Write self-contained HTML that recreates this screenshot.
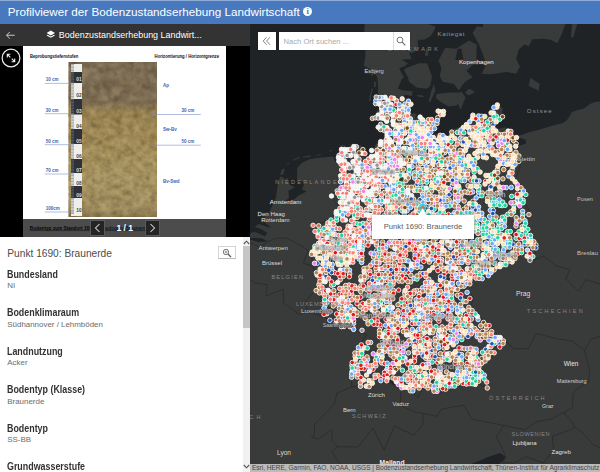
<!DOCTYPE html>
<html lang="de">
<head>
<meta charset="utf-8">
<title>Profilviewer der Bodenzustandserhebung Landwirtschaft</title>
<style>
*{box-sizing:border-box;margin:0;padding:0}
html,body{width:600px;height:472px;overflow:hidden;background:#fff;font-family:"Liberation Sans",sans-serif;}
#hdr{position:absolute;left:0;top:0;width:600px;height:24px;background:#4879bf;color:#fff;box-shadow:inset 0 1px 0 #8eabd8}
#hdr .t{position:absolute;left:7.8px;top:3.2px;font-size:11.68px;line-height:17px;white-space:nowrap}
#hdr .i{position:absolute;left:303.3px;top:7.2px;width:9px;height:9px;border-radius:50%;background:#fff;color:#4879bf;font-family:"Liberation Serif",serif;font-weight:bold;font-size:8.5px;line-height:9.5px;text-align:center}
#left{position:absolute;left:0;top:24px;width:250px;height:448px;background:#fff;overflow:hidden}
#ph{position:absolute;left:0;top:0;width:250px;height:22px;background:#333;color:#fff}
#ph .back{position:absolute;left:4.8px;top:6.2px}
#ph .ttl{position:absolute;left:-1px;width:250px;top:3px;text-align:center;font-size:8.93px;line-height:16px;white-space:nowrap}
#ph .ttl svg{vertical-align:-1.5px;margin-right:3px}
#viewer{position:absolute;left:0;top:22px;width:250px;height:191px;background:#000;overflow:hidden}
#img{position:absolute;left:23px;top:0;width:203px;height:200px;background:#fff}
#pager{position:absolute;left:0;top:173px;width:250px;height:18px;background:rgba(0,0,0,.7)}
#content{position:absolute;left:0;top:213px;width:250px;height:235px;background:#fff;color:#323232}
#map{position:absolute;left:250px;top:24px;width:350px;height:448px;background:#1f2326;overflow:hidden}
#attr{position:absolute;left:0;bottom:0;width:350px;height:8.5px;background:rgba(210,210,210,.85);color:#444;font-size:6.5px;line-height:8.5px;white-space:nowrap;padding-left:2px;overflow:hidden}
.btn{position:absolute;background:#fff;box-shadow:0 0 1px rgba(0,0,0,.4)}

.ptitle{position:absolute;left:7.3px;top:10px;font-size:10.18px;line-height:13px;color:#4c4c4c;white-space:nowrap}
.zoombtn{position:absolute;left:217.5px;top:8.5px;width:18px;height:13.5px;border:1px solid #d4d4d4;border-bottom-color:#b8b8b8;border-radius:1px;background:#fff}
.zoombtn svg{position:absolute;left:3.5px;top:1.5px}
.f{position:absolute;left:7.3px;white-space:nowrap}
.f b{display:block;font-size:10px;line-height:13px;color:#323232;transform:scaleX(.889);transform-origin:0 0}
.f span{display:block;font-size:7.93px;line-height:9px;margin-top:.4px;color:#6b6b6b}
.sb{position:absolute;left:242.5px;top:0;width:7.5px;height:235px;background:#f1f1f1}
.sb .thumb{position:absolute;left:0;top:9px;width:7.5px;height:82px;background:#c6c6c6}
.sb .up{position:absolute;left:.3px;top:2.5px}
.sb .dn{position:absolute;left:.3px;bottom:3.5px}
.pb{position:absolute;top:1.2px;width:15px;height:16px;background:#242424;border:1px solid #5a5a5a}
.pb svg{position:absolute;left:-1px;top:-1px}
.pn{position:absolute;left:105px;width:39.5px;top:1px;text-align:center;color:#fff;font-weight:bold;font-size:8.6px;line-height:16px}
.ph{position:absolute;left:4.6px;top:2.5px;font-size:7.6px;line-height:13px;color:#a9a9a9}
.sdiv{position:absolute;left:113.5px;top:0;width:1px;height:18px;background:#ddd}
.tip{position:absolute;left:122px;top:191px;width:102px;height:23.5px;background:#fff;box-shadow:0 0 2px rgba(0,0,0,.5);text-align:center}
.tip span{font-size:7.63px;line-height:23.5px;color:#5a5a5a;white-space:nowrap}
</style>
</head>
<body>
<div id="hdr"><div class="t">Profilviewer der Bodenzustandserhebung Landwirtschaft</div><div class="i">i</div></div>
<div id="left">
 <div id="ph">
  <svg class="back" width="10.5" height="10.5" viewBox="0 0 12 12"><path d="M11 6H2M5.5 2.2L1.7 6l3.8 3.8" fill="none" stroke="#ddd" stroke-width="1"/></svg>
  <div class="ttl"><svg width="9.6" height="9.6" viewBox="0 0 16 16"><path d="M8 1L1 5l7 4 7-4zM2.5 8L1 9l7 4 7-4-1.5-1L8 11z" fill="#fff"/></svg>Bodenzustandserhebung Landwirt...</div>
 </div>
 <div id="viewer">
  <div id="img"><svg width="203" height="191" viewBox="0 0 203 191" style="position:absolute;left:0;top:0;font-family:'Liberation Sans',sans-serif">
<defs>
<linearGradient id="soil" x1="0" y1="0" x2="0" y2="1">
<stop offset="0" stop-color="#6b5d49"/><stop offset=".05" stop-color="#7a6a54"/><stop offset=".26" stop-color="#77674e"/><stop offset=".32" stop-color="#9a8350"/><stop offset=".5" stop-color="#a38c55"/><stop offset=".75" stop-color="#ab9863"/><stop offset=".95" stop-color="#a08d5c"/><stop offset="1" stop-color="#857349"/>
</linearGradient>
<filter id="tex" x="0" y="0" width="100%" height="100%"><feTurbulence type="fractalNoise" baseFrequency=".18" numOctaves="3" seed="4" result="n"/><feColorMatrix in="n" type="matrix" values="0 0 0 0 0  0 0 0 0 0  0 0 0 0 0  .9 .9 .9 0 -1.05" result="a"/><feFlood flood-color="#3a2c18"/><feComposite in2="a" operator="in"/></filter>
<filter id="tex2" x="0" y="0" width="100%" height="100%"><feTurbulence type="fractalNoise" baseFrequency=".09" numOctaves="2" seed="9" result="n"/><feColorMatrix in="n" type="matrix" values="0 0 0 0 0  0 0 0 0 0  0 0 0 0 0  1.1 1.1 1.1 0 -1.25" result="a"/><feFlood flood-color="#d8c79a"/><feComposite in2="a" operator="in"/></filter>
</defs>
<rect x="45.5" y="16" width="88.5" height="155" fill="url(#soil)"/>
<rect x="45.5" y="16" width="88.5" height="155" filter="url(#tex)" opacity=".4"/>
<rect x="45.5" y="16" width="88.5" height="155" filter="url(#tex2)" opacity=".28"/>
<rect x="48" y="18" width="11" height="152" fill="#eeeeec"/>
<rect x="48" y="26" width="11" height="11" fill="#2e3138"/>
<rect x="48" y="53" width="11" height="15.5" fill="#2e3138"/>
<rect x="48" y="83" width="11" height="15" fill="#2e3138"/>
<rect x="48" y="113" width="11" height="14" fill="#2e3138"/>
<rect x="48" y="140" width="11" height="12" fill="#2e3138"/>
<path d="M48.0,18.5h3 M48.0,20.0h3 M48.0,21.5h3 M48.0,23.1h3 M48.0,24.6h3 M48.0,26.1h3 M48.0,27.6h3 M48.0,29.1h3 M48.0,30.7h3 M48.0,32.2h3 M48.0,33.7h3 M48.0,35.2h3 M48.0,36.7h3 M48.0,38.3h3 M48.0,39.8h3 M48.0,41.3h3 M48.0,42.8h3 M48.0,44.3h3 M48.0,45.9h3 M48.0,47.4h3 M48.0,48.9h3 M48.0,50.4h3 M48.0,51.9h3 M48.0,53.5h3 M48.0,55.0h3 M48.0,56.5h3 M48.0,58.0h3 M48.0,59.5h3 M48.0,61.1h3 M48.0,62.6h3 M48.0,64.1h3 M48.0,65.6h3 M48.0,67.1h3 M48.0,68.7h3 M48.0,70.2h3 M48.0,71.7h3 M48.0,73.2h3 M48.0,74.7h3 M48.0,76.3h3 M48.0,77.8h3 M48.0,79.3h3 M48.0,80.8h3 M48.0,82.3h3 M48.0,83.9h3 M48.0,85.4h3 M48.0,86.9h3 M48.0,88.4h3 M48.0,89.9h3 M48.0,91.5h3 M48.0,93.0h3 M48.0,94.5h3 M48.0,96.0h3 M48.0,97.5h3 M48.0,99.1h3 M48.0,100.6h3 M48.0,102.1h3 M48.0,103.6h3 M48.0,105.1h3 M48.0,106.7h3 M48.0,108.2h3 M48.0,109.7h3 M48.0,111.2h3 M48.0,112.7h3 M48.0,114.3h3 M48.0,115.8h3 M48.0,117.3h3 M48.0,118.8h3 M48.0,120.3h3 M48.0,121.9h3 M48.0,123.4h3 M48.0,124.9h3 M48.0,126.4h3 M48.0,127.9h3 M48.0,129.5h3 M48.0,131.0h3 M48.0,132.5h3 M48.0,134.0h3 M48.0,135.5h3 M48.0,137.1h3 M48.0,138.6h3 M48.0,140.1h3 M48.0,141.6h3 M48.0,143.1h3 M48.0,144.7h3 M48.0,146.2h3 M48.0,147.7h3 M48.0,149.2h3 M48.0,150.7h3 M48.0,152.3h3 M48.0,153.8h3 M48.0,155.3h3 M48.0,156.8h3 M48.0,158.3h3 M48.0,159.9h3 M48.0,161.4h3 M48.0,162.9h3 M48.0,164.4h3 M48.0,165.9h3 M48.0,167.5h3" stroke="#777" stroke-width=".6"/>
<text x="53.2" y="35" font-size="4.6" font-weight="bold" fill="#ddd" textLength="5.4" lengthAdjust="spacingAndGlyphs">01</text>
<text x="53.2" y="51" font-size="4.6" font-weight="bold" fill="#444" textLength="5.4" lengthAdjust="spacingAndGlyphs">02</text>
<text x="53.2" y="67" font-size="4.6" font-weight="bold" fill="#ddd" textLength="5.4" lengthAdjust="spacingAndGlyphs">03</text>
<text x="53.2" y="82" font-size="4.6" font-weight="bold" fill="#444" textLength="5.4" lengthAdjust="spacingAndGlyphs">04</text>
<text x="53.2" y="97" font-size="4.6" font-weight="bold" fill="#ddd" textLength="5.4" lengthAdjust="spacingAndGlyphs">05</text>
<text x="53.2" y="112" font-size="4.6" font-weight="bold" fill="#444" textLength="5.4" lengthAdjust="spacingAndGlyphs">06</text>
<text x="53.2" y="126" font-size="4.6" font-weight="bold" fill="#ddd" textLength="5.4" lengthAdjust="spacingAndGlyphs">07</text>
<text x="53.2" y="139" font-size="4.6" font-weight="bold" fill="#444" textLength="5.4" lengthAdjust="spacingAndGlyphs">08</text>
<text x="53.2" y="151" font-size="4.6" font-weight="bold" fill="#ddd" textLength="5.4" lengthAdjust="spacingAndGlyphs">09</text>
<text x="53.2" y="166" font-size="4.6" font-weight="bold" fill="#444" textLength="5.4" lengthAdjust="spacingAndGlyphs">10</text>
<text x="7" y="12" font-size="4.5" font-weight="bold" fill="#111" textLength="48.3" lengthAdjust="spacingAndGlyphs">Beprobungstiefenstufen</text>
<text x="131.6" y="12" font-size="4.5" font-weight="bold" fill="#111" textLength="64.4" lengthAdjust="spacingAndGlyphs">Horizontierung / Horizontgrenze</text>
<path d="M21.8,37.4H51.0" stroke="#7a95c8" stroke-width=".6"/>
<text x="22.7" y="35.2" font-size="4.5" font-weight="bold" fill="#3c64b4">10 cm</text>
<path d="M21.8,67.7H51.0" stroke="#7a95c8" stroke-width=".6"/>
<text x="22.7" y="65.5" font-size="4.5" font-weight="bold" fill="#3c64b4">30 cm</text>
<path d="M21.8,98.7H51.0" stroke="#7a95c8" stroke-width=".6"/>
<text x="22.7" y="96.5" font-size="4.5" font-weight="bold" fill="#3c64b4">50 cm</text>
<path d="M21.8,128.0H51.0" stroke="#7a95c8" stroke-width=".6"/>
<text x="22.7" y="125.8" font-size="4.5" font-weight="bold" fill="#3c64b4">70 cm</text>
<path d="M21.8,166.0H51.0" stroke="#7a95c8" stroke-width=".6"/>
<text x="22.7" y="163.8" font-size="4.5" font-weight="bold" fill="#3c64b4">100cm</text>
<path d="M129.0,68.5H177.8" stroke="#7a95c8" stroke-width=".6"/>
<text x="158.5" y="65.9" font-size="4.5" font-weight="bold" fill="#3c64b4">30 cm</text>
<path d="M129.0,99.2H177.8" stroke="#7a95c8" stroke-width=".6"/>
<text x="158.5" y="96.6" font-size="4.5" font-weight="bold" fill="#3c64b4">50 cm</text>
<text x="140.0" y="41.2" font-size="4.5" font-weight="bold" fill="#3c64b4">Ap</text>
<text x="140.0" y="85.2" font-size="4.5" font-weight="bold" fill="#3c64b4">Sw-Bv</text>
<text x="140.0" y="136.8" font-size="4.5" font-weight="bold" fill="#3c64b4">Bv-Swd</text>
<text x="6.800000000000001" y="183.6" font-size="4.7" font-weight="bold" fill="#111" text-decoration="underline">Bodentyp zum Standort 1690: <tspan fill="#2b4f9e">Pseudogley-Braunerde</tspan></text>
</svg></div>
  <div id="pager"><div class="pb" style="left:90px"><svg width="15" height="16" viewBox="0 0 15 16"><path d="M9.5 4L5.5 8l4 4" fill="none" stroke="#d8d8d8" stroke-width="1.05"/></svg></div>
<div class="pn">1 / 1</div>
<div class="pb" style="left:144.5px"><svg width="15" height="16" viewBox="0 0 15 16"><path d="M5.5 4l4 4-4 4" fill="none" stroke="#d8d8d8" stroke-width="1.05"/></svg></div>
</div>
  <svg style="position:absolute;left:1.3px;top:2px" width="20" height="20" viewBox="0 0 20 20"><circle cx="10" cy="10" r="8.9" fill="#000" stroke="#eee" stroke-width="1.2"/><path d="M6.3 9.4V6.3H9.4M6.6 6.6L9.3 9.3M13.7 10.6v3.1h-3.1M13.4 13.4L10.7 10.7" fill="none" stroke="#eee" stroke-width="1.1"/></svg>

 </div>
 <div id="content"><div class="ptitle">Punkt 1690: Braunerde</div>
<div class="zoombtn"><svg width="10" height="10" viewBox="0 0 10 10"><circle cx="4" cy="4" r="2.7" fill="none" stroke="#555" stroke-width=".8"/><path d="M6 6L9 9" stroke="#555" stroke-width="1.2"/><path d="M2.6 4h2.8M4 2.6v2.8" stroke="#555" stroke-width=".6"/></svg></div>
<div class="f" style="top:30.8px"><b>Bundesland</b><span>NI</span></div>
<div class="f" style="top:69.3px"><b>Bodenklimaraum</b><span>Südhannover / Lehmböden</span></div>
<div class="f" style="top:107.8px"><b>Landnutzung</b><span>Acker</span></div>
<div class="f" style="top:146.3px"><b>Bodentyp (Klasse)</b><span>Braunerde</span></div>
<div class="f" style="top:184.8px"><b>Bodentyp</b><span>SS-BB</span></div>
<div class="f" style="top:223.3px"><b>Grundwasserstufe</b><span>&nbsp;</span></div>
<div class="sb"><div class="thumb"></div>
<svg class="up" width="7" height="5" viewBox="0 0 7 5"><path d="M.8 4L3.5 1.2 6.2 4" fill="none" stroke="#555" stroke-width="1.1"/></svg>
<svg class="dn" width="7" height="5" viewBox="0 0 7 5"><path d="M.8 1L3.5 3.8 6.2 1" fill="none" stroke="#555" stroke-width="1.1"/></svg></div>
</div>
</div>
<div id="map">
<svg width="350" height="448" viewBox="0 0 350 448" style="position:absolute;left:0;top:0">
<rect width="350" height="448" fill="#1f2326"/>
<path d="M-87.4,490.6 -87.4,239.9 -25.2,230.1 -7.7,218.9 -3.5,217.3 1.0,215.8 8.5,218.1 17.7,217.3 12.2,214.6 4.7,213.8 1.5,214.2 -1.7,211.0 2.2,208.2 6.0,208.2 14.7,212.2 17.2,209.0 11.0,204.9 4.7,202.9 8.5,200.1 14.7,202.1 20.9,204.1 14.7,198.1 11.0,198.5 13.4,194.9 14.7,192.9 19.7,187.2 25.9,173.8 27.6,161.5 30.1,152.8 32.1,152.8 34.6,155.3 38.3,154.0 47.1,148.2 47.3,144.1 52.0,138.7 59.5,135.3 67.0,134.1 74.4,133.3 83.2,132.4 85.2,137.4 89.4,140.8 91.9,141.6 91.9,136.6 87.4,136.6 86.9,130.3 89.4,125.3 99.4,122.8 111.8,121.5 113.0,125.3 115.5,129.5 113.5,132.4 116.8,134.5 119.3,132.4 119.3,126.1 124.2,126.1 125.5,130.3 124.2,136.6 126.7,130.3 124.7,121.9 129.2,114.8 136.7,115.6 144.2,119.8 151.6,126.1 147.9,119.8 141.7,114.4 135.5,113.5 133.0,108.0 133.0,103.8 135.5,96.5 126.7,96.5 128.0,93.1 136.7,89.3 133.0,83.7 129.2,77.2 128.0,70.3 128.0,62.0 127.2,53.3 123.0,45.9 113.8,41.9 115.5,31.3 114.8,22.4 114.3,9.0 114.8,-2.2 116.8,-22.7 169.1,-22.7 169.1,-4.5 170.3,-2.2 185.3,2.3 184.8,5.4 180.3,12.6 174.0,15.7 167.8,15.7 167.8,24.7 162.8,29.1 159.1,28.7 161.6,34.9 151.6,35.7 157.9,39.3 155.9,41.5 149.1,44.6 154.1,53.3 151.6,55.5 147.9,64.7 154.1,66.4 162.8,67.3 161.6,72.0 155.4,70.7 147.9,74.2 159.1,75.1 162.3,80.7 157.9,89.3 166.6,89.3 165.3,95.2 169.1,91.0 179.0,95.7 186.5,93.1 189.0,94.0 185.3,105.0 181.5,105.9 181.5,110.5 191.5,109.3 197.7,112.7 201.4,105.9 213.4,101.6 220.1,96.5 223.9,88.8 233.8,90.5 237.5,92.2 240.0,85.8 242.5,81.5 247.0,80.2 253.2,84.5 251.7,91.4 255.0,95.2 248.8,96.5 245.0,99.9 247.5,105.0 255.0,102.9 261.2,107.2 267.4,112.2 279.9,108.0 290.0,105.5 301.0,102.0 313.0,99.0 317.0,96.0 322.0,88.0 328.0,86.0 334.0,84.5 340.0,80.0 345.0,78.0 351.0,77.5 360.8,73.8 385.7,92.2 385.7,490.6Z M187.2,90.1 187.7,86.7 194.0,87.1 194.5,91.4 190.2,92.2Z M155.4,44.6 164.1,41.0 169.1,39.3 177.0,39.3 179.0,44.6 182.0,52.4 180.3,62.0 176.5,64.7 166.6,63.4 159.1,57.7 157.9,53.3 154.1,46.7Z M184.0,59.9 185.3,66.4 180.3,78.1 178.5,77.2 181.5,66.4Z M166.6,70.7 172.8,71.6 174.0,73.3 167.8,72.5Z M188.5,36.6 195.2,23.8 205.2,24.7 207.7,23.8 218.9,16.6 226.8,20.6 226.3,35.7 228.3,41.0 223.9,40.1 216.4,46.7 222.6,53.3 215.1,57.7 212.6,60.7 208.9,66.4 203.9,59.9 192.7,57.7 189.7,52.0 191.5,44.6Z M185.8,73.8 186.5,69.9 198.9,68.6 207.7,68.6 208.9,78.5 206.4,81.5 198.9,82.4 191.5,78.5Z M205.9,69.4 211.4,67.7 215.6,73.3 210.7,85.4 207.7,79.4Z M215.1,68.6 218.9,64.7 225.1,67.7 218.9,71.6Z M174.8,31.3 176.5,23.3 178.5,26.9 177.8,32.2Z M278.6,62.0 280.4,53.8 289.8,59.9 288.6,66.4Z M233.8,-22.7 233.8,-1.8 232.6,3.2 226.8,2.3 222.6,9.0 228.8,20.2 232.1,28.2 236.3,40.1 231.8,49.8 240.0,50.3 256.7,48.1 266.2,49.8 269.9,42.4 266.2,34.9 268.7,25.5 274.9,20.2 278.6,22.4 282.4,15.3 293.6,14.8 301.0,15.7 307.3,19.3 312.2,9.0 316.0,-1.8 318.5,-22.7Z M321.0,13.5 322.2,-4.5 327.2,-22.7 328.4,-4.5 323.4,13.5Z M30.1,151.1 32.1,144.9 34.6,144.9 33.4,150.3Z M35.4,141.6 39.6,138.3 39.1,139.9Z M42.1,136.2 49.5,132.4 49.5,134.1 43.3,136.6Z M52.5,132.8 60.8,131.6 60.8,132.8 53.3,133.7Z M65.0,131.6 70.7,129.9 70.7,131.2Z M78.2,127.0 81.9,125.7 81.4,127.4Z M89.4,121.9 94.4,120.7 94.4,121.9Z M98.1,120.3 103.1,119.4 103.1,120.7Z M118.8,77.2 120.0,70.7 121.8,64.2 123.0,65.1 121.3,70.7 120.5,77.2Z M121.8,79.4 125.5,77.2 126.7,79.4 124.2,80.7Z M123.8,62.9 124.2,57.7 126.0,57.7 125.7,62.9Z M120.5,51.1 121.3,46.7 123.0,48.1 123.0,52.0Z M126.2,88.0 128.0,85.8 129.7,87.1 128.0,89.3Z" fill="#393a3a"/>
<path d="M38.3,154.0 47.1,148.2 47.1,156.1 52.0,157.7 55.0,157.7 52.0,165.2 56.5,167.6 48.3,171.7 42.1,177.0 38.8,178.6 35.9,176.6 39.1,173.8 38.3,166.8 44.6,163.5 39.6,160.6 37.8,155.3Z M257.5,114.8 263.7,119.8 268.7,121.9 276.1,119.4 275.6,115.6 268.7,113.5 261.2,113.5Z M198.9,490.6 218.9,459.2 222.6,455.7 217.6,448.6 220.1,440.5 226.3,438.0 238.8,432.7 246.3,430.2 250.0,429.1 255.5,432.7 254.2,436.2 250.0,438.7 248.8,448.6 251.2,459.2 261.2,462.7 267.4,450.4 269.9,444.0 276.1,446.9 283.6,455.7 291.1,473.2 291.1,490.6Z M136.7,354.5 141.7,359.4 151.6,364.9 155.4,365.6 149.1,361.9 141.7,356.4Z M207.7,24.7 205.2,35.7 208.9,36.6 213.4,35.7 211.4,24.7Z" fill="#1f2326"/>
<path d="M-3.5,217.3 9.7,223.3 18.4,217.3 25.9,214.2 37.1,214.2 49.5,220.9 58.3,226.1 53.3,239.2 62.0,241.9 M-23.9,228.9 -15.2,243.9 -5.2,251.7 4.7,258.8 17.2,260.7 15.9,272.0 33.4,265.4 33.4,278.9 49.5,290.5 57.5,288.5 M65.2,266.2 55.8,277.0 57.5,288.5 71.2,291.6 M101.8,362.7 86.9,369.3 84.4,380.3 64.5,400.3 64.5,411.2 61.3,413.0 68.2,414.8 81.9,405.8 81.9,416.6 88.1,422.7 M88.1,422.7 81.9,427.3 89.4,439.8 77.7,452.2 86.9,466.2 84.4,476.7 M88.1,422.7 108.1,423.0 123.0,404.0 134.2,426.2 144.2,402.1 164.1,411.2 172.8,400.3 173.3,389.4 M173.3,389.4 166.6,388.7 151.6,382.1 150.4,373.0 151.6,364.5 M173.3,389.4 186.5,392.4 191.5,385.1 213.9,381.1 221.4,394.9 253.7,401.4 M253.7,401.4 246.3,413.0 251.2,421.9 256.2,434.4 M253.7,401.4 274.9,405.8 286.1,397.8 302.3,394.9 311.0,389.4 313.5,388.7 M251.2,438.7 263.7,439.1 276.1,432.7 293.6,439.1 303.5,425.5 302.3,412.2 318.5,406.5 324.7,402.9 319.7,394.9 313.5,388.7 M313.5,388.7 322.2,384.0 323.4,369.3 328.4,363.8 338.4,358.2 339.6,347.1 M324.7,402.9 333.4,409.4 343.4,420.9 360.8,428.0 M339.6,347.1 334.7,326.5 322.2,317.1 306.0,314.5 286.1,309.5 278.6,324.7 263.7,324.7 257.0,318.2 M334.7,326.5 340.9,315.2 358.3,309.5 368.3,298.1 M281.6,237.2 293.6,232.0 306.0,241.9 319.7,245.8 316.0,254.9 328.4,267.3 335.9,255.6 352.1,260.7 350.8,265.4 360.8,270.0 374.5,275.1 M128.0,70.3 136.7,72.0 147.9,74.2 159.1,75.1 162.3,80.7 157.9,89.3 166.6,89.3 165.3,95.2 169.1,91.0 179.0,95.7 186.5,93.1 189.0,91.4 187.7,86.7 194.0,87.1 194.0,92.2 189.0,94.0 185.3,105.0 181.5,105.9 181.5,110.5 191.5,109.3 197.7,112.7 201.4,105.9 213.4,101.6 220.1,96.5 223.9,88.8 233.8,90.5 237.5,92.2 240.0,85.8 242.5,81.5 247.0,80.2 253.2,84.5 251.7,91.4 255.0,95.2 248.8,96.5 245.0,99.9 247.5,105.0 255.0,102.9 261.2,107.2 266.7,112.2 267.9,121.9 271.4,138.7 264.9,156.9 276.6,168.4 274.9,177.8 279.9,189.2 276.1,199.3 279.9,210.2 286.8,221.3 285.6,228.1 281.6,237.2 276.6,234.8 273.6,230.9 268.7,230.1 267.4,236.0 258.7,239.9 248.8,243.9 241.3,250.9 236.3,254.5 223.9,255.6 219.6,261.5 213.9,258.8 216.4,267.3 223.9,273.1 221.4,280.9 227.6,292.4 236.3,298.1 246.3,309.5 257.0,318.2 247.5,325.8 236.3,337.8 230.1,343.4 236.3,352.7 238.3,365.6 230.1,360.1 216.4,361.9 201.4,362.7 189.0,369.3 172.8,363.8 167.8,373.7 161.6,367.5 151.6,364.5 141.7,360.1 131.7,358.2 125.5,354.5 121.8,363.1 101.8,362.7 100.6,350.8 101.8,335.9 106.8,324.7 116.8,310.7 99.4,305.0 86.9,301.9 75.7,293.5 71.2,291.6 74.4,278.9 65.2,266.2 69.5,257.6 63.2,243.9 62.0,234.8 58.8,230.1 64.5,224.1 67.0,212.2 61.3,198.9 72.0,198.9 81.9,193.3 88.1,181.9 79.4,171.7 88.1,166.0 91.9,142.8 87.4,136.6 86.9,130.3 89.4,125.3 99.4,122.8 111.8,121.5 113.0,125.3 115.5,129.5 113.5,132.4 116.8,134.5 119.3,132.4 119.3,126.1 124.2,126.1 124.7,121.9 129.2,114.8 136.7,115.6 133.0,108.0 133.0,103.8 135.5,96.5 126.7,96.5 128.0,93.1 136.7,89.3 133.0,83.7 129.2,77.2Z" fill="none" stroke="#2a2a2a" stroke-width="0.8" stroke-linejoin="round"/>
<g stroke="#fff" stroke-width="0.85" style="filter:blur(.33px)">
<g fill="#6ea8fb">
<circle cx="240.3" cy="186.3" r="2.25"/>
<circle cx="168.6" cy="290.8" r="2.25"/>
<circle cx="231.1" cy="100.7" r="2.25"/>
<circle cx="170.2" cy="328.6" r="2.25"/>
<circle cx="228.7" cy="92.0" r="2.25"/>
<circle cx="167.9" cy="326.2" r="2.25"/>
<circle cx="246.1" cy="115.5" r="2.25"/>
<circle cx="105.1" cy="341.1" r="2.25"/>
<circle cx="213.4" cy="351.3" r="2.25"/>
<circle cx="89.0" cy="281.7" r="2.25"/>
<circle cx="189.7" cy="290.8" r="2.25"/>
<circle cx="154.3" cy="284.3" r="2.25"/>
<circle cx="256.9" cy="137.1" r="2.25"/>
<circle cx="200.5" cy="128.9" r="2.25"/>
<circle cx="135.9" cy="221.8" r="2.25"/>
<circle cx="222.7" cy="167.9" r="2.25"/>
<circle cx="192.4" cy="291.4" r="2.25"/>
<circle cx="154.3" cy="189.6" r="2.25"/>
<circle cx="188.5" cy="312.1" r="2.25"/>
<circle cx="103.5" cy="299.4" r="2.25"/>
<circle cx="195.4" cy="123.3" r="2.25"/>
<circle cx="162.5" cy="213.7" r="2.25"/>
<circle cx="154.6" cy="201.7" r="2.25"/>
<circle cx="154.6" cy="94.7" r="2.25"/>
</g>
<g fill="#b58252">
<circle cx="257.3" cy="211.2" r="2.25"/>
<circle cx="81.5" cy="243.2" r="2.25"/>
<circle cx="253.9" cy="216.9" r="2.25"/>
<circle cx="170.4" cy="249.5" r="2.25"/>
<circle cx="143.6" cy="94.4" r="2.25"/>
<circle cx="254.6" cy="193.0" r="2.25"/>
<circle cx="148.1" cy="129.9" r="2.25"/>
<circle cx="163.5" cy="201.5" r="2.25"/>
<circle cx="272.2" cy="202.8" r="2.25"/>
<circle cx="204.5" cy="194.6" r="2.25"/>
<circle cx="237.9" cy="168.6" r="2.25"/>
<circle cx="155.2" cy="248.3" r="2.25"/>
<circle cx="179.9" cy="296.5" r="2.25"/>
<circle cx="126.9" cy="215.2" r="2.25"/>
<circle cx="210.3" cy="353.5" r="2.25"/>
<circle cx="175.1" cy="361.9" r="2.25"/>
<circle cx="226.9" cy="236.7" r="2.25"/>
<circle cx="211.2" cy="170.7" r="2.25"/>
<circle cx="147.0" cy="162.9" r="2.25"/>
<circle cx="111.9" cy="232.5" r="2.25"/>
<circle cx="163.7" cy="101.2" r="2.25"/>
<circle cx="156.3" cy="210.1" r="2.25"/>
<circle cx="256.7" cy="223.0" r="2.25"/>
<circle cx="137.7" cy="251.3" r="2.25"/>
<circle cx="149.9" cy="248.1" r="2.25"/>
<circle cx="153.5" cy="216.3" r="2.25"/>
<circle cx="122.9" cy="259.6" r="2.25"/>
<circle cx="86.4" cy="204.5" r="2.25"/>
<circle cx="172.9" cy="175.2" r="2.25"/>
<circle cx="171.4" cy="293.1" r="2.25"/>
</g>
<g fill="#fde3b5">
<circle cx="159.3" cy="127.6" r="2.25"/>
<circle cx="262.3" cy="154.7" r="2.25"/>
<circle cx="151.8" cy="174.9" r="2.25"/>
<circle cx="131.1" cy="259.7" r="2.25"/>
<circle cx="195.8" cy="359.1" r="2.25"/>
<circle cx="163.3" cy="361.1" r="2.25"/>
<circle cx="158.0" cy="94.9" r="2.25"/>
<circle cx="183.1" cy="205.2" r="2.25"/>
<circle cx="197.2" cy="141.1" r="2.25"/>
<circle cx="116.6" cy="351.0" r="2.25"/>
<circle cx="178.4" cy="98.9" r="2.25"/>
<circle cx="178.1" cy="108.0" r="2.25"/>
<circle cx="245.8" cy="106.9" r="2.25"/>
<circle cx="201.3" cy="126.7" r="2.25"/>
<circle cx="175.4" cy="101.5" r="2.25"/>
</g>
<g fill="#1f55b5">
<circle cx="108.8" cy="225.8" r="2.25"/>
<circle cx="75.8" cy="252.0" r="2.25"/>
<circle cx="173.1" cy="332.0" r="2.25"/>
<circle cx="123.2" cy="253.6" r="2.25"/>
</g>
<g fill="#7b4a12">
<circle cx="222.9" cy="177.3" r="2.25"/>
<circle cx="164.8" cy="163.0" r="2.25"/>
<circle cx="220.4" cy="339.6" r="2.25"/>
</g>
<g fill="#1fd6a0">
<circle cx="266.9" cy="196.5" r="2.25"/>
<circle cx="152.0" cy="186.6" r="2.25"/>
<circle cx="203.6" cy="218.3" r="2.25"/>
<circle cx="113.3" cy="264.7" r="2.25"/>
<circle cx="236.0" cy="212.7" r="2.25"/>
<circle cx="227.1" cy="144.6" r="2.25"/>
<circle cx="277.8" cy="205.3" r="2.25"/>
<circle cx="242.7" cy="204.1" r="2.25"/>
<circle cx="245.7" cy="195.7" r="2.25"/>
<circle cx="145.5" cy="186.2" r="2.25"/>
<circle cx="209.7" cy="132.2" r="2.25"/>
<circle cx="189.2" cy="211.3" r="2.25"/>
<circle cx="193.3" cy="188.1" r="2.25"/>
<circle cx="104.0" cy="185.2" r="2.25"/>
<circle cx="167.8" cy="148.4" r="2.25"/>
<circle cx="164.5" cy="148.8" r="2.25"/>
</g>
<g fill="#969696">
<circle cx="171.1" cy="213.9" r="2.25"/>
<circle cx="87.2" cy="166.9" r="2.25"/>
<circle cx="208.8" cy="232.4" r="2.25"/>
<circle cx="137.1" cy="88.6" r="2.25"/>
<circle cx="185.5" cy="235.1" r="2.25"/>
</g>
<g fill="#f57ef0">
<circle cx="103.5" cy="220.5" r="2.25"/>
<circle cx="230.3" cy="316.0" r="2.25"/>
<circle cx="184.5" cy="178.4" r="2.25"/>
<circle cx="177.4" cy="281.7" r="2.25"/>
</g>
<g fill="#e31a1c">
<circle cx="211.3" cy="247.3" r="2.25"/>
<circle cx="110.4" cy="273.2" r="2.25"/>
<circle cx="164.6" cy="334.4" r="2.25"/>
<circle cx="151.6" cy="281.2" r="2.25"/>
<circle cx="162.2" cy="299.5" r="2.25"/>
<circle cx="144.8" cy="292.4" r="2.25"/>
<circle cx="168.2" cy="222.4" r="2.25"/>
<circle cx="268.4" cy="229.0" r="2.25"/>
<circle cx="123.8" cy="297.8" r="2.25"/>
<circle cx="130.3" cy="303.5" r="2.25"/>
<circle cx="235.6" cy="328.0" r="2.25"/>
<circle cx="218.5" cy="298.5" r="2.25"/>
<circle cx="181.9" cy="264.1" r="2.25"/>
</g>
<g fill="#fb8072">
<circle cx="99.0" cy="261.0" r="2.25"/>
<circle cx="92.5" cy="264.6" r="2.25"/>
<circle cx="199.2" cy="267.5" r="2.25"/>
<circle cx="169.0" cy="210.7" r="2.25"/>
<circle cx="157.3" cy="106.5" r="2.25"/>
<circle cx="194.2" cy="312.3" r="2.25"/>
<circle cx="101.6" cy="269.9" r="2.25"/>
<circle cx="137.2" cy="183.4" r="2.25"/>
<circle cx="163.9" cy="358.0" r="2.25"/>
<circle cx="175.7" cy="175.1" r="2.25"/>
<circle cx="198.4" cy="282.2" r="2.25"/>
<circle cx="103.7" cy="205.4" r="2.25"/>
<circle cx="193.6" cy="182.1" r="2.25"/>
<circle cx="236.7" cy="358.1" r="2.25"/>
<circle cx="143.0" cy="260.2" r="2.25"/>
<circle cx="133.1" cy="135.5" r="2.25"/>
<circle cx="153.6" cy="206.8" r="2.25"/>
<circle cx="201.1" cy="132.3" r="2.25"/>
<circle cx="136.9" cy="179.8" r="2.25"/>
<circle cx="183.9" cy="281.8" r="2.25"/>
<circle cx="130.7" cy="103.3" r="2.25"/>
<circle cx="104.8" cy="187.6" r="2.25"/>
<circle cx="146.6" cy="88.8" r="2.25"/>
</g>
<g fill="#f2f2f2">
<circle cx="138.3" cy="153.0" r="2.25"/>
<circle cx="119.7" cy="182.8" r="2.25"/>
<circle cx="116.9" cy="170.2" r="2.25"/>
<circle cx="186.2" cy="122.5" r="2.25"/>
<circle cx="162.6" cy="137.1" r="2.25"/>
<circle cx="109.0" cy="138.2" r="2.25"/>
<circle cx="112.1" cy="208.8" r="2.25"/>
<circle cx="124.4" cy="132.4" r="2.25"/>
<circle cx="134.1" cy="94.7" r="2.25"/>
<circle cx="139.4" cy="118.5" r="2.25"/>
<circle cx="142.9" cy="97.2" r="2.25"/>
<circle cx="129.2" cy="245.1" r="2.25"/>
<circle cx="102.0" cy="347.5" r="2.25"/>
</g>
<g fill="#6ea8fb">
<circle cx="230.8" cy="204.3" r="2.25"/>
<circle cx="178.8" cy="352.3" r="2.25"/>
<circle cx="229.0" cy="156.8" r="2.25"/>
<circle cx="155.0" cy="80.1" r="2.25"/>
<circle cx="191.8" cy="229.2" r="2.25"/>
<circle cx="175.8" cy="178.4" r="2.25"/>
<circle cx="198.7" cy="288.0" r="2.25"/>
<circle cx="227.1" cy="312.6" r="2.25"/>
<circle cx="127.3" cy="194.1" r="2.25"/>
<circle cx="196.8" cy="170.8" r="2.25"/>
<circle cx="162.1" cy="142.7" r="2.25"/>
<circle cx="147.9" cy="112.8" r="2.25"/>
<circle cx="215.7" cy="120.4" r="2.25"/>
<circle cx="106.4" cy="223.4" r="2.25"/>
<circle cx="163.1" cy="104.4" r="2.25"/>
<circle cx="182.6" cy="134.7" r="2.25"/>
<circle cx="227.4" cy="204.2" r="2.25"/>
<circle cx="99.5" cy="246.2" r="2.25"/>
</g>
<g fill="#b58252">
<circle cx="123.8" cy="217.8" r="2.25"/>
<circle cx="158.3" cy="246.2" r="2.25"/>
<circle cx="134.6" cy="327.3" r="2.25"/>
<circle cx="140.9" cy="331.0" r="2.25"/>
<circle cx="227.5" cy="221.8" r="2.25"/>
<circle cx="176.3" cy="148.7" r="2.25"/>
<circle cx="90.3" cy="255.5" r="2.25"/>
<circle cx="205.3" cy="351.1" r="2.25"/>
<circle cx="148.4" cy="121.0" r="2.25"/>
<circle cx="171.8" cy="207.7" r="2.25"/>
<circle cx="203.9" cy="211.7" r="2.25"/>
<circle cx="190.6" cy="179.4" r="2.25"/>
<circle cx="178.4" cy="95.7" r="2.25"/>
<circle cx="231.6" cy="191.9" r="2.25"/>
<circle cx="224.3" cy="218.7" r="2.25"/>
<circle cx="181.0" cy="98.9" r="2.25"/>
<circle cx="210.7" cy="174.0" r="2.25"/>
<circle cx="185.6" cy="240.4" r="2.25"/>
<circle cx="219.2" cy="292.4" r="2.25"/>
<circle cx="175.1" cy="116.2" r="2.25"/>
<circle cx="265.7" cy="223.0" r="2.25"/>
<circle cx="213.0" cy="135.1" r="2.25"/>
<circle cx="149.2" cy="101.2" r="2.25"/>
<circle cx="104.6" cy="262.1" r="2.25"/>
<circle cx="195.6" cy="276.3" r="2.25"/>
<circle cx="162.0" cy="133.7" r="2.25"/>
<circle cx="210.1" cy="301.1" r="2.25"/>
<circle cx="199.4" cy="329.7" r="2.25"/>
<circle cx="146.6" cy="157.2" r="2.25"/>
<circle cx="206.6" cy="141.6" r="2.25"/>
<circle cx="222.8" cy="345.3" r="2.25"/>
<circle cx="195.1" cy="305.6" r="2.25"/>
</g>
<g fill="#fde3b5">
<circle cx="154.7" cy="109.3" r="2.25"/>
<circle cx="196.8" cy="164.0" r="2.25"/>
<circle cx="72.2" cy="254.3" r="2.25"/>
<circle cx="172.0" cy="116.1" r="2.25"/>
<circle cx="227.5" cy="133.4" r="2.25"/>
<circle cx="119.3" cy="262.5" r="2.25"/>
<circle cx="70.1" cy="245.1" r="2.25"/>
<circle cx="233.9" cy="213.4" r="2.25"/>
<circle cx="239.4" cy="127.1" r="2.25"/>
<circle cx="148.5" cy="106.3" r="2.25"/>
<circle cx="193.1" cy="184.9" r="2.25"/>
<circle cx="225.3" cy="360.4" r="2.25"/>
<circle cx="182.2" cy="157.9" r="2.25"/>
<circle cx="183.5" cy="125.4" r="2.25"/>
<circle cx="186.4" cy="116.6" r="2.25"/>
<circle cx="169.4" cy="110.7" r="2.25"/>
<circle cx="244.6" cy="157.4" r="2.25"/>
<circle cx="157.7" cy="363.6" r="2.25"/>
<circle cx="243.7" cy="160.0" r="2.25"/>
<circle cx="216.4" cy="100.6" r="2.25"/>
<circle cx="212.8" cy="200.5" r="2.25"/>
<circle cx="221.0" cy="301.4" r="2.25"/>
<circle cx="185.9" cy="128.6" r="2.25"/>
<circle cx="156.1" cy="153.8" r="2.25"/>
</g>
<g fill="#1f55b5">
<circle cx="165.8" cy="216.2" r="2.25"/>
<circle cx="228.8" cy="171.5" r="2.25"/>
<circle cx="182.9" cy="143.6" r="2.25"/>
<circle cx="193.8" cy="253.4" r="2.25"/>
<circle cx="177.8" cy="211.3" r="2.25"/>
<circle cx="126.4" cy="227.0" r="2.25"/>
<circle cx="222.1" cy="292.1" r="2.25"/>
</g>
<g fill="#7b4a12">
<circle cx="173.7" cy="149.0" r="2.25"/>
<circle cx="266.1" cy="119.6" r="2.25"/>
<circle cx="184.1" cy="352.5" r="2.25"/>
<circle cx="285.9" cy="220.9" r="2.25"/>
<circle cx="193.1" cy="194.3" r="2.25"/>
</g>
<g fill="#1fd6a0">
<circle cx="248.4" cy="216.7" r="2.25"/>
<circle cx="252.0" cy="181.6" r="2.25"/>
<circle cx="211.8" cy="315.5" r="2.25"/>
<circle cx="175.2" cy="199.3" r="2.25"/>
<circle cx="166.1" cy="193.2" r="2.25"/>
<circle cx="280.5" cy="214.5" r="2.25"/>
<circle cx="263.4" cy="187.9" r="2.25"/>
<circle cx="268.9" cy="207.8" r="2.25"/>
<circle cx="266.1" cy="214.3" r="2.25"/>
<circle cx="135.2" cy="316.0" r="2.25"/>
<circle cx="115.3" cy="215.0" r="2.25"/>
<circle cx="263.9" cy="181.2" r="2.25"/>
<circle cx="273.2" cy="176.3" r="2.25"/>
</g>
<g fill="#969696">
<circle cx="209.5" cy="235.3" r="2.25"/>
</g>
<g fill="#a9cbff">
<circle cx="136.2" cy="212.6" r="2.25"/>
</g>
<g fill="#f57ef0">
<circle cx="208.0" cy="190.9" r="2.25"/>
<circle cx="247.4" cy="316.9" r="2.25"/>
</g>
<g fill="#e31a1c">
<circle cx="203.5" cy="297.3" r="2.25"/>
<circle cx="235.7" cy="157.2" r="2.25"/>
<circle cx="217.2" cy="339.4" r="2.25"/>
<circle cx="239.1" cy="207.2" r="2.25"/>
<circle cx="172.6" cy="187.2" r="2.25"/>
<circle cx="146.1" cy="80.3" r="2.25"/>
<circle cx="143.7" cy="321.8" r="2.25"/>
<circle cx="201.8" cy="361.9" r="2.25"/>
<circle cx="127.1" cy="294.5" r="2.25"/>
<circle cx="231.6" cy="97.6" r="2.25"/>
<circle cx="172.5" cy="278.6" r="2.25"/>
<circle cx="103.6" cy="296.7" r="2.25"/>
</g>
<g fill="#fb8072">
<circle cx="106.6" cy="134.5" r="2.25"/>
<circle cx="138.2" cy="327.3" r="2.25"/>
<circle cx="163.2" cy="192.5" r="2.25"/>
<circle cx="93.1" cy="187.3" r="2.25"/>
<circle cx="105.7" cy="140.5" r="2.25"/>
<circle cx="100.8" cy="217.5" r="2.25"/>
<circle cx="198.0" cy="294.9" r="2.25"/>
<circle cx="132.6" cy="153.5" r="2.25"/>
<circle cx="120.7" cy="241.2" r="2.25"/>
<circle cx="106.7" cy="137.3" r="2.25"/>
<circle cx="152.8" cy="322.7" r="2.25"/>
<circle cx="77.2" cy="202.0" r="2.25"/>
<circle cx="133.7" cy="124.1" r="2.25"/>
<circle cx="107.4" cy="347.3" r="2.25"/>
<circle cx="94.2" cy="234.2" r="2.25"/>
<circle cx="174.1" cy="128.7" r="2.25"/>
<circle cx="113.8" cy="256.0" r="2.25"/>
<circle cx="96.8" cy="143.5" r="2.25"/>
</g>
<g fill="#f2f2f2">
<circle cx="116.5" cy="167.4" r="2.25"/>
<circle cx="217.6" cy="229.9" r="2.25"/>
<circle cx="149.2" cy="85.7" r="2.25"/>
<circle cx="182.4" cy="149.5" r="2.25"/>
<circle cx="138.0" cy="76.8" r="2.25"/>
<circle cx="140.8" cy="159.1" r="2.25"/>
<circle cx="168.7" cy="293.0" r="2.25"/>
<circle cx="94.1" cy="146.1" r="2.25"/>
<circle cx="192.3" cy="114.1" r="2.25"/>
<circle cx="120.8" cy="155.8" r="2.25"/>
<circle cx="90.3" cy="246.0" r="2.25"/>
<circle cx="141.1" cy="156.1" r="2.25"/>
<circle cx="205.1" cy="265.2" r="2.25"/>
<circle cx="121.5" cy="217.5" r="2.25"/>
<circle cx="144.5" cy="127.0" r="2.25"/>
<circle cx="116.9" cy="161.6" r="2.25"/>
<circle cx="102.5" cy="166.8" r="2.25"/>
</g>
<g fill="#6ea8fb">
<circle cx="203.7" cy="129.7" r="2.25"/>
<circle cx="168.6" cy="305.4" r="2.25"/>
<circle cx="210.3" cy="114.5" r="2.25"/>
<circle cx="269.1" cy="211.0" r="2.25"/>
<circle cx="232.2" cy="254.7" r="2.25"/>
<circle cx="157.6" cy="201.8" r="2.25"/>
<circle cx="107.6" cy="341.5" r="2.25"/>
<circle cx="168.6" cy="119.3" r="2.25"/>
<circle cx="90.1" cy="273.0" r="2.25"/>
<circle cx="168.0" cy="137.3" r="2.25"/>
<circle cx="188.9" cy="146.8" r="2.25"/>
<circle cx="87.9" cy="234.3" r="2.25"/>
<circle cx="231.8" cy="189.3" r="2.25"/>
<circle cx="124.7" cy="288.5" r="2.25"/>
<circle cx="136.1" cy="310.3" r="2.25"/>
<circle cx="228.1" cy="295.6" r="2.25"/>
<circle cx="175.7" cy="261.0" r="2.25"/>
<circle cx="127.3" cy="212.3" r="2.25"/>
<circle cx="219.4" cy="191.7" r="2.25"/>
</g>
<g fill="#b58252">
<circle cx="118.0" cy="297.9" r="2.25"/>
<circle cx="125.6" cy="336.1" r="2.25"/>
<circle cx="250.1" cy="231.6" r="2.25"/>
<circle cx="139.6" cy="280.2" r="2.25"/>
<circle cx="199.1" cy="175.9" r="2.25"/>
<circle cx="265.2" cy="137.3" r="2.25"/>
<circle cx="200.0" cy="141.0" r="2.25"/>
<circle cx="132.7" cy="217.9" r="2.25"/>
<circle cx="225.6" cy="112.5" r="2.25"/>
<circle cx="238.5" cy="310.1" r="2.25"/>
<circle cx="224.9" cy="195.1" r="2.25"/>
<circle cx="114.9" cy="220.8" r="2.25"/>
<circle cx="265.9" cy="131.7" r="2.25"/>
<circle cx="254.6" cy="124.7" r="2.25"/>
<circle cx="141.0" cy="151.2" r="2.25"/>
<circle cx="208.6" cy="338.7" r="2.25"/>
<circle cx="178.5" cy="279.0" r="2.25"/>
<circle cx="215.3" cy="153.2" r="2.25"/>
<circle cx="236.4" cy="304.4" r="2.25"/>
<circle cx="254.6" cy="113.8" r="2.25"/>
<circle cx="143.8" cy="242.0" r="2.25"/>
<circle cx="207.9" cy="354.2" r="2.25"/>
<circle cx="283.2" cy="220.8" r="2.25"/>
<circle cx="181.5" cy="167.1" r="2.25"/>
<circle cx="187.6" cy="178.7" r="2.25"/>
<circle cx="65.1" cy="227.3" r="2.25"/>
<circle cx="218.8" cy="283.4" r="2.25"/>
<circle cx="166.3" cy="98.7" r="2.25"/>
<circle cx="218.0" cy="161.8" r="2.25"/>
<circle cx="171.3" cy="145.7" r="2.25"/>
<circle cx="127.9" cy="289.2" r="2.25"/>
<circle cx="265.0" cy="234.6" r="2.25"/>
<circle cx="178.2" cy="101.9" r="2.25"/>
</g>
<g fill="#fde3b5">
<circle cx="163.6" cy="113.2" r="2.25"/>
<circle cx="247.3" cy="80.9" r="2.25"/>
<circle cx="211.8" cy="143.9" r="2.25"/>
<circle cx="193.5" cy="87.4" r="2.25"/>
<circle cx="202.0" cy="111.4" r="2.25"/>
<circle cx="192.7" cy="285.6" r="2.25"/>
<circle cx="214.9" cy="309.4" r="2.25"/>
<circle cx="254.8" cy="119.4" r="2.25"/>
<circle cx="212.7" cy="127.1" r="2.25"/>
<circle cx="280.3" cy="220.1" r="2.25"/>
<circle cx="221.2" cy="141.9" r="2.25"/>
<circle cx="104.2" cy="285.4" r="2.25"/>
<circle cx="238.6" cy="151.5" r="2.25"/>
<circle cx="124.9" cy="277.1" r="2.25"/>
<circle cx="201.1" cy="208.7" r="2.25"/>
<circle cx="205.6" cy="176.2" r="2.25"/>
<circle cx="174.8" cy="287.6" r="2.25"/>
<circle cx="251.5" cy="213.7" r="2.25"/>
<circle cx="164.2" cy="166.4" r="2.25"/>
<circle cx="227.9" cy="106.1" r="2.25"/>
<circle cx="182.8" cy="140.4" r="2.25"/>
<circle cx="219.4" cy="103.6" r="2.25"/>
<circle cx="132.2" cy="310.0" r="2.25"/>
<circle cx="62.1" cy="228.1" r="2.25"/>
</g>
<g fill="#1f55b5">
<circle cx="149.0" cy="183.9" r="2.25"/>
<circle cx="159.2" cy="319.8" r="2.25"/>
</g>
<g fill="#7b4a12">
<circle cx="197.1" cy="320.4" r="2.25"/>
<circle cx="180.8" cy="193.1" r="2.25"/>
<circle cx="260.2" cy="128.3" r="2.25"/>
<circle cx="112.9" cy="125.6" r="2.25"/>
<circle cx="149.8" cy="145.0" r="2.25"/>
<circle cx="232.6" cy="307.4" r="2.25"/>
</g>
<g fill="#1fd6a0">
<circle cx="240.6" cy="178.2" r="2.25"/>
<circle cx="226.4" cy="333.9" r="2.25"/>
<circle cx="89.7" cy="172.6" r="2.25"/>
<circle cx="212.4" cy="224.0" r="2.25"/>
<circle cx="184.0" cy="267.0" r="2.25"/>
<circle cx="143.2" cy="174.3" r="2.25"/>
<circle cx="181.7" cy="163.6" r="2.25"/>
<circle cx="244.5" cy="319.5" r="2.25"/>
<circle cx="275.8" cy="170.5" r="2.25"/>
<circle cx="216.2" cy="209.2" r="2.25"/>
<circle cx="244.6" cy="239.6" r="2.25"/>
<circle cx="181.3" cy="187.7" r="2.25"/>
<circle cx="221.5" cy="221.4" r="2.25"/>
<circle cx="248.9" cy="201.8" r="2.25"/>
<circle cx="152.2" cy="160.1" r="2.25"/>
<circle cx="190.4" cy="359.3" r="2.25"/>
<circle cx="248.9" cy="198.6" r="2.25"/>
<circle cx="137.8" cy="342.9" r="2.25"/>
<circle cx="224.8" cy="135.6" r="2.25"/>
<circle cx="132.4" cy="138.7" r="2.25"/>
</g>
<g fill="#969696">
<circle cx="135.7" cy="126.6" r="2.25"/>
<circle cx="251.0" cy="210.4" r="2.25"/>
<circle cx="147.5" cy="306.9" r="2.25"/>
<circle cx="89.0" cy="131.5" r="2.25"/>
</g>
<g fill="#a9cbff">
<circle cx="136.8" cy="345.7" r="2.25"/>
<circle cx="277.4" cy="226.1" r="2.25"/>
</g>
<g fill="#e31a1c">
<circle cx="130.7" cy="354.4" r="2.25"/>
<circle cx="184.7" cy="261.2" r="2.25"/>
<circle cx="116.1" cy="282.6" r="2.25"/>
<circle cx="83.8" cy="269.3" r="2.25"/>
<circle cx="129.9" cy="300.8" r="2.25"/>
<circle cx="172.9" cy="349.5" r="2.25"/>
<circle cx="70.0" cy="254.1" r="2.25"/>
<circle cx="126.2" cy="233.0" r="2.25"/>
<circle cx="136.0" cy="295.4" r="2.25"/>
<circle cx="162.8" cy="215.9" r="2.25"/>
</g>
<g fill="#fb8072">
<circle cx="231.1" cy="106.8" r="2.25"/>
<circle cx="224.0" cy="306.8" r="2.25"/>
<circle cx="211.5" cy="324.1" r="2.25"/>
<circle cx="101.3" cy="205.1" r="2.25"/>
<circle cx="136.5" cy="115.1" r="2.25"/>
<circle cx="89.4" cy="204.8" r="2.25"/>
<circle cx="101.5" cy="284.9" r="2.25"/>
<circle cx="162.8" cy="210.7" r="2.25"/>
<circle cx="212.8" cy="130.1" r="2.25"/>
<circle cx="107.9" cy="344.5" r="2.25"/>
<circle cx="165.3" cy="213.0" r="2.25"/>
<circle cx="160.0" cy="364.0" r="2.25"/>
<circle cx="89.3" cy="290.6" r="2.25"/>
<circle cx="99.9" cy="302.7" r="2.25"/>
<circle cx="88.9" cy="216.9" r="2.25"/>
<circle cx="105.1" cy="332.5" r="2.25"/>
<circle cx="186.6" cy="279.4" r="2.25"/>
<circle cx="163.8" cy="343.2" r="2.25"/>
<circle cx="200.8" cy="294.1" r="2.25"/>
<circle cx="99.5" cy="161.4" r="2.25"/>
</g>
<g fill="#f2f2f2">
<circle cx="129.5" cy="156.7" r="2.25"/>
<circle cx="134.5" cy="82.2" r="2.25"/>
<circle cx="197.6" cy="217.9" r="2.25"/>
<circle cx="139.5" cy="191.7" r="2.25"/>
<circle cx="111.3" cy="155.7" r="2.25"/>
<circle cx="161.5" cy="240.0" r="2.25"/>
<circle cx="93.4" cy="167.2" r="2.25"/>
<circle cx="142.5" cy="283.5" r="2.25"/>
<circle cx="171.7" cy="284.2" r="2.25"/>
<circle cx="215.1" cy="235.6" r="2.25"/>
</g>
<g fill="#6ea8fb">
<circle cx="140.8" cy="165.5" r="2.25"/>
<circle cx="236.8" cy="207.0" r="2.25"/>
<circle cx="199.1" cy="362.0" r="2.25"/>
<circle cx="117.5" cy="335.6" r="2.25"/>
<circle cx="90.5" cy="157.8" r="2.25"/>
<circle cx="217.1" cy="268.4" r="2.25"/>
<circle cx="183.0" cy="122.9" r="2.25"/>
<circle cx="184.0" cy="99.3" r="2.25"/>
<circle cx="139.6" cy="286.1" r="2.25"/>
<circle cx="209.7" cy="286.1" r="2.25"/>
<circle cx="172.6" cy="169.9" r="2.25"/>
<circle cx="157.2" cy="207.2" r="2.25"/>
<circle cx="164.6" cy="154.1" r="2.25"/>
<circle cx="230.7" cy="121.0" r="2.25"/>
<circle cx="162.7" cy="295.8" r="2.25"/>
</g>
<g fill="#b58252">
<circle cx="178.7" cy="269.8" r="2.25"/>
<circle cx="180.1" cy="149.1" r="2.25"/>
<circle cx="216.6" cy="342.5" r="2.25"/>
<circle cx="245.8" cy="210.5" r="2.25"/>
<circle cx="203.3" cy="317.7" r="2.25"/>
<circle cx="149.0" cy="257.1" r="2.25"/>
<circle cx="91.3" cy="234.2" r="2.25"/>
<circle cx="128.2" cy="271.0" r="2.25"/>
<circle cx="183.3" cy="128.5" r="2.25"/>
<circle cx="217.4" cy="253.7" r="2.25"/>
<circle cx="107.0" cy="291.4" r="2.25"/>
<circle cx="139.7" cy="268.5" r="2.25"/>
<circle cx="237.5" cy="174.3" r="2.25"/>
<circle cx="207.6" cy="359.3" r="2.25"/>
<circle cx="160.6" cy="272.7" r="2.25"/>
<circle cx="195.1" cy="199.7" r="2.25"/>
<circle cx="111.1" cy="332.5" r="2.25"/>
<circle cx="123.5" cy="233.0" r="2.25"/>
<circle cx="228.9" cy="336.7" r="2.25"/>
<circle cx="172.6" cy="181.4" r="2.25"/>
<circle cx="214.0" cy="256.7" r="2.25"/>
<circle cx="229.6" cy="313.2" r="2.25"/>
<circle cx="179.3" cy="335.5" r="2.25"/>
<circle cx="190.2" cy="347.0" r="2.25"/>
<circle cx="185.0" cy="158.4" r="2.25"/>
<circle cx="164.3" cy="325.9" r="2.25"/>
<circle cx="100.9" cy="294.4" r="2.25"/>
<circle cx="206.7" cy="147.5" r="2.25"/>
<circle cx="190.7" cy="158.7" r="2.25"/>
<circle cx="178.0" cy="364.1" r="2.25"/>
<circle cx="172.8" cy="166.5" r="2.25"/>
<circle cx="179.9" cy="231.6" r="2.25"/>
<circle cx="201.5" cy="205.5" r="2.25"/>
<circle cx="185.3" cy="314.4" r="2.25"/>
<circle cx="241.7" cy="307.6" r="2.25"/>
<circle cx="134.8" cy="321.8" r="2.25"/>
<circle cx="185.4" cy="160.8" r="2.25"/>
<circle cx="122.4" cy="94.4" r="2.25"/>
<circle cx="208.5" cy="333.4" r="2.25"/>
<circle cx="107.3" cy="353.0" r="2.25"/>
</g>
<g fill="#fde3b5">
<circle cx="246.8" cy="83.2" r="2.25"/>
<circle cx="179.9" cy="223.2" r="2.25"/>
<circle cx="196.1" cy="196.5" r="2.25"/>
<circle cx="223.0" cy="339.2" r="2.25"/>
<circle cx="197.5" cy="214.3" r="2.25"/>
<circle cx="183.3" cy="113.5" r="2.25"/>
<circle cx="160.5" cy="201.3" r="2.25"/>
<circle cx="113.5" cy="356.1" r="2.25"/>
<circle cx="139.5" cy="271.5" r="2.25"/>
<circle cx="218.5" cy="141.7" r="2.25"/>
<circle cx="72.5" cy="257.1" r="2.25"/>
<circle cx="251.5" cy="196.4" r="2.25"/>
<circle cx="103.5" cy="214.7" r="2.25"/>
<circle cx="114.1" cy="338.3" r="2.25"/>
<circle cx="203.4" cy="320.8" r="2.25"/>
<circle cx="207.5" cy="200.6" r="2.25"/>
<circle cx="178.6" cy="187.1" r="2.25"/>
<circle cx="232.2" cy="236.8" r="2.25"/>
<circle cx="85.2" cy="225.7" r="2.25"/>
<circle cx="229.0" cy="345.9" r="2.25"/>
</g>
<g fill="#1f55b5">
<circle cx="111.8" cy="220.4" r="2.25"/>
<circle cx="67.2" cy="239.2" r="2.25"/>
<circle cx="186.3" cy="137.3" r="2.25"/>
</g>
<g fill="#7b4a12">
<circle cx="178.2" cy="196.7" r="2.25"/>
<circle cx="146.4" cy="177.7" r="2.25"/>
</g>
<g fill="#1fd6a0">
<circle cx="174.9" cy="205.0" r="2.25"/>
<circle cx="64.9" cy="222.2" r="2.25"/>
<circle cx="174.1" cy="228.3" r="2.25"/>
<circle cx="169.6" cy="98.1" r="2.25"/>
<circle cx="282.8" cy="232.6" r="2.25"/>
<circle cx="220.8" cy="227.3" r="2.25"/>
<circle cx="224.1" cy="148.1" r="2.25"/>
<circle cx="275.4" cy="208.0" r="2.25"/>
<circle cx="252.3" cy="193.3" r="2.25"/>
<circle cx="218.6" cy="207.0" r="2.25"/>
<circle cx="113.0" cy="199.4" r="2.25"/>
<circle cx="156.3" cy="236.5" r="2.25"/>
<circle cx="205.0" cy="353.8" r="2.25"/>
<circle cx="165.9" cy="204.4" r="2.25"/>
<circle cx="126.4" cy="333.0" r="2.25"/>
</g>
<g fill="#969696">
<circle cx="125.6" cy="79.6" r="2.25"/>
<circle cx="96.4" cy="152.1" r="2.25"/>
<circle cx="133.6" cy="118.2" r="2.25"/>
<circle cx="93.1" cy="163.3" r="2.25"/>
<circle cx="144.3" cy="133.2" r="2.25"/>
<circle cx="137.6" cy="79.4" r="2.25"/>
</g>
<g fill="#a9cbff">
<circle cx="241.7" cy="316.9" r="2.25"/>
</g>
<g fill="#f57ef0">
<circle cx="179.0" cy="338.3" r="2.25"/>
<circle cx="198.6" cy="356.5" r="2.25"/>
<circle cx="205.2" cy="170.6" r="2.25"/>
<circle cx="187.0" cy="367.4" r="2.25"/>
</g>
<g fill="#e31a1c">
<circle cx="220.8" cy="156.1" r="2.25"/>
<circle cx="180.5" cy="287.9" r="2.25"/>
<circle cx="193.1" cy="276.0" r="2.25"/>
<circle cx="123.0" cy="345.2" r="2.25"/>
</g>
<g fill="#fb8072">
<circle cx="82.9" cy="225.7" r="2.25"/>
<circle cx="142.0" cy="209.9" r="2.25"/>
<circle cx="146.2" cy="251.0" r="2.25"/>
<circle cx="155.7" cy="169.3" r="2.25"/>
<circle cx="132.0" cy="244.5" r="2.25"/>
<circle cx="146.2" cy="103.8" r="2.25"/>
<circle cx="129.0" cy="147.2" r="2.25"/>
<circle cx="72.3" cy="268.9" r="2.25"/>
<circle cx="112.4" cy="205.4" r="2.25"/>
<circle cx="217.9" cy="238.8" r="2.25"/>
<circle cx="97.0" cy="222.5" r="2.25"/>
<circle cx="217.0" cy="248.2" r="2.25"/>
<circle cx="157.5" cy="263.2" r="2.25"/>
<circle cx="208.8" cy="250.2" r="2.25"/>
<circle cx="141.1" cy="230.0" r="2.25"/>
<circle cx="83.4" cy="278.7" r="2.25"/>
<circle cx="82.1" cy="228.1" r="2.25"/>
<circle cx="122.8" cy="159.3" r="2.25"/>
<circle cx="148.7" cy="198.0" r="2.25"/>
<circle cx="128.9" cy="159.5" r="2.25"/>
<circle cx="191.1" cy="244.4" r="2.25"/>
<circle cx="136.2" cy="206.3" r="2.25"/>
<circle cx="142.9" cy="186.3" r="2.25"/>
<circle cx="190.2" cy="111.3" r="2.25"/>
</g>
<g fill="#f2f2f2">
<circle cx="95.7" cy="282.4" r="2.25"/>
<circle cx="136.0" cy="141.6" r="2.25"/>
<circle cx="82.4" cy="222.0" r="2.25"/>
<circle cx="156.9" cy="115.7" r="2.25"/>
<circle cx="135.1" cy="73.3" r="2.25"/>
<circle cx="181.8" cy="349.7" r="2.25"/>
<circle cx="238.9" cy="322.4" r="2.25"/>
<circle cx="108.5" cy="161.4" r="2.25"/>
<circle cx="94.8" cy="125.4" r="2.25"/>
<circle cx="120.7" cy="153.3" r="2.25"/>
<circle cx="180.4" cy="131.0" r="2.25"/>
<circle cx="95.5" cy="196.0" r="2.25"/>
<circle cx="100.7" cy="297.3" r="2.25"/>
<circle cx="104.7" cy="193.8" r="2.25"/>
<circle cx="154.4" cy="180.3" r="2.25"/>
<circle cx="151.2" cy="115.7" r="2.25"/>
</g>
<g fill="#6ea8fb">
<circle cx="206.3" cy="155.7" r="2.25"/>
<circle cx="187.2" cy="190.8" r="2.25"/>
<circle cx="247.5" cy="157.1" r="2.25"/>
<circle cx="222.9" cy="351.4" r="2.25"/>
<circle cx="239.6" cy="192.4" r="2.25"/>
<circle cx="157.6" cy="275.3" r="2.25"/>
<circle cx="181.2" cy="190.7" r="2.25"/>
<circle cx="207.9" cy="350.4" r="2.25"/>
<circle cx="271.1" cy="223.2" r="2.25"/>
<circle cx="215.2" cy="147.0" r="2.25"/>
<circle cx="177.8" cy="273.4" r="2.25"/>
<circle cx="243.9" cy="83.4" r="2.25"/>
<circle cx="227.9" cy="109.2" r="2.25"/>
<circle cx="153.2" cy="325.0" r="2.25"/>
</g>
<g fill="#b58252">
<circle cx="283.8" cy="217.7" r="2.25"/>
<circle cx="76.0" cy="248.3" r="2.25"/>
<circle cx="150.3" cy="221.8" r="2.25"/>
<circle cx="203.2" cy="147.2" r="2.25"/>
<circle cx="198.9" cy="273.7" r="2.25"/>
<circle cx="175.1" cy="353.1" r="2.25"/>
<circle cx="157.3" cy="290.0" r="2.25"/>
<circle cx="193.7" cy="335.7" r="2.25"/>
<circle cx="178.8" cy="255.3" r="2.25"/>
<circle cx="206.6" cy="306.4" r="2.25"/>
<circle cx="128.0" cy="265.2" r="2.25"/>
<circle cx="168.4" cy="228.5" r="2.25"/>
<circle cx="208.6" cy="150.2" r="2.25"/>
<circle cx="233.9" cy="115.7" r="2.25"/>
<circle cx="165.8" cy="287.4" r="2.25"/>
<circle cx="118.5" cy="217.7" r="2.25"/>
<circle cx="206.2" cy="144.4" r="2.25"/>
<circle cx="194.7" cy="128.6" r="2.25"/>
<circle cx="137.1" cy="91.5" r="2.25"/>
<circle cx="173.9" cy="145.7" r="2.25"/>
<circle cx="149.2" cy="251.4" r="2.25"/>
<circle cx="162.3" cy="130.9" r="2.25"/>
<circle cx="138.0" cy="147.6" r="2.25"/>
<circle cx="251.6" cy="110.8" r="2.25"/>
<circle cx="190.5" cy="329.7" r="2.25"/>
<circle cx="79.9" cy="201.5" r="2.25"/>
<circle cx="173.9" cy="133.7" r="2.25"/>
<circle cx="190.7" cy="241.1" r="2.25"/>
<circle cx="221.3" cy="295.1" r="2.25"/>
<circle cx="248.5" cy="110.3" r="2.25"/>
<circle cx="266.0" cy="202.0" r="2.25"/>
<circle cx="196.5" cy="347.9" r="2.25"/>
<circle cx="202.6" cy="153.0" r="2.25"/>
<circle cx="254.3" cy="198.5" r="2.25"/>
</g>
<g fill="#fde3b5">
<circle cx="262.1" cy="229.0" r="2.25"/>
<circle cx="91.4" cy="133.9" r="2.25"/>
<circle cx="230.1" cy="148.1" r="2.25"/>
<circle cx="262.1" cy="238.0" r="2.25"/>
<circle cx="186.0" cy="220.4" r="2.25"/>
<circle cx="206.0" cy="161.6" r="2.25"/>
<circle cx="221.0" cy="135.3" r="2.25"/>
<circle cx="72.9" cy="240.0" r="2.25"/>
<circle cx="204.8" cy="114.4" r="2.25"/>
<circle cx="166.0" cy="187.5" r="2.25"/>
<circle cx="189.9" cy="356.4" r="2.25"/>
<circle cx="184.9" cy="175.4" r="2.25"/>
<circle cx="205.7" cy="164.9" r="2.25"/>
<circle cx="130.5" cy="280.6" r="2.25"/>
<circle cx="160.3" cy="119.2" r="2.25"/>
<circle cx="198.5" cy="114.5" r="2.25"/>
<circle cx="270.0" cy="178.5" r="2.25"/>
<circle cx="174.0" cy="131.6" r="2.25"/>
<circle cx="191.4" cy="223.2" r="2.25"/>
<circle cx="195.3" cy="214.2" r="2.25"/>
<circle cx="197.4" cy="143.5" r="2.25"/>
<circle cx="177.5" cy="137.5" r="2.25"/>
<circle cx="91.4" cy="231.8" r="2.25"/>
<circle cx="216.0" cy="136.0" r="2.25"/>
</g>
<g fill="#1f55b5">
<circle cx="231.7" cy="92.3" r="2.25"/>
<circle cx="272.1" cy="214.4" r="2.25"/>
</g>
<g fill="#7b4a12">
<circle cx="262.1" cy="145.8" r="2.25"/>
<circle cx="155.8" cy="163.3" r="2.25"/>
<circle cx="189.0" cy="205.2" r="2.25"/>
<circle cx="192.4" cy="129.2" r="2.25"/>
<circle cx="233.6" cy="298.5" r="2.25"/>
<circle cx="240.2" cy="109.6" r="2.25"/>
</g>
<g fill="#1fd6a0">
<circle cx="225.0" cy="106.9" r="2.25"/>
<circle cx="129.4" cy="226.9" r="2.25"/>
<circle cx="254.2" cy="222.7" r="2.25"/>
<circle cx="151.0" cy="109.2" r="2.25"/>
<circle cx="144.4" cy="307.4" r="2.25"/>
<circle cx="195.6" cy="362.0" r="2.25"/>
<circle cx="118.9" cy="271.3" r="2.25"/>
<circle cx="167.1" cy="163.8" r="2.25"/>
<circle cx="155.7" cy="86.7" r="2.25"/>
<circle cx="227.7" cy="215.8" r="2.25"/>
<circle cx="194.0" cy="164.4" r="2.25"/>
<circle cx="216.3" cy="200.8" r="2.25"/>
<circle cx="119.7" cy="185.0" r="2.25"/>
<circle cx="223.7" cy="242.6" r="2.25"/>
<circle cx="257.5" cy="207.7" r="2.25"/>
<circle cx="107.7" cy="182.0" r="2.25"/>
<circle cx="129.2" cy="233.3" r="2.25"/>
</g>
<g fill="#969696">
<circle cx="81.0" cy="272.2" r="2.25"/>
<circle cx="157.5" cy="118.4" r="2.25"/>
<circle cx="130.0" cy="126.4" r="2.25"/>
<circle cx="201.1" cy="305.9" r="2.25"/>
<circle cx="110.5" cy="362.3" r="2.25"/>
<circle cx="129.0" cy="76.6" r="2.25"/>
<circle cx="270.0" cy="173.2" r="2.25"/>
<circle cx="106.4" cy="122.7" r="2.25"/>
<circle cx="191.5" cy="235.4" r="2.25"/>
<circle cx="101.6" cy="353.3" r="2.25"/>
</g>
<g fill="#f57ef0">
<circle cx="139.0" cy="139.3" r="2.25"/>
<circle cx="215.8" cy="221.6" r="2.25"/>
</g>
<g fill="#e31a1c">
<circle cx="156.7" cy="224.5" r="2.25"/>
<circle cx="132.8" cy="221.0" r="2.25"/>
<circle cx="135.5" cy="233.3" r="2.25"/>
<circle cx="158.2" cy="248.3" r="2.25"/>
<circle cx="202.7" cy="262.1" r="2.25"/>
<circle cx="80.1" cy="287.7" r="2.25"/>
<circle cx="186.6" cy="282.5" r="2.25"/>
<circle cx="86.6" cy="290.0" r="2.25"/>
<circle cx="89.9" cy="270.3" r="2.25"/>
<circle cx="107.0" cy="279.5" r="2.25"/>
<circle cx="194.2" cy="249.8" r="2.25"/>
<circle cx="239.1" cy="301.6" r="2.25"/>
<circle cx="213.1" cy="359.5" r="2.25"/>
<circle cx="246.0" cy="112.9" r="2.25"/>
</g>
<g fill="#fb8072">
<circle cx="226.0" cy="254.1" r="2.25"/>
<circle cx="180.7" cy="128.2" r="2.25"/>
<circle cx="130.0" cy="132.9" r="2.25"/>
<circle cx="126.5" cy="221.2" r="2.25"/>
<circle cx="209.9" cy="303.7" r="2.25"/>
<circle cx="125.8" cy="264.8" r="2.25"/>
<circle cx="115.1" cy="141.3" r="2.25"/>
<circle cx="137.5" cy="268.6" r="2.25"/>
<circle cx="147.0" cy="313.6" r="2.25"/>
<circle cx="113.2" cy="188.6" r="2.25"/>
<circle cx="85.8" cy="222.7" r="2.25"/>
<circle cx="83.0" cy="207.6" r="2.25"/>
<circle cx="145.2" cy="289.9" r="2.25"/>
<circle cx="89.9" cy="184.4" r="2.25"/>
<circle cx="241.7" cy="228.1" r="2.25"/>
<circle cx="118.5" cy="211.5" r="2.25"/>
<circle cx="150.8" cy="127.7" r="2.25"/>
<circle cx="226.3" cy="328.3" r="2.25"/>
</g>
<g fill="#f2f2f2">
<circle cx="68.1" cy="210.3" r="2.25"/>
<circle cx="79.5" cy="219.6" r="2.25"/>
<circle cx="91.5" cy="125.3" r="2.25"/>
<circle cx="121.6" cy="197.0" r="2.25"/>
<circle cx="191.3" cy="225.9" r="2.25"/>
<circle cx="103.7" cy="125.5" r="2.25"/>
<circle cx="127.8" cy="191.7" r="2.25"/>
<circle cx="169.1" cy="104.4" r="2.25"/>
<circle cx="121.7" cy="283.1" r="2.25"/>
</g>
<g fill="#6ea8fb">
<circle cx="133.9" cy="268.8" r="2.25"/>
<circle cx="148.3" cy="192.4" r="2.25"/>
<circle cx="256.3" cy="163.6" r="2.25"/>
<circle cx="164.1" cy="254.5" r="2.25"/>
<circle cx="186.5" cy="294.3" r="2.25"/>
<circle cx="130.2" cy="212.3" r="2.25"/>
<circle cx="199.1" cy="261.6" r="2.25"/>
<circle cx="131.9" cy="321.7" r="2.25"/>
<circle cx="180.2" cy="134.6" r="2.25"/>
<circle cx="154.0" cy="290.2" r="2.25"/>
<circle cx="157.8" cy="83.4" r="2.25"/>
<circle cx="222.5" cy="109.0" r="2.25"/>
<circle cx="252.0" cy="199.3" r="2.25"/>
<circle cx="149.2" cy="337.4" r="2.25"/>
<circle cx="194.3" cy="332.3" r="2.25"/>
<circle cx="192.0" cy="143.9" r="2.25"/>
<circle cx="257.3" cy="216.6" r="2.25"/>
<circle cx="201.6" cy="285.8" r="2.25"/>
</g>
<g fill="#b58252">
<circle cx="175.2" cy="190.6" r="2.25"/>
<circle cx="247.4" cy="145.5" r="2.25"/>
<circle cx="197.1" cy="332.9" r="2.25"/>
<circle cx="153.3" cy="136.2" r="2.25"/>
<circle cx="260.8" cy="187.8" r="2.25"/>
<circle cx="224.8" cy="304.5" r="2.25"/>
<circle cx="148.0" cy="295.5" r="2.25"/>
<circle cx="190.7" cy="161.5" r="2.25"/>
<circle cx="105.0" cy="343.9" r="2.25"/>
<circle cx="114.1" cy="162.0" r="2.25"/>
<circle cx="168.0" cy="142.9" r="2.25"/>
<circle cx="172.1" cy="101.5" r="2.25"/>
<circle cx="193.1" cy="270.3" r="2.25"/>
<circle cx="218.2" cy="153.3" r="2.25"/>
<circle cx="75.5" cy="269.2" r="2.25"/>
<circle cx="205.4" cy="174.1" r="2.25"/>
<circle cx="226.8" cy="233.2" r="2.25"/>
<circle cx="194.0" cy="244.3" r="2.25"/>
<circle cx="95.0" cy="299.1" r="2.25"/>
<circle cx="247.9" cy="210.6" r="2.25"/>
<circle cx="206.2" cy="138.1" r="2.25"/>
<circle cx="164.4" cy="242.7" r="2.25"/>
<circle cx="165.5" cy="284.6" r="2.25"/>
<circle cx="167.0" cy="243.4" r="2.25"/>
<circle cx="239.5" cy="219.2" r="2.25"/>
<circle cx="181.6" cy="353.1" r="2.25"/>
<circle cx="122.2" cy="274.0" r="2.25"/>
<circle cx="193.1" cy="279.2" r="2.25"/>
<circle cx="99.7" cy="249.9" r="2.25"/>
<circle cx="194.0" cy="229.7" r="2.25"/>
<circle cx="171.2" cy="302.2" r="2.25"/>
<circle cx="199.3" cy="350.1" r="2.25"/>
<circle cx="204.0" cy="197.4" r="2.25"/>
<circle cx="216.6" cy="182.8" r="2.25"/>
<circle cx="220.8" cy="230.0" r="2.25"/>
<circle cx="196.8" cy="176.6" r="2.25"/>
<circle cx="122.1" cy="185.3" r="2.25"/>
<circle cx="192.7" cy="356.2" r="2.25"/>
<circle cx="207.7" cy="117.7" r="2.25"/>
</g>
<g fill="#fde3b5">
<circle cx="208.3" cy="344.8" r="2.25"/>
<circle cx="262.9" cy="142.8" r="2.25"/>
<circle cx="185.0" cy="163.6" r="2.25"/>
<circle cx="142.0" cy="213.2" r="2.25"/>
<circle cx="116.2" cy="362.2" r="2.25"/>
<circle cx="99.5" cy="238.3" r="2.25"/>
<circle cx="233.2" cy="230.6" r="2.25"/>
<circle cx="222.4" cy="94.4" r="2.25"/>
<circle cx="234.2" cy="121.5" r="2.25"/>
<circle cx="180.8" cy="125.4" r="2.25"/>
<circle cx="257.2" cy="213.6" r="2.25"/>
<circle cx="228.8" cy="354.2" r="2.25"/>
<circle cx="162.9" cy="110.0" r="2.25"/>
<circle cx="159.7" cy="112.7" r="2.25"/>
<circle cx="178.1" cy="113.4" r="2.25"/>
<circle cx="258.2" cy="107.1" r="2.25"/>
<circle cx="245.4" cy="130.9" r="2.25"/>
<circle cx="263.1" cy="133.9" r="2.25"/>
<circle cx="169.5" cy="181.0" r="2.25"/>
<circle cx="91.1" cy="240.4" r="2.25"/>
<circle cx="73.6" cy="236.5" r="2.25"/>
<circle cx="67.1" cy="251.0" r="2.25"/>
</g>
<g fill="#1f55b5">
<circle cx="268.0" cy="223.4" r="2.25"/>
<circle cx="160.4" cy="198.6" r="2.25"/>
<circle cx="184.0" cy="116.9" r="2.25"/>
<circle cx="219.6" cy="351.7" r="2.25"/>
</g>
<g fill="#7b4a12">
<circle cx="139.3" cy="127.3" r="2.25"/>
<circle cx="108.4" cy="326.3" r="2.25"/>
<circle cx="185.5" cy="149.4" r="2.25"/>
<circle cx="187.1" cy="350.2" r="2.25"/>
</g>
<g fill="#1fd6a0">
<circle cx="133.7" cy="192.0" r="2.25"/>
<circle cx="209.0" cy="164.4" r="2.25"/>
<circle cx="271.5" cy="228.6" r="2.25"/>
<circle cx="274.7" cy="202.2" r="2.25"/>
<circle cx="238.5" cy="228.3" r="2.25"/>
<circle cx="239.5" cy="209.9" r="2.25"/>
<circle cx="225.3" cy="197.5" r="2.25"/>
<circle cx="256.8" cy="231.9" r="2.25"/>
<circle cx="91.3" cy="219.8" r="2.25"/>
<circle cx="277.5" cy="211.1" r="2.25"/>
<circle cx="223.1" cy="162.0" r="2.25"/>
<circle cx="244.8" cy="154.8" r="2.25"/>
<circle cx="166.9" cy="255.1" r="2.25"/>
<circle cx="201.1" cy="202.6" r="2.25"/>
</g>
<g fill="#969696">
<circle cx="115.6" cy="212.2" r="2.25"/>
<circle cx="146.6" cy="247.8" r="2.25"/>
<circle cx="219.9" cy="354.6" r="2.25"/>
<circle cx="140.8" cy="88.7" r="2.25"/>
<circle cx="137.2" cy="82.9" r="2.25"/>
<circle cx="168.1" cy="225.6" r="2.25"/>
<circle cx="148.0" cy="135.7" r="2.25"/>
</g>
<g fill="#a9cbff">
<circle cx="131.9" cy="73.5" r="2.25"/>
</g>
<g fill="#f57ef0">
<circle cx="157.3" cy="293.3" r="2.25"/>
<circle cx="125.9" cy="256.4" r="2.25"/>
</g>
<g fill="#e31a1c">
<circle cx="137.9" cy="324.5" r="2.25"/>
<circle cx="188.9" cy="297.0" r="2.25"/>
<circle cx="179.5" cy="228.8" r="2.25"/>
<circle cx="122.5" cy="264.7" r="2.25"/>
<circle cx="164.5" cy="337.2" r="2.25"/>
<circle cx="170.9" cy="228.5" r="2.25"/>
<circle cx="163.3" cy="281.2" r="2.25"/>
<circle cx="241.8" cy="237.3" r="2.25"/>
<circle cx="129.5" cy="312.6" r="2.25"/>
<circle cx="102.9" cy="303.3" r="2.25"/>
<circle cx="210.1" cy="217.9" r="2.25"/>
<circle cx="266.1" cy="210.6" r="2.25"/>
</g>
<g fill="#fb8072">
<circle cx="106.0" cy="214.8" r="2.25"/>
<circle cx="168.2" cy="145.4" r="2.25"/>
<circle cx="202.6" cy="238.6" r="2.25"/>
<circle cx="127.8" cy="351.3" r="2.25"/>
<circle cx="132.1" cy="79.9" r="2.25"/>
<circle cx="116.6" cy="173.5" r="2.25"/>
<circle cx="244.2" cy="328.8" r="2.25"/>
<circle cx="95.2" cy="290.7" r="2.25"/>
<circle cx="136.6" cy="188.5" r="2.25"/>
<circle cx="68.9" cy="260.7" r="2.25"/>
<circle cx="181.6" cy="95.6" r="2.25"/>
<circle cx="174.5" cy="290.7" r="2.25"/>
<circle cx="131.5" cy="185.7" r="2.25"/>
<circle cx="126.0" cy="150.0" r="2.25"/>
<circle cx="176.2" cy="234.1" r="2.25"/>
<circle cx="113.7" cy="173.8" r="2.25"/>
</g>
<g fill="#f2f2f2">
<circle cx="149.4" cy="171.6" r="2.25"/>
<circle cx="105.1" cy="176.2" r="2.25"/>
<circle cx="95.7" cy="276.1" r="2.25"/>
<circle cx="108.7" cy="144.0" r="2.25"/>
<circle cx="227.4" cy="292.4" r="2.25"/>
<circle cx="243.6" cy="88.9" r="2.25"/>
<circle cx="179.8" cy="308.8" r="2.25"/>
<circle cx="90.6" cy="151.7" r="2.25"/>
<circle cx="121.6" cy="126.4" r="2.25"/>
<circle cx="155.0" cy="333.9" r="2.25"/>
<circle cx="210.3" cy="194.8" r="2.25"/>
</g>
<g fill="#6ea8fb">
<circle cx="154.4" cy="97.7" r="2.25"/>
<circle cx="228.2" cy="351.1" r="2.25"/>
<circle cx="149.6" cy="327.9" r="2.25"/>
<circle cx="181.7" cy="172.6" r="2.25"/>
<circle cx="202.1" cy="179.1" r="2.25"/>
<circle cx="180.8" cy="108.2" r="2.25"/>
<circle cx="95.2" cy="288.2" r="2.25"/>
<circle cx="233.9" cy="103.5" r="2.25"/>
<circle cx="172.7" cy="263.7" r="2.25"/>
<circle cx="142.3" cy="289.0" r="2.25"/>
<circle cx="207.1" cy="283.3" r="2.25"/>
<circle cx="85.6" cy="210.8" r="2.25"/>
<circle cx="225.4" cy="354.4" r="2.25"/>
<circle cx="192.4" cy="199.6" r="2.25"/>
<circle cx="174.4" cy="139.8" r="2.25"/>
<circle cx="228.2" cy="97.2" r="2.25"/>
<circle cx="120.1" cy="345.0" r="2.25"/>
<circle cx="158.9" cy="148.0" r="2.25"/>
<circle cx="217.1" cy="345.3" r="2.25"/>
<circle cx="174.5" cy="201.9" r="2.25"/>
</g>
<g fill="#b58252">
<circle cx="233.9" cy="198.3" r="2.25"/>
<circle cx="193.6" cy="166.8" r="2.25"/>
<circle cx="135.9" cy="209.9" r="2.25"/>
<circle cx="254.7" cy="122.3" r="2.25"/>
<circle cx="182.5" cy="146.5" r="2.25"/>
<circle cx="233.5" cy="127.4" r="2.25"/>
<circle cx="189.4" cy="203.0" r="2.25"/>
<circle cx="141.1" cy="307.3" r="2.25"/>
<circle cx="165.8" cy="125.3" r="2.25"/>
<circle cx="253.7" cy="145.5" r="2.25"/>
<circle cx="118.7" cy="199.7" r="2.25"/>
<circle cx="147.6" cy="139.1" r="2.25"/>
<circle cx="171.5" cy="298.9" r="2.25"/>
<circle cx="143.0" cy="354.0" r="2.25"/>
<circle cx="142.5" cy="203.5" r="2.25"/>
<circle cx="145.4" cy="206.5" r="2.25"/>
<circle cx="179.4" cy="238.1" r="2.25"/>
<circle cx="154.9" cy="272.3" r="2.25"/>
<circle cx="152.8" cy="254.1" r="2.25"/>
<circle cx="134.1" cy="256.6" r="2.25"/>
<circle cx="103.8" cy="288.5" r="2.25"/>
<circle cx="173.6" cy="137.4" r="2.25"/>
<circle cx="230.6" cy="219.0" r="2.25"/>
<circle cx="228.6" cy="357.3" r="2.25"/>
<circle cx="130.3" cy="194.5" r="2.25"/>
<circle cx="189.0" cy="294.2" r="2.25"/>
<circle cx="154.7" cy="269.1" r="2.25"/>
<circle cx="149.3" cy="94.6" r="2.25"/>
<circle cx="207.3" cy="209.4" r="2.25"/>
</g>
<g fill="#fde3b5">
<circle cx="200.8" cy="218.0" r="2.25"/>
<circle cx="220.1" cy="348.2" r="2.25"/>
<circle cx="163.1" cy="119.1" r="2.25"/>
<circle cx="64.9" cy="224.7" r="2.25"/>
<circle cx="102.5" cy="232.1" r="2.25"/>
<circle cx="230.7" cy="118.0" r="2.25"/>
<circle cx="173.9" cy="226.1" r="2.25"/>
<circle cx="160.7" cy="337.3" r="2.25"/>
<circle cx="234.8" cy="92.4" r="2.25"/>
<circle cx="232.7" cy="239.0" r="2.25"/>
<circle cx="134.7" cy="265.8" r="2.25"/>
<circle cx="211.1" cy="351.1" r="2.25"/>
<circle cx="215.3" cy="150.6" r="2.25"/>
<circle cx="154.5" cy="203.9" r="2.25"/>
<circle cx="270.8" cy="170.2" r="2.25"/>
<circle cx="173.4" cy="231.6" r="2.25"/>
<circle cx="92.6" cy="193.4" r="2.25"/>
<circle cx="219.2" cy="120.6" r="2.25"/>
<circle cx="163.9" cy="177.9" r="2.25"/>
</g>
<g fill="#1f55b5">
<circle cx="198.0" cy="205.8" r="2.25"/>
<circle cx="202.4" cy="161.6" r="2.25"/>
<circle cx="121.7" cy="194.7" r="2.25"/>
<circle cx="206.1" cy="333.5" r="2.25"/>
<circle cx="153.1" cy="331.0" r="2.25"/>
<circle cx="243.3" cy="186.4" r="2.25"/>
<circle cx="167.1" cy="160.3" r="2.25"/>
</g>
<g fill="#7b4a12">
<circle cx="159.5" cy="133.2" r="2.25"/>
<circle cx="154.4" cy="118.3" r="2.25"/>
</g>
<g fill="#1fd6a0">
<circle cx="211.2" cy="336.2" r="2.25"/>
<circle cx="103.1" cy="222.8" r="2.25"/>
<circle cx="139.8" cy="180.2" r="2.25"/>
<circle cx="280.5" cy="211.5" r="2.25"/>
<circle cx="225.4" cy="351.3" r="2.25"/>
<circle cx="256.4" cy="237.5" r="2.25"/>
<circle cx="155.0" cy="355.1" r="2.25"/>
<circle cx="166.6" cy="352.1" r="2.25"/>
<circle cx="257.7" cy="190.3" r="2.25"/>
<circle cx="232.3" cy="248.7" r="2.25"/>
<circle cx="140.1" cy="173.9" r="2.25"/>
<circle cx="184.0" cy="185.2" r="2.25"/>
<circle cx="211.9" cy="156.6" r="2.25"/>
<circle cx="186.5" cy="365.3" r="2.25"/>
</g>
<g fill="#969696">
<circle cx="145.2" cy="130.6" r="2.25"/>
<circle cx="126.9" cy="147.4" r="2.25"/>
<circle cx="176.9" cy="131.8" r="2.25"/>
<circle cx="127.1" cy="138.3" r="2.25"/>
</g>
<g fill="#a9cbff">
<circle cx="114.3" cy="341.6" r="2.25"/>
</g>
<g fill="#f57ef0">
<circle cx="136.9" cy="347.9" r="2.25"/>
<circle cx="190.1" cy="182.1" r="2.25"/>
</g>
<g fill="#e31a1c">
<circle cx="194.3" cy="330.0" r="2.25"/>
<circle cx="160.5" cy="357.8" r="2.25"/>
<circle cx="205.1" cy="339.2" r="2.25"/>
<circle cx="172.8" cy="355.6" r="2.25"/>
<circle cx="86.4" cy="296.3" r="2.25"/>
<circle cx="152.2" cy="251.9" r="2.25"/>
<circle cx="175.9" cy="264.5" r="2.25"/>
<circle cx="125.4" cy="259.3" r="2.25"/>
<circle cx="126.4" cy="247.1" r="2.25"/>
<circle cx="101.2" cy="267.5" r="2.25"/>
<circle cx="198.5" cy="190.6" r="2.25"/>
<circle cx="134.5" cy="348.4" r="2.25"/>
<circle cx="140.7" cy="343.0" r="2.25"/>
<circle cx="202.7" cy="256.4" r="2.25"/>
<circle cx="155.4" cy="254.8" r="2.25"/>
<circle cx="160.6" cy="355.0" r="2.25"/>
<circle cx="164.6" cy="331.9" r="2.25"/>
<circle cx="182.9" cy="231.9" r="2.25"/>
</g>
<g fill="#fb8072">
<circle cx="142.1" cy="304.2" r="2.25"/>
<circle cx="156.1" cy="139.1" r="2.25"/>
<circle cx="202.0" cy="264.6" r="2.25"/>
<circle cx="82.5" cy="231.6" r="2.25"/>
<circle cx="169.0" cy="195.9" r="2.25"/>
<circle cx="109.9" cy="203.2" r="2.25"/>
<circle cx="110.5" cy="170.3" r="2.25"/>
<circle cx="151.8" cy="101.3" r="2.25"/>
<circle cx="185.9" cy="317.6" r="2.25"/>
<circle cx="162.8" cy="218.9" r="2.25"/>
<circle cx="131.7" cy="338.9" r="2.25"/>
<circle cx="155.0" cy="91.7" r="2.25"/>
<circle cx="137.6" cy="156.1" r="2.25"/>
<circle cx="110.4" cy="184.7" r="2.25"/>
<circle cx="104.0" cy="199.1" r="2.25"/>
<circle cx="119.2" cy="283.1" r="2.25"/>
<circle cx="122.7" cy="173.8" r="2.25"/>
<circle cx="128.4" cy="188.9" r="2.25"/>
</g>
<g fill="#f2f2f2">
<circle cx="131.8" cy="88.4" r="2.25"/>
<circle cx="199.2" cy="259.4" r="2.25"/>
<circle cx="132.8" cy="312.4" r="2.25"/>
<circle cx="91.6" cy="137.4" r="2.25"/>
<circle cx="110.9" cy="256.3" r="2.25"/>
<circle cx="98.9" cy="170.0" r="2.25"/>
<circle cx="135.4" cy="144.8" r="2.25"/>
<circle cx="267.3" cy="178.5" r="2.25"/>
<circle cx="145.0" cy="304.5" r="2.25"/>
<circle cx="134.3" cy="177.3" r="2.25"/>
<circle cx="122.2" cy="191.4" r="2.25"/>
<circle cx="190.3" cy="87.8" r="2.25"/>
<circle cx="98.5" cy="175.8" r="2.25"/>
<circle cx="119.6" cy="170.9" r="2.25"/>
<circle cx="102.6" cy="161.5" r="2.25"/>
<circle cx="134.8" cy="156.4" r="2.25"/>
</g>
<g fill="#6ea8fb">
<circle cx="125.8" cy="76.5" r="2.25"/>
<circle cx="265.0" cy="140.3" r="2.25"/>
<circle cx="267.5" cy="175.8" r="2.25"/>
<circle cx="156.7" cy="284.5" r="2.25"/>
<circle cx="199.0" cy="270.7" r="2.25"/>
<circle cx="196.0" cy="273.5" r="2.25"/>
<circle cx="214.1" cy="354.0" r="2.25"/>
<circle cx="82.2" cy="246.2" r="2.25"/>
<circle cx="192.0" cy="220.0" r="2.25"/>
<circle cx="228.6" cy="168.0" r="2.25"/>
<circle cx="175.6" cy="104.2" r="2.25"/>
<circle cx="77.3" cy="278.2" r="2.25"/>
<circle cx="123.3" cy="238.2" r="2.25"/>
<circle cx="228.6" cy="182.8" r="2.25"/>
<circle cx="189.1" cy="123.2" r="2.25"/>
<circle cx="170.2" cy="343.4" r="2.25"/>
<circle cx="144.7" cy="210.1" r="2.25"/>
<circle cx="169.0" cy="278.4" r="2.25"/>
<circle cx="88.8" cy="222.8" r="2.25"/>
<circle cx="158.5" cy="77.2" r="2.25"/>
<circle cx="76.6" cy="231.5" r="2.25"/>
<circle cx="158.4" cy="236.9" r="2.25"/>
<circle cx="208.2" cy="167.8" r="2.25"/>
</g>
<g fill="#b58252">
<circle cx="150.2" cy="133.0" r="2.25"/>
<circle cx="97.3" cy="214.5" r="2.25"/>
<circle cx="126.8" cy="218.2" r="2.25"/>
<circle cx="257.5" cy="110.1" r="2.25"/>
<circle cx="165.5" cy="131.0" r="2.25"/>
<circle cx="185.0" cy="173.0" r="2.25"/>
<circle cx="204.0" cy="294.8" r="2.25"/>
<circle cx="143.4" cy="266.3" r="2.25"/>
<circle cx="121.5" cy="211.5" r="2.25"/>
<circle cx="179.1" cy="332.2" r="2.25"/>
<circle cx="97.0" cy="243.6" r="2.25"/>
<circle cx="159.7" cy="286.9" r="2.25"/>
<circle cx="145.5" cy="189.5" r="2.25"/>
<circle cx="183.7" cy="285.3" r="2.25"/>
<circle cx="87.0" cy="273.1" r="2.25"/>
<circle cx="100.4" cy="300.0" r="2.25"/>
<circle cx="188.4" cy="317.5" r="2.25"/>
<circle cx="230.7" cy="301.8" r="2.25"/>
<circle cx="98.2" cy="208.3" r="2.25"/>
<circle cx="171.8" cy="198.9" r="2.25"/>
<circle cx="222.9" cy="356.8" r="2.25"/>
<circle cx="146.8" cy="168.8" r="2.25"/>
<circle cx="110.9" cy="261.9" r="2.25"/>
<circle cx="191.5" cy="314.4" r="2.25"/>
<circle cx="165.5" cy="290.2" r="2.25"/>
<circle cx="214.5" cy="324.7" r="2.25"/>
<circle cx="206.2" cy="150.3" r="2.25"/>
<circle cx="165.7" cy="119.4" r="2.25"/>
<circle cx="197.5" cy="232.1" r="2.25"/>
<circle cx="121.8" cy="357.0" r="2.25"/>
<circle cx="205.6" cy="238.9" r="2.25"/>
<circle cx="191.4" cy="155.1" r="2.25"/>
<circle cx="88.7" cy="293.8" r="2.25"/>
<circle cx="95.1" cy="279.4" r="2.25"/>
<circle cx="184.8" cy="329.5" r="2.25"/>
<circle cx="143.8" cy="333.4" r="2.25"/>
</g>
<g fill="#fde3b5">
<circle cx="213.3" cy="103.5" r="2.25"/>
<circle cx="139.5" cy="203.5" r="2.25"/>
<circle cx="245.1" cy="219.2" r="2.25"/>
<circle cx="242.2" cy="119.0" r="2.25"/>
<circle cx="175.0" cy="110.1" r="2.25"/>
<circle cx="179.1" cy="235.1" r="2.25"/>
<circle cx="224.8" cy="115.3" r="2.25"/>
<circle cx="131.6" cy="85.0" r="2.25"/>
<circle cx="166.6" cy="101.9" r="2.25"/>
<circle cx="153.1" cy="150.7" r="2.25"/>
<circle cx="227.7" cy="121.5" r="2.25"/>
<circle cx="136.7" cy="118.2" r="2.25"/>
<circle cx="217.3" cy="244.7" r="2.25"/>
<circle cx="210.7" cy="356.5" r="2.25"/>
<circle cx="172.3" cy="343.5" r="2.25"/>
<circle cx="218.8" cy="138.8" r="2.25"/>
</g>
<g fill="#1f55b5">
<circle cx="242.9" cy="101.0" r="2.25"/>
</g>
<g fill="#7b4a12">
<circle cx="136.3" cy="132.8" r="2.25"/>
<circle cx="231.9" cy="334.4" r="2.25"/>
<circle cx="182.7" cy="154.8" r="2.25"/>
<circle cx="174.6" cy="192.9" r="2.25"/>
<circle cx="187.8" cy="93.6" r="2.25"/>
<circle cx="119.0" cy="196.9" r="2.25"/>
</g>
<g fill="#1fd6a0">
<circle cx="227.6" cy="200.6" r="2.25"/>
<circle cx="146.8" cy="160.2" r="2.25"/>
<circle cx="96.5" cy="231.5" r="2.25"/>
<circle cx="233.6" cy="207.4" r="2.25"/>
<circle cx="260.2" cy="216.5" r="2.25"/>
<circle cx="225.3" cy="201.1" r="2.25"/>
<circle cx="188.2" cy="152.6" r="2.25"/>
<circle cx="223.2" cy="336.1" r="2.25"/>
<circle cx="162.9" cy="207.9" r="2.25"/>
<circle cx="234.3" cy="195.5" r="2.25"/>
<circle cx="229.1" cy="162.2" r="2.25"/>
<circle cx="183.0" cy="228.8" r="2.25"/>
<circle cx="213.9" cy="277.2" r="2.25"/>
<circle cx="236.5" cy="210.4" r="2.25"/>
<circle cx="185.2" cy="155.3" r="2.25"/>
<circle cx="112.2" cy="223.8" r="2.25"/>
<circle cx="219.4" cy="194.6" r="2.25"/>
<circle cx="176.3" cy="166.3" r="2.25"/>
<circle cx="169.3" cy="190.5" r="2.25"/>
</g>
<g fill="#969696">
<circle cx="91.8" cy="296.6" r="2.25"/>
<circle cx="120.6" cy="318.5" r="2.25"/>
</g>
<g fill="#f57ef0">
<circle cx="155.3" cy="336.7" r="2.25"/>
<circle cx="178.4" cy="340.6" r="2.25"/>
<circle cx="121.1" cy="229.2" r="2.25"/>
<circle cx="216.0" cy="211.8" r="2.25"/>
<circle cx="179.1" cy="261.6" r="2.25"/>
</g>
<g fill="#e31a1c">
<circle cx="144.1" cy="327.5" r="2.25"/>
<circle cx="156.0" cy="304.6" r="2.25"/>
<circle cx="222.9" cy="250.7" r="2.25"/>
<circle cx="170.0" cy="251.9" r="2.25"/>
<circle cx="169.8" cy="266.6" r="2.25"/>
<circle cx="112.8" cy="279.4" r="2.25"/>
<circle cx="168.0" cy="313.6" r="2.25"/>
<circle cx="171.7" cy="281.7" r="2.25"/>
<circle cx="131.4" cy="271.0" r="2.25"/>
<circle cx="84.9" cy="248.7" r="2.25"/>
<circle cx="138.8" cy="315.8" r="2.25"/>
</g>
<g fill="#fb8072">
<circle cx="148.2" cy="358.0" r="2.25"/>
<circle cx="237.5" cy="109.4" r="2.25"/>
<circle cx="92.7" cy="196.0" r="2.25"/>
<circle cx="188.6" cy="235.2" r="2.25"/>
<circle cx="209.2" cy="238.4" r="2.25"/>
<circle cx="241.4" cy="310.8" r="2.25"/>
<circle cx="82.5" cy="219.5" r="2.25"/>
<circle cx="97.4" cy="225.6" r="2.25"/>
<circle cx="141.5" cy="144.6" r="2.25"/>
<circle cx="98.0" cy="190.1" r="2.25"/>
<circle cx="135.5" cy="153.4" r="2.25"/>
<circle cx="178.2" cy="361.3" r="2.25"/>
<circle cx="190.0" cy="353.0" r="2.25"/>
<circle cx="97.6" cy="210.9" r="2.25"/>
<circle cx="123.1" cy="161.5" r="2.25"/>
<circle cx="191.2" cy="237.8" r="2.25"/>
<circle cx="149.6" cy="242.0" r="2.25"/>
<circle cx="149.2" cy="245.2" r="2.25"/>
<circle cx="166.6" cy="183.7" r="2.25"/>
<circle cx="95.1" cy="208.1" r="2.25"/>
<circle cx="159.5" cy="221.9" r="2.25"/>
</g>
<g fill="#f2f2f2">
<circle cx="96.3" cy="158.4" r="2.25"/>
<circle cx="206.1" cy="226.7" r="2.25"/>
<circle cx="89.1" cy="190.0" r="2.25"/>
<circle cx="144.2" cy="151.2" r="2.25"/>
<circle cx="74.3" cy="219.6" r="2.25"/>
<circle cx="137.9" cy="85.2" r="2.25"/>
<circle cx="136.7" cy="97.3" r="2.25"/>
<circle cx="137.8" cy="165.4" r="2.25"/>
<circle cx="141.8" cy="117.9" r="2.25"/>
<circle cx="94.0" cy="142.7" r="2.25"/>
</g>
<g fill="#6ea8fb">
<circle cx="162.6" cy="121.6" r="2.25"/>
<circle cx="248.3" cy="118.7" r="2.25"/>
<circle cx="221.5" cy="306.9" r="2.25"/>
<circle cx="181.0" cy="270.6" r="2.25"/>
<circle cx="166.6" cy="281.5" r="2.25"/>
<circle cx="138.7" cy="207.2" r="2.25"/>
<circle cx="122.2" cy="262.2" r="2.25"/>
<circle cx="208.5" cy="259.3" r="2.25"/>
<circle cx="181.4" cy="273.6" r="2.25"/>
<circle cx="222.8" cy="186.0" r="2.25"/>
<circle cx="176.5" cy="142.9" r="2.25"/>
<circle cx="207.6" cy="197.3" r="2.25"/>
<circle cx="157.1" cy="186.6" r="2.25"/>
<circle cx="190.0" cy="190.8" r="2.25"/>
<circle cx="170.9" cy="243.1" r="2.25"/>
<circle cx="212.0" cy="232.6" r="2.25"/>
<circle cx="211.6" cy="330.6" r="2.25"/>
<circle cx="99.7" cy="154.9" r="2.25"/>
<circle cx="193.8" cy="173.3" r="2.25"/>
</g>
<g fill="#b58252">
<circle cx="166.3" cy="354.9" r="2.25"/>
<circle cx="194.2" cy="324.0" r="2.25"/>
<circle cx="175.6" cy="172.1" r="2.25"/>
<circle cx="163.1" cy="290.3" r="2.25"/>
<circle cx="161.1" cy="349.4" r="2.25"/>
<circle cx="182.7" cy="308.6" r="2.25"/>
<circle cx="148.7" cy="342.9" r="2.25"/>
<circle cx="126.3" cy="229.8" r="2.25"/>
<circle cx="156.9" cy="198.3" r="2.25"/>
<circle cx="125.9" cy="244.6" r="2.25"/>
<circle cx="178.1" cy="358.9" r="2.25"/>
<circle cx="224.4" cy="224.3" r="2.25"/>
<circle cx="140.5" cy="242.6" r="2.25"/>
<circle cx="182.4" cy="152.2" r="2.25"/>
<circle cx="142.1" cy="292.0" r="2.25"/>
<circle cx="138.1" cy="238.7" r="2.25"/>
<circle cx="224.7" cy="139.0" r="2.25"/>
<circle cx="252.0" cy="201.6" r="2.25"/>
<circle cx="129.5" cy="306.4" r="2.25"/>
<circle cx="256.0" cy="234.7" r="2.25"/>
<circle cx="217.0" cy="256.5" r="2.25"/>
<circle cx="224.9" cy="188.7" r="2.25"/>
<circle cx="144.4" cy="153.9" r="2.25"/>
<circle cx="152.4" cy="177.2" r="2.25"/>
<circle cx="261.2" cy="190.4" r="2.25"/>
<circle cx="239.2" cy="125.0" r="2.25"/>
<circle cx="157.2" cy="196.0" r="2.25"/>
<circle cx="263.7" cy="178.6" r="2.25"/>
<circle cx="127.6" cy="197.6" r="2.25"/>
<circle cx="76.4" cy="228.2" r="2.25"/>
<circle cx="207.4" cy="194.6" r="2.25"/>
<circle cx="98.5" cy="264.3" r="2.25"/>
<circle cx="208.3" cy="182.5" r="2.25"/>
<circle cx="213.4" cy="188.2" r="2.25"/>
<circle cx="246.1" cy="192.9" r="2.25"/>
<circle cx="250.0" cy="166.4" r="2.25"/>
<circle cx="212.7" cy="208.8" r="2.25"/>
</g>
<g fill="#fde3b5">
<circle cx="267.5" cy="164.4" r="2.25"/>
<circle cx="166.4" cy="278.8" r="2.25"/>
<circle cx="242.7" cy="130.5" r="2.25"/>
<circle cx="189.9" cy="117.3" r="2.25"/>
<circle cx="172.6" cy="110.3" r="2.25"/>
<circle cx="197.8" cy="123.4" r="2.25"/>
<circle cx="142.1" cy="298.3" r="2.25"/>
<circle cx="266.2" cy="133.9" r="2.25"/>
<circle cx="174.5" cy="308.5" r="2.25"/>
<circle cx="138.7" cy="136.2" r="2.25"/>
<circle cx="228.5" cy="115.2" r="2.25"/>
<circle cx="222.9" cy="91.2" r="2.25"/>
</g>
<g fill="#1f55b5">
<circle cx="156.0" cy="245.9" r="2.25"/>
<circle cx="172.2" cy="205.2" r="2.25"/>
<circle cx="170.8" cy="234.0" r="2.25"/>
</g>
<g fill="#7b4a12">
<circle cx="194.8" cy="143.4" r="2.25"/>
<circle cx="217.1" cy="333.3" r="2.25"/>
<circle cx="215.4" cy="215.3" r="2.25"/>
<circle cx="232.6" cy="313.4" r="2.25"/>
<circle cx="195.6" cy="365.2" r="2.25"/>
</g>
<g fill="#1fd6a0">
<circle cx="95.1" cy="131.9" r="2.25"/>
<circle cx="131.4" cy="174.3" r="2.25"/>
<circle cx="173.3" cy="164.1" r="2.25"/>
<circle cx="189.2" cy="126.0" r="2.25"/>
<circle cx="186.1" cy="214.2" r="2.25"/>
<circle cx="108.5" cy="332.3" r="2.25"/>
<circle cx="242.2" cy="225.1" r="2.25"/>
<circle cx="167.4" cy="151.3" r="2.25"/>
<circle cx="186.0" cy="302.6" r="2.25"/>
<circle cx="80.4" cy="210.8" r="2.25"/>
<circle cx="257.6" cy="119.8" r="2.25"/>
<circle cx="249.7" cy="95.3" r="2.25"/>
</g>
<g fill="#969696">
<circle cx="139.6" cy="185.8" r="2.25"/>
<circle cx="108.4" cy="173.6" r="2.25"/>
<circle cx="128.4" cy="162.4" r="2.25"/>
<circle cx="214.0" cy="262.2" r="2.25"/>
<circle cx="227.0" cy="130.2" r="2.25"/>
</g>
<g fill="#a9cbff">
<circle cx="180.3" cy="136.8" r="2.25"/>
<circle cx="226.2" cy="345.5" r="2.25"/>
</g>
<g fill="#e31a1c">
<circle cx="123.9" cy="295.0" r="2.25"/>
<circle cx="173.8" cy="313.8" r="2.25"/>
<circle cx="209.9" cy="294.4" r="2.25"/>
<circle cx="140.6" cy="345.8" r="2.25"/>
<circle cx="225.8" cy="94.7" r="2.25"/>
<circle cx="216.3" cy="291.5" r="2.25"/>
<circle cx="138.4" cy="318.8" r="2.25"/>
<circle cx="153.6" cy="293.1" r="2.25"/>
<circle cx="214.9" cy="227.1" r="2.25"/>
<circle cx="90.0" cy="252.6" r="2.25"/>
<circle cx="114.4" cy="250.1" r="2.25"/>
<circle cx="189.0" cy="220.7" r="2.25"/>
<circle cx="187.6" cy="338.3" r="2.25"/>
</g>
<g fill="#fb8072">
<circle cx="100.1" cy="214.5" r="2.25"/>
<circle cx="139.1" cy="200.6" r="2.25"/>
<circle cx="203.2" cy="159.2" r="2.25"/>
<circle cx="122.1" cy="280.2" r="2.25"/>
<circle cx="175.8" cy="252.6" r="2.25"/>
<circle cx="177.5" cy="199.3" r="2.25"/>
<circle cx="190.7" cy="90.4" r="2.25"/>
<circle cx="178.8" cy="264.0" r="2.25"/>
<circle cx="98.1" cy="202.2" r="2.25"/>
<circle cx="148.0" cy="286.7" r="2.25"/>
<circle cx="132.5" cy="230.0" r="2.25"/>
<circle cx="175.2" cy="98.5" r="2.25"/>
<circle cx="170.8" cy="225.9" r="2.25"/>
<circle cx="122.8" cy="156.2" r="2.25"/>
<circle cx="103.0" cy="217.3" r="2.25"/>
<circle cx="150.0" cy="227.9" r="2.25"/>
<circle cx="260.1" cy="137.0" r="2.25"/>
<circle cx="143.5" cy="257.2" r="2.25"/>
<circle cx="142.5" cy="200.8" r="2.25"/>
<circle cx="216.4" cy="360.1" r="2.25"/>
<circle cx="145.2" cy="215.7" r="2.25"/>
<circle cx="169.9" cy="178.5" r="2.25"/>
</g>
<g fill="#f2f2f2">
<circle cx="144.3" cy="147.5" r="2.25"/>
<circle cx="149.2" cy="165.9" r="2.25"/>
<circle cx="187.3" cy="193.2" r="2.25"/>
<circle cx="141.0" cy="80.3" r="2.25"/>
<circle cx="143.3" cy="100.6" r="2.25"/>
<circle cx="87.6" cy="258.4" r="2.25"/>
<circle cx="102.7" cy="163.7" r="2.25"/>
<circle cx="89.8" cy="169.5" r="2.25"/>
<circle cx="94.6" cy="137.2" r="2.25"/>
<circle cx="132.3" cy="144.4" r="2.25"/>
<circle cx="99.4" cy="231.7" r="2.25"/>
<circle cx="128.1" cy="91.1" r="2.25"/>
<circle cx="188.3" cy="155.4" r="2.25"/>
<circle cx="120.4" cy="167.4" r="2.25"/>
<circle cx="86.0" cy="299.3" r="2.25"/>
<circle cx="109.6" cy="211.6" r="2.25"/>
<circle cx="115.2" cy="144.2" r="2.25"/>
<circle cx="167.9" cy="134.3" r="2.25"/>
<circle cx="90.4" cy="178.3" r="2.25"/>
<circle cx="106.2" cy="229.1" r="2.25"/>
</g>
<g fill="#6ea8fb">
<circle cx="247.3" cy="230.9" r="2.25"/>
<circle cx="127.8" cy="179.6" r="2.25"/>
<circle cx="261.3" cy="163.4" r="2.25"/>
<circle cx="178.4" cy="258.3" r="2.25"/>
<circle cx="253.1" cy="228.2" r="2.25"/>
<circle cx="277.2" cy="214.3" r="2.25"/>
<circle cx="163.3" cy="98.8" r="2.25"/>
<circle cx="92.3" cy="293.8" r="2.25"/>
<circle cx="148.5" cy="110.1" r="2.25"/>
<circle cx="209.9" cy="307.0" r="2.25"/>
<circle cx="160.3" cy="103.9" r="2.25"/>
<circle cx="73.5" cy="233.5" r="2.25"/>
<circle cx="194.1" cy="318.1" r="2.25"/>
<circle cx="215.7" cy="301.2" r="2.25"/>
<circle cx="256.9" cy="219.5" r="2.25"/>
<circle cx="195.4" cy="282.5" r="2.25"/>
</g>
<g fill="#b58252">
<circle cx="178.0" cy="122.6" r="2.25"/>
<circle cx="189.1" cy="134.4" r="2.25"/>
<circle cx="154.7" cy="281.2" r="2.25"/>
<circle cx="159.6" cy="292.8" r="2.25"/>
<circle cx="203.7" cy="138.5" r="2.25"/>
<circle cx="172.0" cy="202.0" r="2.25"/>
<circle cx="207.6" cy="265.4" r="2.25"/>
<circle cx="191.0" cy="164.4" r="2.25"/>
<circle cx="166.6" cy="266.5" r="2.25"/>
<circle cx="205.3" cy="179.1" r="2.25"/>
<circle cx="91.9" cy="222.4" r="2.25"/>
<circle cx="217.3" cy="351.5" r="2.25"/>
<circle cx="251.8" cy="122.4" r="2.25"/>
<circle cx="147.5" cy="233.5" r="2.25"/>
<circle cx="200.2" cy="232.2" r="2.25"/>
<circle cx="207.5" cy="271.2" r="2.25"/>
<circle cx="210.6" cy="345.1" r="2.25"/>
<circle cx="261.0" cy="113.5" r="2.25"/>
<circle cx="149.8" cy="331.4" r="2.25"/>
<circle cx="206.2" cy="315.1" r="2.25"/>
<circle cx="160.6" cy="258.0" r="2.25"/>
<circle cx="182.8" cy="226.2" r="2.25"/>
<circle cx="233.0" cy="310.7" r="2.25"/>
<circle cx="234.0" cy="124.7" r="2.25"/>
<circle cx="166.6" cy="107.0" r="2.25"/>
<circle cx="212.2" cy="229.6" r="2.25"/>
<circle cx="187.4" cy="181.9" r="2.25"/>
<circle cx="196.7" cy="153.0" r="2.25"/>
<circle cx="89.3" cy="296.9" r="2.25"/>
<circle cx="89.3" cy="284.6" r="2.25"/>
<circle cx="171.9" cy="275.7" r="2.25"/>
<circle cx="142.2" cy="191.9" r="2.25"/>
<circle cx="141.0" cy="235.9" r="2.25"/>
<circle cx="162.0" cy="307.4" r="2.25"/>
<circle cx="185.8" cy="146.8" r="2.25"/>
<circle cx="189.3" cy="285.4" r="2.25"/>
<circle cx="237.4" cy="100.5" r="2.25"/>
<circle cx="110.3" cy="282.7" r="2.25"/>
<circle cx="95.6" cy="261.5" r="2.25"/>
</g>
<g fill="#fde3b5">
<circle cx="208.6" cy="162.2" r="2.25"/>
<circle cx="94.0" cy="232.1" r="2.25"/>
<circle cx="260.0" cy="125.4" r="2.25"/>
<circle cx="111.8" cy="327.0" r="2.25"/>
<circle cx="200.6" cy="146.4" r="2.25"/>
<circle cx="70.4" cy="234.1" r="2.25"/>
<circle cx="175.4" cy="355.3" r="2.25"/>
<circle cx="171.9" cy="125.5" r="2.25"/>
<circle cx="154.5" cy="100.5" r="2.25"/>
<circle cx="225.0" cy="109.7" r="2.25"/>
<circle cx="184.8" cy="264.1" r="2.25"/>
<circle cx="176.8" cy="213.6" r="2.25"/>
<circle cx="224.1" cy="153.2" r="2.25"/>
<circle cx="238.6" cy="157.3" r="2.25"/>
<circle cx="247.7" cy="313.4" r="2.25"/>
<circle cx="201.9" cy="359.5" r="2.25"/>
<circle cx="224.9" cy="192.5" r="2.25"/>
<circle cx="114.6" cy="323.8" r="2.25"/>
<circle cx="225.3" cy="180.0" r="2.25"/>
<circle cx="190.1" cy="350.3" r="2.25"/>
<circle cx="249.5" cy="162.9" r="2.25"/>
<circle cx="219.1" cy="357.3" r="2.25"/>
<circle cx="238.8" cy="239.7" r="2.25"/>
</g>
<g fill="#1f55b5">
<circle cx="178.2" cy="181.2" r="2.25"/>
<circle cx="173.1" cy="249.6" r="2.25"/>
<circle cx="113.0" cy="203.1" r="2.25"/>
<circle cx="128.2" cy="279.9" r="2.25"/>
</g>
<g fill="#7b4a12">
<circle cx="97.7" cy="288.4" r="2.25"/>
<circle cx="252.5" cy="92.7" r="2.25"/>
<circle cx="213.8" cy="185.3" r="2.25"/>
<circle cx="130.0" cy="123.5" r="2.25"/>
<circle cx="168.3" cy="139.9" r="2.25"/>
<circle cx="117.4" cy="152.7" r="2.25"/>
<circle cx="219.2" cy="114.9" r="2.25"/>
</g>
<g fill="#1fd6a0">
<circle cx="190.2" cy="281.9" r="2.25"/>
<circle cx="216.5" cy="357.3" r="2.25"/>
<circle cx="176.7" cy="158.2" r="2.25"/>
<circle cx="225.2" cy="289.9" r="2.25"/>
<circle cx="173.3" cy="316.7" r="2.25"/>
<circle cx="80.0" cy="205.0" r="2.25"/>
<circle cx="129.7" cy="224.4" r="2.25"/>
<circle cx="218.4" cy="212.1" r="2.25"/>
<circle cx="143.5" cy="86.1" r="2.25"/>
<circle cx="233.8" cy="201.3" r="2.25"/>
<circle cx="246.7" cy="178.5" r="2.25"/>
<circle cx="246.2" cy="180.5" r="2.25"/>
<circle cx="204.5" cy="356.5" r="2.25"/>
<circle cx="253.2" cy="240.5" r="2.25"/>
<circle cx="223.1" cy="348.2" r="2.25"/>
<circle cx="215.5" cy="297.8" r="2.25"/>
<circle cx="227.9" cy="206.5" r="2.25"/>
<circle cx="173.4" cy="151.5" r="2.25"/>
</g>
<g fill="#969696">
<circle cx="133.8" cy="106.3" r="2.25"/>
<circle cx="109.0" cy="135.1" r="2.25"/>
<circle cx="106.1" cy="149.3" r="2.25"/>
<circle cx="174.0" cy="234.2" r="2.25"/>
</g>
<g fill="#a9cbff">
<circle cx="180.9" cy="113.2" r="2.25"/>
</g>
<g fill="#f57ef0">
<circle cx="148.3" cy="360.5" r="2.25"/>
<circle cx="250.4" cy="136.8" r="2.25"/>
<circle cx="206.2" cy="158.7" r="2.25"/>
</g>
<g fill="#e31a1c">
<circle cx="209.3" cy="309.4" r="2.25"/>
<circle cx="159.7" cy="289.8" r="2.25"/>
<circle cx="189.0" cy="143.8" r="2.25"/>
<circle cx="149.6" cy="325.6" r="2.25"/>
<circle cx="134.2" cy="351.6" r="2.25"/>
<circle cx="102.0" cy="261.9" r="2.25"/>
<circle cx="220.1" cy="247.6" r="2.25"/>
<circle cx="127.5" cy="298.0" r="2.25"/>
<circle cx="137.4" cy="256.7" r="2.25"/>
<circle cx="140.1" cy="251.1" r="2.25"/>
<circle cx="220.0" cy="168.7" r="2.25"/>
</g>
<g fill="#fb8072">
<circle cx="99.2" cy="164.1" r="2.25"/>
<circle cx="105.8" cy="155.4" r="2.25"/>
<circle cx="203.8" cy="229.2" r="2.25"/>
<circle cx="110.7" cy="188.4" r="2.25"/>
<circle cx="93.8" cy="148.6" r="2.25"/>
<circle cx="201.9" cy="276.6" r="2.25"/>
<circle cx="100.1" cy="220.5" r="2.25"/>
<circle cx="164.8" cy="240.3" r="2.25"/>
<circle cx="112.3" cy="215.1" r="2.25"/>
<circle cx="223.5" cy="247.5" r="2.25"/>
<circle cx="132.1" cy="162.3" r="2.25"/>
<circle cx="77.0" cy="287.4" r="2.25"/>
<circle cx="201.2" cy="297.4" r="2.25"/>
<circle cx="130.1" cy="135.2" r="2.25"/>
<circle cx="127.9" cy="185.6" r="2.25"/>
<circle cx="135.2" cy="318.6" r="2.25"/>
<circle cx="88.8" cy="211.3" r="2.25"/>
<circle cx="166.8" cy="346.5" r="2.25"/>
<circle cx="77.9" cy="198.8" r="2.25"/>
</g>
<g fill="#f2f2f2">
<circle cx="122.3" cy="170.4" r="2.25"/>
<circle cx="109.5" cy="220.4" r="2.25"/>
<circle cx="183.2" cy="119.5" r="2.25"/>
<circle cx="112.2" cy="129.3" r="2.25"/>
<circle cx="106.1" cy="132.2" r="2.25"/>
</g>
<g fill="#6ea8fb">
<circle cx="195.1" cy="116.9" r="2.25"/>
<circle cx="258.7" cy="152.1" r="2.25"/>
<circle cx="139.2" cy="277.6" r="2.25"/>
<circle cx="243.7" cy="177.9" r="2.25"/>
<circle cx="221.8" cy="218.1" r="2.25"/>
<circle cx="204.8" cy="188.4" r="2.25"/>
<circle cx="200.3" cy="223.4" r="2.25"/>
<circle cx="197.5" cy="138.2" r="2.25"/>
<circle cx="221.4" cy="138.5" r="2.25"/>
<circle cx="166.1" cy="275.7" r="2.25"/>
<circle cx="172.8" cy="98.5" r="2.25"/>
<circle cx="161.6" cy="316.7" r="2.25"/>
<circle cx="206.5" cy="297.4" r="2.25"/>
<circle cx="168.3" cy="216.4" r="2.25"/>
<circle cx="95.2" cy="187.8" r="2.25"/>
<circle cx="141.4" cy="310.0" r="2.25"/>
<circle cx="168.6" cy="213.7" r="2.25"/>
<circle cx="182.7" cy="219.9" r="2.25"/>
<circle cx="221.5" cy="121.1" r="2.25"/>
<circle cx="187.2" cy="261.4" r="2.25"/>
</g>
<g fill="#b58252">
<circle cx="210.2" cy="126.4" r="2.25"/>
<circle cx="271.5" cy="225.7" r="2.25"/>
<circle cx="190.7" cy="335.8" r="2.25"/>
<circle cx="209.6" cy="297.4" r="2.25"/>
<circle cx="158.5" cy="163.3" r="2.25"/>
<circle cx="175.8" cy="334.4" r="2.25"/>
<circle cx="104.9" cy="338.2" r="2.25"/>
<circle cx="104.3" cy="273.2" r="2.25"/>
<circle cx="244.2" cy="245.8" r="2.25"/>
<circle cx="268.2" cy="134.8" r="2.25"/>
<circle cx="209.2" cy="141.1" r="2.25"/>
<circle cx="170.6" cy="139.6" r="2.25"/>
<circle cx="134.3" cy="168.5" r="2.25"/>
<circle cx="163.5" cy="175.0" r="2.25"/>
<circle cx="228.0" cy="209.4" r="2.25"/>
<circle cx="135.3" cy="324.9" r="2.25"/>
<circle cx="70.6" cy="227.6" r="2.25"/>
<circle cx="192.1" cy="302.8" r="2.25"/>
<circle cx="180.8" cy="361.7" r="2.25"/>
<circle cx="194.5" cy="149.9" r="2.25"/>
<circle cx="203.4" cy="311.9" r="2.25"/>
<circle cx="81.6" cy="261.2" r="2.25"/>
<circle cx="260.9" cy="107.4" r="2.25"/>
<circle cx="231.7" cy="95.2" r="2.25"/>
<circle cx="204.0" cy="135.6" r="2.25"/>
<circle cx="160.4" cy="366.8" r="2.25"/>
<circle cx="175.6" cy="358.9" r="2.25"/>
<circle cx="231.7" cy="339.4" r="2.25"/>
<circle cx="156.1" cy="322.0" r="2.25"/>
<circle cx="204.0" cy="123.3" r="2.25"/>
<circle cx="259.7" cy="131.6" r="2.25"/>
<circle cx="178.7" cy="169.8" r="2.25"/>
<circle cx="257.0" cy="131.3" r="2.25"/>
<circle cx="154.6" cy="198.2" r="2.25"/>
<circle cx="106.2" cy="211.9" r="2.25"/>
</g>
<g fill="#fde3b5">
<circle cx="77.6" cy="204.9" r="2.25"/>
<circle cx="241.1" cy="88.8" r="2.25"/>
<circle cx="251.4" cy="128.3" r="2.25"/>
<circle cx="251.3" cy="113.6" r="2.25"/>
<circle cx="67.8" cy="227.8" r="2.25"/>
<circle cx="219.8" cy="108.9" r="2.25"/>
<circle cx="235.9" cy="151.4" r="2.25"/>
<circle cx="147.9" cy="293.0" r="2.25"/>
<circle cx="94.0" cy="237.7" r="2.25"/>
<circle cx="215.5" cy="138.2" r="2.25"/>
<circle cx="103.6" cy="226.2" r="2.25"/>
<circle cx="156.6" cy="299.3" r="2.25"/>
<circle cx="259.8" cy="122.3" r="2.25"/>
<circle cx="187.6" cy="355.6" r="2.25"/>
<circle cx="208.9" cy="336.0" r="2.25"/>
<circle cx="233.2" cy="133.0" r="2.25"/>
<circle cx="244.7" cy="148.4" r="2.25"/>
<circle cx="189.3" cy="129.0" r="2.25"/>
<circle cx="221.9" cy="192.3" r="2.25"/>
<circle cx="70.3" cy="249.0" r="2.25"/>
<circle cx="166.1" cy="104.2" r="2.25"/>
<circle cx="151.7" cy="103.6" r="2.25"/>
</g>
<g fill="#1f55b5">
<circle cx="114.8" cy="217.8" r="2.25"/>
<circle cx="223.7" cy="230.6" r="2.25"/>
</g>
<g fill="#1fd6a0">
<circle cx="252.6" cy="178.1" r="2.25"/>
<circle cx="149.3" cy="159.6" r="2.25"/>
<circle cx="169.1" cy="187.3" r="2.25"/>
<circle cx="174.5" cy="124.9" r="2.25"/>
<circle cx="222.4" cy="197.7" r="2.25"/>
<circle cx="163.3" cy="204.8" r="2.25"/>
<circle cx="166.8" cy="178.3" r="2.25"/>
<circle cx="179.4" cy="329.1" r="2.25"/>
</g>
<g fill="#969696">
<circle cx="200.1" cy="247.2" r="2.25"/>
<circle cx="168.8" cy="287.5" r="2.25"/>
<circle cx="158.0" cy="357.6" r="2.25"/>
<circle cx="201.8" cy="270.5" r="2.25"/>
<circle cx="200.7" cy="214.8" r="2.25"/>
<circle cx="150.9" cy="124.9" r="2.25"/>
<circle cx="108.5" cy="155.2" r="2.25"/>
</g>
<g fill="#a9cbff">
<circle cx="205.8" cy="253.2" r="2.25"/>
<circle cx="125.0" cy="261.9" r="2.25"/>
<circle cx="143.8" cy="230.5" r="2.25"/>
</g>
<g fill="#f57ef0">
<circle cx="239.4" cy="116.2" r="2.25"/>
<circle cx="116.4" cy="338.6" r="2.25"/>
<circle cx="208.3" cy="185.1" r="2.25"/>
</g>
<g fill="#e31a1c">
<circle cx="134.6" cy="339.6" r="2.25"/>
<circle cx="184.7" cy="270.6" r="2.25"/>
<circle cx="129.5" cy="236.3" r="2.25"/>
<circle cx="199.3" cy="359.3" r="2.25"/>
<circle cx="126.9" cy="300.3" r="2.25"/>
<circle cx="156.4" cy="219.2" r="2.25"/>
<circle cx="209.2" cy="230.2" r="2.25"/>
<circle cx="137.2" cy="350.9" r="2.25"/>
<circle cx="121.1" cy="206.2" r="2.25"/>
<circle cx="146.3" cy="245.5" r="2.25"/>
<circle cx="131.3" cy="274.2" r="2.25"/>
</g>
<g fill="#fb8072">
<circle cx="221.6" cy="200.4" r="2.25"/>
<circle cx="124.7" cy="271.6" r="2.25"/>
<circle cx="149.6" cy="233.6" r="2.25"/>
<circle cx="224.9" cy="121.6" r="2.25"/>
<circle cx="192.1" cy="211.3" r="2.25"/>
<circle cx="142.9" cy="198.1" r="2.25"/>
<circle cx="231.1" cy="112.8" r="2.25"/>
<circle cx="187.5" cy="347.3" r="2.25"/>
<circle cx="91.8" cy="290.2" r="2.25"/>
<circle cx="165.5" cy="299.3" r="2.25"/>
<circle cx="233.2" cy="224.5" r="2.25"/>
<circle cx="94.6" cy="219.5" r="2.25"/>
<circle cx="121.4" cy="200.4" r="2.25"/>
<circle cx="87.7" cy="169.3" r="2.25"/>
<circle cx="122.1" cy="179.1" r="2.25"/>
<circle cx="177.4" cy="116.4" r="2.25"/>
<circle cx="77.1" cy="224.7" r="2.25"/>
<circle cx="135.7" cy="129.4" r="2.25"/>
<circle cx="241.0" cy="322.6" r="2.25"/>
<circle cx="119.9" cy="158.8" r="2.25"/>
<circle cx="68.1" cy="212.7" r="2.25"/>
<circle cx="106.9" cy="275.9" r="2.25"/>
<circle cx="110.1" cy="205.4" r="2.25"/>
<circle cx="157.6" cy="269.3" r="2.25"/>
<circle cx="78.5" cy="254.3" r="2.25"/>
</g>
<g fill="#f2f2f2">
<circle cx="176.3" cy="164.0" r="2.25"/>
<circle cx="161.5" cy="171.6" r="2.25"/>
<circle cx="118.4" cy="205.7" r="2.25"/>
<circle cx="113.5" cy="175.8" r="2.25"/>
<circle cx="161.3" cy="242.7" r="2.25"/>
<circle cx="150.8" cy="118.3" r="2.25"/>
<circle cx="130.7" cy="117.7" r="2.25"/>
<circle cx="192.5" cy="126.1" r="2.25"/>
<circle cx="153.7" cy="139.4" r="2.25"/>
<circle cx="115.0" cy="149.6" r="2.25"/>
<circle cx="214.6" cy="253.8" r="2.25"/>
<circle cx="94.9" cy="213.7" r="2.25"/>
<circle cx="119.4" cy="347.5" r="2.25"/>
<circle cx="160.2" cy="196.0" r="2.25"/>
</g>
<g fill="#6ea8fb">
<circle cx="188.0" cy="321.0" r="2.25"/>
<circle cx="82.7" cy="205.0" r="2.25"/>
<circle cx="217.0" cy="259.4" r="2.25"/>
<circle cx="135.8" cy="223.8" r="2.25"/>
<circle cx="257.5" cy="125.3" r="2.25"/>
<circle cx="180.5" cy="122.5" r="2.25"/>
<circle cx="249.2" cy="175.6" r="2.25"/>
<circle cx="124.1" cy="230.1" r="2.25"/>
<circle cx="93.7" cy="246.1" r="2.25"/>
<circle cx="98.6" cy="276.4" r="2.25"/>
<circle cx="148.2" cy="124.2" r="2.25"/>
<circle cx="175.4" cy="340.8" r="2.25"/>
<circle cx="186.2" cy="199.6" r="2.25"/>
<circle cx="228.1" cy="186.3" r="2.25"/>
<circle cx="233.2" cy="130.0" r="2.25"/>
<circle cx="222.2" cy="206.4" r="2.25"/>
<circle cx="155.3" cy="172.0" r="2.25"/>
</g>
<g fill="#b58252">
<circle cx="163.1" cy="364.4" r="2.25"/>
<circle cx="66.1" cy="266.6" r="2.25"/>
<circle cx="248.2" cy="127.4" r="2.25"/>
<circle cx="193.9" cy="146.7" r="2.25"/>
<circle cx="130.3" cy="201.0" r="2.25"/>
<circle cx="140.1" cy="257.3" r="2.25"/>
<circle cx="68.4" cy="219.4" r="2.25"/>
<circle cx="160.0" cy="274.9" r="2.25"/>
<circle cx="166.6" cy="190.4" r="2.25"/>
<circle cx="240.5" cy="171.7" r="2.25"/>
<circle cx="142.0" cy="295.7" r="2.25"/>
<circle cx="174.0" cy="323.4" r="2.25"/>
<circle cx="98.1" cy="296.9" r="2.25"/>
<circle cx="79.6" cy="225.6" r="2.25"/>
<circle cx="94.1" cy="223.3" r="2.25"/>
<circle cx="215.6" cy="203.3" r="2.25"/>
<circle cx="226.2" cy="342.7" r="2.25"/>
<circle cx="215.9" cy="194.7" r="2.25"/>
<circle cx="116.5" cy="265.4" r="2.25"/>
<circle cx="177.4" cy="134.7" r="2.25"/>
<circle cx="247.8" cy="148.6" r="2.25"/>
<circle cx="133.3" cy="289.6" r="2.25"/>
<circle cx="83.3" cy="282.0" r="2.25"/>
<circle cx="218.0" cy="147.0" r="2.25"/>
<circle cx="268.7" cy="220.1" r="2.25"/>
<circle cx="69.3" cy="263.6" r="2.25"/>
<circle cx="176.7" cy="302.5" r="2.25"/>
<circle cx="169.2" cy="364.1" r="2.25"/>
<circle cx="129.5" cy="309.6" r="2.25"/>
<circle cx="207.1" cy="303.6" r="2.25"/>
<circle cx="69.5" cy="268.9" r="2.25"/>
<circle cx="239.8" cy="198.0" r="2.25"/>
</g>
<g fill="#fde3b5">
<circle cx="192.4" cy="197.2" r="2.25"/>
<circle cx="212.3" cy="306.5" r="2.25"/>
<circle cx="240.6" cy="165.6" r="2.25"/>
<circle cx="166.6" cy="343.6" r="2.25"/>
<circle cx="146.7" cy="330.9" r="2.25"/>
<circle cx="193.2" cy="90.5" r="2.25"/>
<circle cx="242.6" cy="127.8" r="2.25"/>
<circle cx="223.6" cy="145.1" r="2.25"/>
<circle cx="159.6" cy="310.8" r="2.25"/>
<circle cx="237.4" cy="112.5" r="2.25"/>
<circle cx="189.5" cy="113.8" r="2.25"/>
<circle cx="116.2" cy="279.7" r="2.25"/>
<circle cx="223.8" cy="333.8" r="2.25"/>
<circle cx="105.6" cy="335.1" r="2.25"/>
<circle cx="232.0" cy="351.7" r="2.25"/>
<circle cx="178.1" cy="104.8" r="2.25"/>
<circle cx="198.0" cy="117.7" r="2.25"/>
<circle cx="194.2" cy="226.5" r="2.25"/>
<circle cx="164.6" cy="328.3" r="2.25"/>
<circle cx="222.6" cy="111.8" r="2.25"/>
<circle cx="128.5" cy="329.9" r="2.25"/>
<circle cx="180.6" cy="282.1" r="2.25"/>
<circle cx="177.3" cy="119.8" r="2.25"/>
<circle cx="169.6" cy="352.5" r="2.25"/>
<circle cx="149.5" cy="91.5" r="2.25"/>
<circle cx="88.0" cy="229.0" r="2.25"/>
<circle cx="156.5" cy="216.1" r="2.25"/>
<circle cx="199.5" cy="336.1" r="2.25"/>
<circle cx="190.6" cy="185.2" r="2.25"/>
</g>
<g fill="#1f55b5">
<circle cx="274.9" cy="220.0" r="2.25"/>
<circle cx="170.2" cy="175.5" r="2.25"/>
</g>
<g fill="#7b4a12">
<circle cx="136.7" cy="280.3" r="2.25"/>
<circle cx="268.8" cy="137.4" r="2.25"/>
<circle cx="204.9" cy="359.6" r="2.25"/>
<circle cx="109.1" cy="128.9" r="2.25"/>
</g>
<g fill="#1fd6a0">
<circle cx="107.3" cy="199.8" r="2.25"/>
<circle cx="151.0" cy="278.3" r="2.25"/>
<circle cx="248.1" cy="204.3" r="2.25"/>
<circle cx="177.6" cy="219.5" r="2.25"/>
<circle cx="135.9" cy="307.2" r="2.25"/>
<circle cx="148.3" cy="195.1" r="2.25"/>
<circle cx="152.9" cy="333.6" r="2.25"/>
<circle cx="109.9" cy="200.3" r="2.25"/>
<circle cx="181.9" cy="329.7" r="2.25"/>
<circle cx="111.0" cy="164.3" r="2.25"/>
<circle cx="189.1" cy="131.2" r="2.25"/>
<circle cx="242.1" cy="216.3" r="2.25"/>
<circle cx="165.6" cy="198.6" r="2.25"/>
<circle cx="251.7" cy="204.4" r="2.25"/>
</g>
<g fill="#969696">
<circle cx="102.6" cy="140.9" r="2.25"/>
<circle cx="146.2" cy="180.2" r="2.25"/>
<circle cx="170.4" cy="231.5" r="2.25"/>
<circle cx="147.2" cy="148.3" r="2.25"/>
</g>
<g fill="#a9cbff">
<circle cx="243.7" cy="95.1" r="2.25"/>
</g>
<g fill="#f57ef0">
<circle cx="149.5" cy="322.4" r="2.25"/>
<circle cx="269.7" cy="181.8" r="2.25"/>
<circle cx="118.5" cy="209.3" r="2.25"/>
<circle cx="206.6" cy="129.8" r="2.25"/>
</g>
<g fill="#e31a1c">
<circle cx="119.1" cy="267.5" r="2.25"/>
<circle cx="219.9" cy="274.4" r="2.25"/>
<circle cx="219.2" cy="359.6" r="2.25"/>
<circle cx="193.3" cy="273.2" r="2.25"/>
<circle cx="197.9" cy="291.1" r="2.25"/>
<circle cx="127.9" cy="203.0" r="2.25"/>
<circle cx="77.2" cy="219.4" r="2.25"/>
</g>
<g fill="#fb8072">
<circle cx="102.8" cy="238.2" r="2.25"/>
<circle cx="171.4" cy="305.0" r="2.25"/>
<circle cx="72.0" cy="263.1" r="2.25"/>
<circle cx="104.4" cy="178.5" r="2.25"/>
<circle cx="227.1" cy="307.1" r="2.25"/>
<circle cx="146.4" cy="76.7" r="2.25"/>
<circle cx="101.4" cy="196.5" r="2.25"/>
<circle cx="86.8" cy="279.1" r="2.25"/>
<circle cx="111.2" cy="158.9" r="2.25"/>
<circle cx="76.9" cy="289.7" r="2.25"/>
<circle cx="116.1" cy="199.9" r="2.25"/>
<circle cx="174.0" cy="299.4" r="2.25"/>
<circle cx="120.2" cy="150.4" r="2.25"/>
<circle cx="102.7" cy="235.3" r="2.25"/>
<circle cx="139.4" cy="198.2" r="2.25"/>
<circle cx="168.8" cy="281.3" r="2.25"/>
<circle cx="166.0" cy="361.2" r="2.25"/>
<circle cx="188.9" cy="222.9" r="2.25"/>
</g>
<g fill="#f2f2f2">
<circle cx="122.0" cy="286.0" r="2.25"/>
<circle cx="199.8" cy="318.4" r="2.25"/>
<circle cx="109.1" cy="150.0" r="2.25"/>
<circle cx="200.8" cy="221.1" r="2.25"/>
<circle cx="103.0" cy="137.6" r="2.25"/>
<circle cx="106.3" cy="143.2" r="2.25"/>
<circle cx="188.2" cy="149.6" r="2.25"/>
<circle cx="197.2" cy="237.8" r="2.25"/>
<circle cx="142.7" cy="91.3" r="2.25"/>
<circle cx="128.2" cy="259.8" r="2.25"/>
<circle cx="131.5" cy="254.2" r="2.25"/>
<circle cx="146.2" cy="357.7" r="2.25"/>
<circle cx="148.3" cy="103.9" r="2.25"/>
<circle cx="103.1" cy="152.4" r="2.25"/>
<circle cx="97.6" cy="140.3" r="2.25"/>
<circle cx="94.9" cy="128.6" r="2.25"/>
<circle cx="139.5" cy="115.6" r="2.25"/>
<circle cx="111.7" cy="161.7" r="2.25"/>
</g>
<g fill="#6ea8fb">
<circle cx="160.5" cy="183.4" r="2.25"/>
<circle cx="103.6" cy="305.4" r="2.25"/>
<circle cx="211.5" cy="250.1" r="2.25"/>
<circle cx="182.0" cy="235.1" r="2.25"/>
<circle cx="181.0" cy="278.6" r="2.25"/>
<circle cx="159.2" cy="150.8" r="2.25"/>
<circle cx="219.8" cy="106.6" r="2.25"/>
<circle cx="245.0" cy="222.0" r="2.25"/>
<circle cx="216.6" cy="348.3" r="2.25"/>
<circle cx="272.6" cy="187.3" r="2.25"/>
<circle cx="244.2" cy="233.6" r="2.25"/>
<circle cx="140.4" cy="263.3" r="2.25"/>
<circle cx="142.1" cy="135.8" r="2.25"/>
<circle cx="202.2" cy="259.6" r="2.25"/>
</g>
<g fill="#b58252">
<circle cx="171.0" cy="311.1" r="2.25"/>
<circle cx="193.7" cy="169.8" r="2.25"/>
<circle cx="197.4" cy="135.1" r="2.25"/>
<circle cx="219.5" cy="345.6" r="2.25"/>
<circle cx="204.4" cy="280.2" r="2.25"/>
<circle cx="119.5" cy="359.3" r="2.25"/>
<circle cx="135.0" cy="236.3" r="2.25"/>
<circle cx="125.1" cy="185.9" r="2.25"/>
<circle cx="259.2" cy="237.0" r="2.25"/>
<circle cx="174.5" cy="121.9" r="2.25"/>
<circle cx="187.2" cy="173.4" r="2.25"/>
<circle cx="107.3" cy="273.6" r="2.25"/>
<circle cx="95.9" cy="273.4" r="2.25"/>
<circle cx="76.9" cy="207.6" r="2.25"/>
<circle cx="137.9" cy="244.8" r="2.25"/>
<circle cx="209.8" cy="227.0" r="2.25"/>
<circle cx="168.6" cy="127.6" r="2.25"/>
<circle cx="157.9" cy="80.5" r="2.25"/>
<circle cx="138.8" cy="298.7" r="2.25"/>
<circle cx="265.9" cy="128.3" r="2.25"/>
<circle cx="263.4" cy="116.4" r="2.25"/>
<circle cx="237.3" cy="364.0" r="2.25"/>
<circle cx="107.1" cy="288.1" r="2.25"/>
<circle cx="265.5" cy="225.4" r="2.25"/>
<circle cx="213.0" cy="115.0" r="2.25"/>
<circle cx="79.9" cy="228.1" r="2.25"/>
<circle cx="122.2" cy="341.6" r="2.25"/>
<circle cx="104.9" cy="349.8" r="2.25"/>
<circle cx="144.3" cy="312.7" r="2.25"/>
<circle cx="94.7" cy="294.0" r="2.25"/>
<circle cx="114.0" cy="244.5" r="2.25"/>
<circle cx="204.5" cy="182.0" r="2.25"/>
<circle cx="226.9" cy="159.9" r="2.25"/>
<circle cx="76.3" cy="240.4" r="2.25"/>
<circle cx="252.9" cy="154.8" r="2.25"/>
<circle cx="180.6" cy="210.9" r="2.25"/>
<circle cx="162.4" cy="225.2" r="2.25"/>
</g>
<g fill="#fde3b5">
<circle cx="227.5" cy="227.7" r="2.25"/>
<circle cx="158.0" cy="89.3" r="2.25"/>
<circle cx="235.0" cy="160.1" r="2.25"/>
<circle cx="138.7" cy="301.0" r="2.25"/>
<circle cx="190.4" cy="173.1" r="2.25"/>
<circle cx="183.8" cy="190.8" r="2.25"/>
<circle cx="246.3" cy="97.8" r="2.25"/>
<circle cx="138.8" cy="212.6" r="2.25"/>
<circle cx="151.8" cy="180.6" r="2.25"/>
<circle cx="241.3" cy="154.6" r="2.25"/>
<circle cx="220.1" cy="330.4" r="2.25"/>
<circle cx="172.6" cy="95.7" r="2.25"/>
<circle cx="137.3" cy="354.6" r="2.25"/>
<circle cx="254.0" cy="133.9" r="2.25"/>
<circle cx="138.8" cy="294.9" r="2.25"/>
<circle cx="181.7" cy="161.3" r="2.25"/>
<circle cx="197.1" cy="167.7" r="2.25"/>
<circle cx="193.5" cy="161.5" r="2.25"/>
<circle cx="267.0" cy="172.7" r="2.25"/>
<circle cx="241.5" cy="245.6" r="2.25"/>
<circle cx="80.5" cy="198.9" r="2.25"/>
<circle cx="146.0" cy="339.5" r="2.25"/>
<circle cx="138.1" cy="313.2" r="2.25"/>
<circle cx="79.5" cy="222.6" r="2.25"/>
</g>
<g fill="#1f55b5">
<circle cx="263.0" cy="220.2" r="2.25"/>
<circle cx="164.6" cy="316.7" r="2.25"/>
<circle cx="225.3" cy="186.0" r="2.25"/>
</g>
<g fill="#7b4a12">
<circle cx="133.4" cy="126.4" r="2.25"/>
<circle cx="145.7" cy="345.4" r="2.25"/>
</g>
<g fill="#1fd6a0">
<circle cx="244.1" cy="174.7" r="2.25"/>
<circle cx="216.4" cy="191.8" r="2.25"/>
<circle cx="143.2" cy="171.6" r="2.25"/>
<circle cx="248.0" cy="207.5" r="2.25"/>
<circle cx="71.4" cy="207.0" r="2.25"/>
<circle cx="247.4" cy="225.5" r="2.25"/>
<circle cx="255.1" cy="181.3" r="2.25"/>
<circle cx="226.1" cy="247.7" r="2.25"/>
<circle cx="142.7" cy="109.6" r="2.25"/>
<circle cx="111.2" cy="338.2" r="2.25"/>
<circle cx="237.4" cy="198.3" r="2.25"/>
<circle cx="228.7" cy="165.2" r="2.25"/>
<circle cx="228.2" cy="104.0" r="2.25"/>
<circle cx="242.6" cy="213.5" r="2.25"/>
<circle cx="223.4" cy="156.6" r="2.25"/>
<circle cx="173.6" cy="305.2" r="2.25"/>
<circle cx="222.2" cy="359.7" r="2.25"/>
</g>
<g fill="#969696">
<circle cx="125.9" cy="341.8" r="2.25"/>
<circle cx="129.3" cy="73.5" r="2.25"/>
<circle cx="96.0" cy="181.7" r="2.25"/>
</g>
<g fill="#a9cbff">
<circle cx="177.3" cy="297.0" r="2.25"/>
</g>
<g fill="#f57ef0">
<circle cx="206.3" cy="309.3" r="2.25"/>
<circle cx="200.7" cy="150.0" r="2.25"/>
<circle cx="71.0" cy="216.2" r="2.25"/>
<circle cx="139.7" cy="106.7" r="2.25"/>
</g>
<g fill="#e31a1c">
<circle cx="155.7" cy="231.2" r="2.25"/>
<circle cx="146.5" cy="336.6" r="2.25"/>
<circle cx="75.6" cy="266.7" r="2.25"/>
<circle cx="188.5" cy="237.4" r="2.25"/>
<circle cx="160.1" cy="213.7" r="2.25"/>
<circle cx="172.7" cy="340.8" r="2.25"/>
<circle cx="196.7" cy="247.1" r="2.25"/>
<circle cx="145.2" cy="198.1" r="2.25"/>
<circle cx="153.7" cy="286.7" r="2.25"/>
<circle cx="137.8" cy="321.6" r="2.25"/>
<circle cx="197.7" cy="211.2" r="2.25"/>
</g>
<g fill="#fb8072">
<circle cx="159.9" cy="207.4" r="2.25"/>
<circle cx="97.0" cy="154.9" r="2.25"/>
<circle cx="94.2" cy="216.9" r="2.25"/>
<circle cx="107.5" cy="264.6" r="2.25"/>
<circle cx="144.3" cy="139.0" r="2.25"/>
<circle cx="179.5" cy="326.2" r="2.25"/>
<circle cx="135.1" cy="227.5" r="2.25"/>
<circle cx="150.9" cy="298.5" r="2.25"/>
<circle cx="148.1" cy="132.9" r="2.25"/>
<circle cx="114.3" cy="164.4" r="2.25"/>
<circle cx="102.2" cy="176.4" r="2.25"/>
<circle cx="143.1" cy="177.1" r="2.25"/>
<circle cx="151.4" cy="112.7" r="2.25"/>
<circle cx="107.4" cy="179.2" r="2.25"/>
<circle cx="117.1" cy="341.3" r="2.25"/>
<circle cx="113.2" cy="285.1" r="2.25"/>
<circle cx="164.1" cy="267.0" r="2.25"/>
<circle cx="235.1" cy="331.4" r="2.25"/>
<circle cx="73.9" cy="216.2" r="2.25"/>
<circle cx="141.6" cy="141.5" r="2.25"/>
<circle cx="94.7" cy="140.1" r="2.25"/>
</g>
<g fill="#f2f2f2">
<circle cx="133.5" cy="271.0" r="2.25"/>
<circle cx="169.6" cy="361.1" r="2.25"/>
<circle cx="109.2" cy="223.9" r="2.25"/>
<circle cx="165.7" cy="133.5" r="2.25"/>
<circle cx="105.1" cy="161.0" r="2.25"/>
<circle cx="130.0" cy="141.3" r="2.25"/>
<circle cx="143.9" cy="145.0" r="2.25"/>
<circle cx="129.6" cy="150.3" r="2.25"/>
<circle cx="97.7" cy="290.8" r="2.25"/>
<circle cx="113.7" cy="170.8" r="2.25"/>
<circle cx="83.1" cy="217.0" r="2.25"/>
<circle cx="100.7" cy="207.9" r="2.25"/>
<circle cx="179.8" cy="305.7" r="2.25"/>
</g>
<g fill="#6ea8fb">
<circle cx="176.4" cy="155.3" r="2.25"/>
<circle cx="135.6" cy="301.2" r="2.25"/>
<circle cx="217.5" cy="324.7" r="2.25"/>
<circle cx="131.0" cy="179.6" r="2.25"/>
<circle cx="226.1" cy="173.9" r="2.25"/>
<circle cx="128.6" cy="335.9" r="2.25"/>
<circle cx="212.3" cy="132.9" r="2.25"/>
<circle cx="188.7" cy="323.7" r="2.25"/>
<circle cx="166.4" cy="110.6" r="2.25"/>
<circle cx="242.2" cy="219.6" r="2.25"/>
<circle cx="141.2" cy="162.1" r="2.25"/>
<circle cx="228.5" cy="195.0" r="2.25"/>
<circle cx="163.0" cy="127.8" r="2.25"/>
<circle cx="151.8" cy="106.4" r="2.25"/>
<circle cx="172.0" cy="290.1" r="2.25"/>
<circle cx="149.6" cy="168.7" r="2.25"/>
<circle cx="227.5" cy="310.4" r="2.25"/>
<circle cx="161.1" cy="245.6" r="2.25"/>
<circle cx="248.2" cy="133.8" r="2.25"/>
</g>
<g fill="#b58252">
<circle cx="168.9" cy="275.8" r="2.25"/>
<circle cx="149.9" cy="162.3" r="2.25"/>
<circle cx="167.7" cy="322.4" r="2.25"/>
<circle cx="153.0" cy="233.4" r="2.25"/>
<circle cx="184.4" cy="346.6" r="2.25"/>
<circle cx="153.4" cy="307.5" r="2.25"/>
<circle cx="158.1" cy="348.8" r="2.25"/>
<circle cx="218.6" cy="224.2" r="2.25"/>
<circle cx="103.4" cy="208.2" r="2.25"/>
<circle cx="156.8" cy="307.6" r="2.25"/>
<circle cx="244.3" cy="227.8" r="2.25"/>
<circle cx="142.4" cy="127.1" r="2.25"/>
<circle cx="124.9" cy="286.1" r="2.25"/>
<circle cx="208.9" cy="244.4" r="2.25"/>
<circle cx="229.0" cy="342.5" r="2.25"/>
<circle cx="138.2" cy="233.5" r="2.25"/>
<circle cx="271.0" cy="163.8" r="2.25"/>
<circle cx="265.4" cy="231.9" r="2.25"/>
<circle cx="183.3" cy="217.0" r="2.25"/>
<circle cx="235.9" cy="233.4" r="2.25"/>
<circle cx="277.9" cy="220.1" r="2.25"/>
<circle cx="157.8" cy="257.6" r="2.25"/>
<circle cx="205.5" cy="336.3" r="2.25"/>
<circle cx="112.8" cy="288.6" r="2.25"/>
<circle cx="169.3" cy="358.4" r="2.25"/>
<circle cx="195.5" cy="202.9" r="2.25"/>
<circle cx="232.0" cy="242.1" r="2.25"/>
<circle cx="178.0" cy="285.0" r="2.25"/>
<circle cx="181.2" cy="181.8" r="2.25"/>
<circle cx="220.4" cy="245.0" r="2.25"/>
<circle cx="174.6" cy="281.7" r="2.25"/>
<circle cx="254.5" cy="110.3" r="2.25"/>
<circle cx="167.9" cy="234.4" r="2.25"/>
<circle cx="135.7" cy="312.8" r="2.25"/>
<circle cx="219.9" cy="165.7" r="2.25"/>
<circle cx="223.6" cy="325.1" r="2.25"/>
</g>
<g fill="#fde3b5">
<circle cx="245.1" cy="213.0" r="2.25"/>
<circle cx="212.7" cy="120.4" r="2.25"/>
<circle cx="176.8" cy="146.2" r="2.25"/>
<circle cx="244.9" cy="207.2" r="2.25"/>
<circle cx="181.3" cy="267.3" r="2.25"/>
<circle cx="220.2" cy="336.1" r="2.25"/>
<circle cx="213.2" cy="286.1" r="2.25"/>
<circle cx="64.8" cy="230.3" r="2.25"/>
<circle cx="257.4" cy="113.4" r="2.25"/>
<circle cx="226.4" cy="242.1" r="2.25"/>
<circle cx="248.2" cy="130.9" r="2.25"/>
<circle cx="259.2" cy="140.1" r="2.25"/>
<circle cx="250.6" cy="139.5" r="2.25"/>
<circle cx="209.7" cy="144.3" r="2.25"/>
<circle cx="218.8" cy="132.3" r="2.25"/>
<circle cx="172.6" cy="358.0" r="2.25"/>
<circle cx="188.1" cy="87.1" r="2.25"/>
<circle cx="100.6" cy="290.9" r="2.25"/>
<circle cx="247.7" cy="219.6" r="2.25"/>
<circle cx="272.0" cy="205.4" r="2.25"/>
</g>
<g fill="#1f55b5">
<circle cx="223.6" cy="236.4" r="2.25"/>
<circle cx="182.0" cy="326.4" r="2.25"/>
</g>
<g fill="#7b4a12">
<circle cx="221.6" cy="223.9" r="2.25"/>
<circle cx="205.1" cy="167.3" r="2.25"/>
<circle cx="197.5" cy="318.1" r="2.25"/>
</g>
<g fill="#1fd6a0">
<circle cx="186.7" cy="287.8" r="2.25"/>
<circle cx="236.3" cy="222.3" r="2.25"/>
<circle cx="218.0" cy="227.0" r="2.25"/>
<circle cx="211.0" cy="188.9" r="2.25"/>
<circle cx="172.6" cy="352.0" r="2.25"/>
<circle cx="260.3" cy="207.5" r="2.25"/>
<circle cx="225.6" cy="357.1" r="2.25"/>
<circle cx="88.2" cy="219.2" r="2.25"/>
<circle cx="241.6" cy="150.9" r="2.25"/>
<circle cx="166.4" cy="180.7" r="2.25"/>
<circle cx="210.5" cy="289.3" r="2.25"/>
<circle cx="74.9" cy="281.6" r="2.25"/>
<circle cx="109.1" cy="235.0" r="2.25"/>
<circle cx="68.5" cy="206.9" r="2.25"/>
<circle cx="233.3" cy="204.1" r="2.25"/>
<circle cx="131.1" cy="277.2" r="2.25"/>
<circle cx="116.5" cy="176.1" r="2.25"/>
</g>
<g fill="#969696">
<circle cx="139.8" cy="189.2" r="2.25"/>
<circle cx="200.1" cy="241.4" r="2.25"/>
<circle cx="126.2" cy="73.1" r="2.25"/>
<circle cx="103.3" cy="128.4" r="2.25"/>
<circle cx="134.8" cy="79.3" r="2.25"/>
</g>
<g fill="#a9cbff">
<circle cx="119.7" cy="265.1" r="2.25"/>
</g>
<g fill="#f57ef0">
<circle cx="160.5" cy="109.6" r="2.25"/>
<circle cx="169.4" cy="193.4" r="2.25"/>
<circle cx="253.3" cy="163.5" r="2.25"/>
<circle cx="108.9" cy="232.5" r="2.25"/>
<circle cx="266.3" cy="199.2" r="2.25"/>
</g>
<g fill="#e31a1c">
<circle cx="193.8" cy="158.4" r="2.25"/>
<circle cx="194.3" cy="315.3" r="2.25"/>
<circle cx="197.1" cy="311.6" r="2.25"/>
<circle cx="99.3" cy="252.7" r="2.25"/>
<circle cx="206.3" cy="232.2" r="2.25"/>
<circle cx="213.0" cy="297.8" r="2.25"/>
<circle cx="218.5" cy="310.0" r="2.25"/>
<circle cx="267.3" cy="170.2" r="2.25"/>
<circle cx="202.2" cy="252.9" r="2.25"/>
<circle cx="106.8" cy="217.5" r="2.25"/>
<circle cx="139.0" cy="303.7" r="2.25"/>
<circle cx="188.4" cy="231.6" r="2.25"/>
<circle cx="136.3" cy="200.3" r="2.25"/>
<circle cx="133.2" cy="203.2" r="2.25"/>
<circle cx="202.9" cy="250.7" r="2.25"/>
</g>
<g fill="#fb8072">
<circle cx="136.7" cy="356.8" r="2.25"/>
<circle cx="167.2" cy="328.9" r="2.25"/>
<circle cx="141.9" cy="130.2" r="2.25"/>
<circle cx="153.6" cy="230.5" r="2.25"/>
<circle cx="128.7" cy="167.5" r="2.25"/>
<circle cx="144.2" cy="309.8" r="2.25"/>
<circle cx="143.2" cy="180.7" r="2.25"/>
<circle cx="128.4" cy="165.0" r="2.25"/>
<circle cx="173.6" cy="154.9" r="2.25"/>
<circle cx="105.7" cy="158.0" r="2.25"/>
<circle cx="219.9" cy="256.9" r="2.25"/>
<circle cx="111.9" cy="149.9" r="2.25"/>
<circle cx="131.9" cy="91.7" r="2.25"/>
<circle cx="190.5" cy="267.3" r="2.25"/>
</g>
<g fill="#f2f2f2">
<circle cx="103.9" cy="211.8" r="2.25"/>
<circle cx="122.4" cy="182.4" r="2.25"/>
<circle cx="102.4" cy="170.2" r="2.25"/>
<circle cx="100.7" cy="131.6" r="2.25"/>
<circle cx="174.1" cy="213.6" r="2.25"/>
<circle cx="98.0" cy="125.7" r="2.25"/>
<circle cx="138.0" cy="150.9" r="2.25"/>
<circle cx="75.2" cy="257.8" r="2.25"/>
<circle cx="143.5" cy="348.2" r="2.25"/>
<circle cx="187.6" cy="352.6" r="2.25"/>
<circle cx="126.7" cy="135.6" r="2.25"/>
<circle cx="123.6" cy="152.8" r="2.25"/>
<circle cx="70.9" cy="222.1" r="2.25"/>
</g>
<g fill="#6ea8fb">
<circle cx="190.2" cy="344.4" r="2.25"/>
<circle cx="126.9" cy="209.0" r="2.25"/>
<circle cx="244.7" cy="215.8" r="2.25"/>
<circle cx="137.2" cy="339.2" r="2.25"/>
<circle cx="151.2" cy="195.1" r="2.25"/>
<circle cx="171.7" cy="131.5" r="2.25"/>
<circle cx="86.7" cy="276.2" r="2.25"/>
<circle cx="198.4" cy="126.6" r="2.25"/>
<circle cx="162.8" cy="125.3" r="2.25"/>
<circle cx="136.3" cy="277.4" r="2.25"/>
</g>
<g fill="#b58252">
<circle cx="190.3" cy="166.9" r="2.25"/>
<circle cx="155.9" cy="156.7" r="2.25"/>
<circle cx="217.9" cy="330.0" r="2.25"/>
<circle cx="239.5" cy="204.4" r="2.25"/>
<circle cx="137.5" cy="248.0" r="2.25"/>
<circle cx="181.3" cy="179.1" r="2.25"/>
<circle cx="131.6" cy="335.9" r="2.25"/>
<circle cx="131.7" cy="250.5" r="2.25"/>
<circle cx="128.7" cy="182.5" r="2.25"/>
<circle cx="189.9" cy="193.4" r="2.25"/>
<circle cx="153.1" cy="219.2" r="2.25"/>
<circle cx="161.4" cy="163.2" r="2.25"/>
<circle cx="170.0" cy="346.1" r="2.25"/>
<circle cx="223.9" cy="227.0" r="2.25"/>
<circle cx="150.2" cy="301.9" r="2.25"/>
<circle cx="206.2" cy="330.5" r="2.25"/>
<circle cx="118.9" cy="279.7" r="2.25"/>
<circle cx="223.4" cy="330.6" r="2.25"/>
<circle cx="98.7" cy="282.1" r="2.25"/>
<circle cx="126.1" cy="250.3" r="2.25"/>
<circle cx="197.8" cy="229.3" r="2.25"/>
<circle cx="160.9" cy="251.4" r="2.25"/>
<circle cx="215.8" cy="117.5" r="2.25"/>
<circle cx="141.4" cy="222.0" r="2.25"/>
<circle cx="116.9" cy="253.1" r="2.25"/>
<circle cx="122.6" cy="177.0" r="2.25"/>
<circle cx="177.2" cy="231.9" r="2.25"/>
<circle cx="183.4" cy="305.9" r="2.25"/>
<circle cx="117.1" cy="244.0" r="2.25"/>
<circle cx="92.4" cy="285.1" r="2.25"/>
<circle cx="111.0" cy="265.1" r="2.25"/>
<circle cx="195.6" cy="191.4" r="2.25"/>
<circle cx="280.4" cy="232.6" r="2.25"/>
<circle cx="96.8" cy="246.1" r="2.25"/>
<circle cx="191.0" cy="170.0" r="2.25"/>
<circle cx="123.9" cy="135.0" r="2.25"/>
<circle cx="142.6" cy="195.1" r="2.25"/>
<circle cx="69.9" cy="257.4" r="2.25"/>
<circle cx="211.5" cy="168.3" r="2.25"/>
<circle cx="159.4" cy="139.4" r="2.25"/>
<circle cx="169.5" cy="184.5" r="2.25"/>
</g>
<g fill="#fde3b5">
<circle cx="207.0" cy="135.4" r="2.25"/>
<circle cx="190.3" cy="256.1" r="2.25"/>
<circle cx="250.5" cy="216.8" r="2.25"/>
<circle cx="136.8" cy="283.5" r="2.25"/>
<circle cx="250.2" cy="240.1" r="2.25"/>
<circle cx="175.1" cy="349.5" r="2.25"/>
<circle cx="186.8" cy="208.4" r="2.25"/>
<circle cx="87.5" cy="237.9" r="2.25"/>
<circle cx="192.9" cy="353.3" r="2.25"/>
<circle cx="219.6" cy="179.6" r="2.25"/>
<circle cx="220.9" cy="162.2" r="2.25"/>
<circle cx="220.6" cy="333.4" r="2.25"/>
<circle cx="240.5" cy="181.2" r="2.25"/>
<circle cx="228.4" cy="100.8" r="2.25"/>
<circle cx="263.1" cy="131.1" r="2.25"/>
<circle cx="89.1" cy="276.2" r="2.25"/>
<circle cx="236.4" cy="127.0" r="2.25"/>
<circle cx="244.4" cy="316.6" r="2.25"/>
<circle cx="240.2" cy="201.3" r="2.25"/>
<circle cx="67.4" cy="221.9" r="2.25"/>
<circle cx="67.8" cy="234.0" r="2.25"/>
</g>
<g fill="#1f55b5">
<circle cx="209.0" cy="330.2" r="2.25"/>
<circle cx="204.5" cy="208.6" r="2.25"/>
<circle cx="177.1" cy="222.7" r="2.25"/>
<circle cx="147.4" cy="224.9" r="2.25"/>
<circle cx="122.4" cy="256.3" r="2.25"/>
<circle cx="235.6" cy="325.5" r="2.25"/>
</g>
<g fill="#1fd6a0">
<circle cx="212.0" cy="152.8" r="2.25"/>
<circle cx="91.3" cy="237.3" r="2.25"/>
<circle cx="207.3" cy="203.1" r="2.25"/>
<circle cx="200.7" cy="312.4" r="2.25"/>
<circle cx="167.2" cy="166.3" r="2.25"/>
<circle cx="243.0" cy="196.0" r="2.25"/>
<circle cx="272.8" cy="190.9" r="2.25"/>
<circle cx="207.4" cy="108.4" r="2.25"/>
<circle cx="197.1" cy="335.3" r="2.25"/>
<circle cx="242.2" cy="210.7" r="2.25"/>
<circle cx="83.7" cy="260.5" r="2.25"/>
<circle cx="254.6" cy="196.0" r="2.25"/>
<circle cx="101.9" cy="341.3" r="2.25"/>
<circle cx="117.3" cy="324.1" r="2.25"/>
<circle cx="259.8" cy="219.7" r="2.25"/>
</g>
<g fill="#969696">
<circle cx="157.4" cy="286.9" r="2.25"/>
<circle cx="132.8" cy="130.0" r="2.25"/>
<circle cx="117.7" cy="137.6" r="2.25"/>
<circle cx="107.8" cy="185.0" r="2.25"/>
<circle cx="125.0" cy="351.3" r="2.25"/>
<circle cx="131.5" cy="82.5" r="2.25"/>
<circle cx="196.3" cy="267.8" r="2.25"/>
</g>
<g fill="#a9cbff">
<circle cx="160.4" cy="94.8" r="2.25"/>
<circle cx="224.4" cy="206.9" r="2.25"/>
<circle cx="208.0" cy="176.9" r="2.25"/>
</g>
<g fill="#f57ef0">
<circle cx="183.6" cy="365.0" r="2.25"/>
<circle cx="159.6" cy="216.6" r="2.25"/>
<circle cx="151.8" cy="363.8" r="2.25"/>
<circle cx="144.3" cy="142.0" r="2.25"/>
<circle cx="251.3" cy="116.2" r="2.25"/>
<circle cx="199.4" cy="164.5" r="2.25"/>
<circle cx="267.3" cy="160.6" r="2.25"/>
</g>
<g fill="#e31a1c">
<circle cx="165.1" cy="228.5" r="2.25"/>
<circle cx="218.3" cy="232.9" r="2.25"/>
<circle cx="218.4" cy="295.3" r="2.25"/>
<circle cx="153.2" cy="225.1" r="2.25"/>
<circle cx="80.7" cy="270.0" r="2.25"/>
<circle cx="185.4" cy="232.3" r="2.25"/>
<circle cx="92.7" cy="276.0" r="2.25"/>
<circle cx="182.4" cy="332.2" r="2.25"/>
<circle cx="269.2" cy="214.4" r="2.25"/>
<circle cx="173.8" cy="237.3" r="2.25"/>
</g>
<g fill="#fb8072">
<circle cx="107.0" cy="208.4" r="2.25"/>
<circle cx="141.5" cy="215.2" r="2.25"/>
<circle cx="125.5" cy="162.0" r="2.25"/>
<circle cx="180.1" cy="317.1" r="2.25"/>
<circle cx="91.1" cy="140.3" r="2.25"/>
<circle cx="250.6" cy="131.3" r="2.25"/>
<circle cx="172.1" cy="361.1" r="2.25"/>
<circle cx="169.3" cy="269.7" r="2.25"/>
<circle cx="176.0" cy="249.3" r="2.25"/>
<circle cx="124.9" cy="180.0" r="2.25"/>
<circle cx="63.1" cy="201.3" r="2.25"/>
<circle cx="98.6" cy="269.9" r="2.25"/>
<circle cx="204.2" cy="131.9" r="2.25"/>
<circle cx="114.2" cy="335.4" r="2.25"/>
<circle cx="210.7" cy="109.1" r="2.25"/>
<circle cx="94.9" cy="296.7" r="2.25"/>
<circle cx="96.2" cy="172.4" r="2.25"/>
<circle cx="85.1" cy="231.8" r="2.25"/>
<circle cx="137.3" cy="262.4" r="2.25"/>
<circle cx="155.7" cy="227.8" r="2.25"/>
<circle cx="157.6" cy="91.9" r="2.25"/>
</g>
<g fill="#f2f2f2">
<circle cx="88.2" cy="231.0" r="2.25"/>
<circle cx="159.1" cy="142.6" r="2.25"/>
<circle cx="158.0" cy="168.9" r="2.25"/>
<circle cx="92.6" cy="184.3" r="2.25"/>
<circle cx="157.9" cy="166.3" r="2.25"/>
<circle cx="241.6" cy="230.8" r="2.25"/>
<circle cx="137.1" cy="112.0" r="2.25"/>
<circle cx="191.2" cy="312.3" r="2.25"/>
<circle cx="126.3" cy="165.1" r="2.25"/>
</g>
<g fill="#6ea8fb">
<circle cx="206.3" cy="317.9" r="2.25"/>
<circle cx="253.7" cy="139.5" r="2.25"/>
<circle cx="92.6" cy="190.8" r="2.25"/>
<circle cx="178.4" cy="110.7" r="2.25"/>
<circle cx="153.7" cy="298.9" r="2.25"/>
<circle cx="187.6" cy="269.9" r="2.25"/>
<circle cx="158.4" cy="86.0" r="2.25"/>
<circle cx="212.9" cy="214.8" r="2.25"/>
<circle cx="145.3" cy="195.2" r="2.25"/>
<circle cx="234.3" cy="351.2" r="2.25"/>
<circle cx="172.9" cy="178.1" r="2.25"/>
<circle cx="127.8" cy="282.6" r="2.25"/>
<circle cx="183.9" cy="278.8" r="2.25"/>
<circle cx="244.5" cy="231.4" r="2.25"/>
<circle cx="273.5" cy="166.9" r="2.25"/>
<circle cx="176.5" cy="325.7" r="2.25"/>
<circle cx="152.3" cy="86.6" r="2.25"/>
<circle cx="239.1" cy="122.1" r="2.25"/>
<circle cx="275.0" cy="196.7" r="2.25"/>
<circle cx="188.6" cy="309.1" r="2.25"/>
<circle cx="82.3" cy="240.5" r="2.25"/>
</g>
<g fill="#b58252">
<circle cx="94.0" cy="228.3" r="2.25"/>
<circle cx="235.6" cy="313.3" r="2.25"/>
<circle cx="201.4" cy="197.4" r="2.25"/>
<circle cx="133.3" cy="200.2" r="2.25"/>
<circle cx="211.4" cy="347.7" r="2.25"/>
<circle cx="133.6" cy="283.1" r="2.25"/>
<circle cx="269.2" cy="196.8" r="2.25"/>
<circle cx="174.1" cy="217.1" r="2.25"/>
<circle cx="191.0" cy="146.6" r="2.25"/>
<circle cx="210.2" cy="129.6" r="2.25"/>
<circle cx="222.9" cy="342.0" r="2.25"/>
<circle cx="155.0" cy="274.9" r="2.25"/>
<circle cx="186.9" cy="99.5" r="2.25"/>
<circle cx="253.4" cy="316.9" r="2.25"/>
<circle cx="170.3" cy="325.4" r="2.25"/>
<circle cx="216.7" cy="186.1" r="2.25"/>
<circle cx="179.1" cy="343.4" r="2.25"/>
<circle cx="133.5" cy="212.1" r="2.25"/>
<circle cx="206.7" cy="223.4" r="2.25"/>
<circle cx="118.2" cy="214.6" r="2.25"/>
<circle cx="200.5" cy="235.6" r="2.25"/>
<circle cx="94.0" cy="302.5" r="2.25"/>
<circle cx="209.9" cy="291.4" r="2.25"/>
<circle cx="126.7" cy="236.1" r="2.25"/>
<circle cx="140.9" cy="328.0" r="2.25"/>
<circle cx="215.7" cy="206.6" r="2.25"/>
<circle cx="164.5" cy="151.1" r="2.25"/>
<circle cx="193.2" cy="258.8" r="2.25"/>
<circle cx="230.6" cy="124.7" r="2.25"/>
<circle cx="212.6" cy="295.1" r="2.25"/>
</g>
<g fill="#fde3b5">
<circle cx="209.3" cy="147.4" r="2.25"/>
<circle cx="204.8" cy="190.9" r="2.25"/>
<circle cx="229.9" cy="236.7" r="2.25"/>
<circle cx="139.9" cy="183.4" r="2.25"/>
<circle cx="254.2" cy="211.2" r="2.25"/>
<circle cx="225.2" cy="203.4" r="2.25"/>
<circle cx="216.3" cy="123.4" r="2.25"/>
<circle cx="277.7" cy="217.6" r="2.25"/>
<circle cx="197.6" cy="315.3" r="2.25"/>
<circle cx="176.8" cy="152.4" r="2.25"/>
<circle cx="235.6" cy="248.0" r="2.25"/>
<circle cx="203.3" cy="329.9" r="2.25"/>
<circle cx="196.9" cy="244.0" r="2.25"/>
<circle cx="277.1" cy="232.2" r="2.25"/>
<circle cx="165.3" cy="128.3" r="2.25"/>
<circle cx="207.5" cy="288.5" r="2.25"/>
<circle cx="156.8" cy="128.1" r="2.25"/>
<circle cx="190.3" cy="276.2" r="2.25"/>
<circle cx="180.7" cy="116.7" r="2.25"/>
<circle cx="147.2" cy="153.8" r="2.25"/>
<circle cx="154.7" cy="363.3" r="2.25"/>
<circle cx="162.2" cy="293.0" r="2.25"/>
<circle cx="142.7" cy="183.4" r="2.25"/>
<circle cx="183.4" cy="137.1" r="2.25"/>
<circle cx="191.8" cy="217.8" r="2.25"/>
<circle cx="145.8" cy="174.2" r="2.25"/>
<circle cx="190.7" cy="338.0" r="2.25"/>
<circle cx="165.0" cy="308.0" r="2.25"/>
<circle cx="183.8" cy="193.9" r="2.25"/>
</g>
<g fill="#1f55b5">
<circle cx="170.1" cy="160.3" r="2.25"/>
<circle cx="213.4" cy="117.9" r="2.25"/>
</g>
<g fill="#1fd6a0">
<circle cx="81.0" cy="196.0" r="2.25"/>
<circle cx="198.7" cy="202.7" r="2.25"/>
<circle cx="271.4" cy="211.7" r="2.25"/>
<circle cx="164.2" cy="346.6" r="2.25"/>
<circle cx="190.0" cy="188.3" r="2.25"/>
<circle cx="222.7" cy="354.5" r="2.25"/>
<circle cx="152.2" cy="169.1" r="2.25"/>
<circle cx="210.3" cy="209.5" r="2.25"/>
<circle cx="137.2" cy="253.8" r="2.25"/>
<circle cx="243.9" cy="181.1" r="2.25"/>
<circle cx="156.6" cy="124.5" r="2.25"/>
<circle cx="270.6" cy="176.1" r="2.25"/>
</g>
<g fill="#969696">
<circle cx="97.1" cy="131.4" r="2.25"/>
<circle cx="235.7" cy="230.2" r="2.25"/>
<circle cx="152.4" cy="89.2" r="2.25"/>
<circle cx="108.0" cy="158.1" r="2.25"/>
<circle cx="147.3" cy="325.1" r="2.25"/>
<circle cx="112.0" cy="306.3" r="2.25"/>
<circle cx="130.7" cy="100.3" r="2.25"/>
<circle cx="126.2" cy="168.2" r="2.25"/>
<circle cx="125.2" cy="93.8" r="2.25"/>
<circle cx="145.5" cy="106.5" r="2.25"/>
</g>
<g fill="#f57ef0">
<circle cx="129.0" cy="239.0" r="2.25"/>
<circle cx="145.9" cy="112.5" r="2.25"/>
<circle cx="251.9" cy="119.4" r="2.25"/>
<circle cx="92.1" cy="131.3" r="2.25"/>
<circle cx="185.9" cy="131.5" r="2.25"/>
<circle cx="113.6" cy="167.3" r="2.25"/>
</g>
<g fill="#e31a1c">
<circle cx="139.6" cy="274.9" r="2.25"/>
<circle cx="183.5" cy="288.4" r="2.25"/>
<circle cx="221.8" cy="288.9" r="2.25"/>
<circle cx="138.2" cy="307.4" r="2.25"/>
</g>
<g fill="#fb8072">
<circle cx="225.7" cy="337.2" r="2.25"/>
<circle cx="90.5" cy="248.8" r="2.25"/>
<circle cx="119.4" cy="194.7" r="2.25"/>
<circle cx="119.8" cy="247.3" r="2.25"/>
<circle cx="92.6" cy="181.3" r="2.25"/>
<circle cx="118.4" cy="135.0" r="2.25"/>
<circle cx="104.9" cy="264.4" r="2.25"/>
<circle cx="91.6" cy="145.9" r="2.25"/>
<circle cx="108.0" cy="350.4" r="2.25"/>
<circle cx="160.1" cy="192.2" r="2.25"/>
<circle cx="140.2" cy="348.2" r="2.25"/>
<circle cx="118.1" cy="318.4" r="2.25"/>
<circle cx="96.7" cy="160.4" r="2.25"/>
<circle cx="187.0" cy="284.8" r="2.25"/>
<circle cx="104.8" cy="167.4" r="2.25"/>
<circle cx="102.3" cy="178.9" r="2.25"/>
<circle cx="101.7" cy="275.8" r="2.25"/>
<circle cx="146.5" cy="91.6" r="2.25"/>
<circle cx="181.4" cy="104.6" r="2.25"/>
<circle cx="114.9" cy="129.6" r="2.25"/>
</g>
<g fill="#f2f2f2">
<circle cx="154.0" cy="124.3" r="2.25"/>
<circle cx="136.9" cy="103.6" r="2.25"/>
<circle cx="95.9" cy="178.2" r="2.25"/>
<circle cx="123.7" cy="144.6" r="2.25"/>
<circle cx="127.3" cy="129.8" r="2.25"/>
<circle cx="146.8" cy="151.4" r="2.25"/>
<circle cx="143.6" cy="162.6" r="2.25"/>
<circle cx="108.4" cy="146.8" r="2.25"/>
<circle cx="117.8" cy="149.6" r="2.25"/>
<circle cx="124.1" cy="141.6" r="2.25"/>
<circle cx="233.1" cy="233.6" r="2.25"/>
<circle cx="96.1" cy="184.8" r="2.25"/>
<circle cx="156.5" cy="311.0" r="2.25"/>
<circle cx="131.7" cy="327.1" r="2.25"/>
<circle cx="100.6" cy="226.0" r="2.25"/>
<circle cx="150.1" cy="142.0" r="2.25"/>
</g>
<g fill="#6ea8fb">
<circle cx="230.8" cy="195.2" r="2.25"/>
<circle cx="145.5" cy="204.3" r="2.25"/>
<circle cx="254.5" cy="202.3" r="2.25"/>
<circle cx="100.8" cy="282.5" r="2.25"/>
<circle cx="140.6" cy="324.6" r="2.25"/>
<circle cx="165.4" cy="293.4" r="2.25"/>
<circle cx="138.5" cy="145.0" r="2.25"/>
<circle cx="200.2" cy="155.6" r="2.25"/>
<circle cx="238.4" cy="251.7" r="2.25"/>
<circle cx="74.0" cy="283.9" r="2.25"/>
<circle cx="98.0" cy="285.4" r="2.25"/>
<circle cx="200.5" cy="238.4" r="2.25"/>
<circle cx="132.5" cy="156.4" r="2.25"/>
<circle cx="165.2" cy="137.0" r="2.25"/>
<circle cx="170.3" cy="148.4" r="2.25"/>
<circle cx="280.2" cy="234.8" r="2.25"/>
<circle cx="150.5" cy="295.7" r="2.25"/>
<circle cx="155.1" cy="83.6" r="2.25"/>
<circle cx="200.3" cy="244.1" r="2.25"/>
<circle cx="196.1" cy="270.4" r="2.25"/>
<circle cx="168.9" cy="299.5" r="2.25"/>
</g>
<g fill="#b58252">
<circle cx="119.2" cy="362.7" r="2.25"/>
<circle cx="157.9" cy="177.5" r="2.25"/>
<circle cx="237.9" cy="328.0" r="2.25"/>
<circle cx="206.5" cy="229.4" r="2.25"/>
<circle cx="127.0" cy="126.2" r="2.25"/>
<circle cx="268.8" cy="131.9" r="2.25"/>
<circle cx="173.4" cy="320.0" r="2.25"/>
<circle cx="140.2" cy="254.4" r="2.25"/>
<circle cx="124.7" cy="191.9" r="2.25"/>
<circle cx="140.1" cy="176.8" r="2.25"/>
<circle cx="167.0" cy="252.0" r="2.25"/>
<circle cx="163.6" cy="269.4" r="2.25"/>
<circle cx="121.8" cy="203.0" r="2.25"/>
<circle cx="93.4" cy="252.3" r="2.25"/>
<circle cx="251.5" cy="125.5" r="2.25"/>
<circle cx="196.0" cy="353.7" r="2.25"/>
<circle cx="187.1" cy="276.1" r="2.25"/>
<circle cx="175.4" cy="266.6" r="2.25"/>
<circle cx="91.0" cy="226.0" r="2.25"/>
<circle cx="242.6" cy="201.3" r="2.25"/>
<circle cx="104.9" cy="329.1" r="2.25"/>
<circle cx="149.5" cy="254.4" r="2.25"/>
<circle cx="214.8" cy="229.6" r="2.25"/>
<circle cx="110.7" cy="267.7" r="2.25"/>
<circle cx="216.0" cy="277.6" r="2.25"/>
<circle cx="115.1" cy="294.5" r="2.25"/>
<circle cx="147.4" cy="318.9" r="2.25"/>
<circle cx="171.0" cy="152.0" r="2.25"/>
<circle cx="149.0" cy="180.3" r="2.25"/>
<circle cx="192.2" cy="134.7" r="2.25"/>
<circle cx="130.5" cy="105.6" r="2.25"/>
<circle cx="152.5" cy="171.6" r="2.25"/>
<circle cx="222.6" cy="103.8" r="2.25"/>
<circle cx="152.2" cy="257.2" r="2.25"/>
<circle cx="170.1" cy="166.7" r="2.25"/>
</g>
<g fill="#fde3b5">
<circle cx="196.2" cy="356.3" r="2.25"/>
<circle cx="143.6" cy="74.3" r="2.25"/>
<circle cx="176.4" cy="332.4" r="2.25"/>
<circle cx="133.4" cy="274.2" r="2.25"/>
<circle cx="160.3" cy="98.5" r="2.25"/>
<circle cx="77.1" cy="222.3" r="2.25"/>
<circle cx="79.8" cy="230.7" r="2.25"/>
<circle cx="215.9" cy="218.5" r="2.25"/>
<circle cx="242.9" cy="104.1" r="2.25"/>
<circle cx="234.2" cy="118.9" r="2.25"/>
<circle cx="259.7" cy="148.5" r="2.25"/>
<circle cx="218.8" cy="118.2" r="2.25"/>
<circle cx="151.5" cy="204.2" r="2.25"/>
<circle cx="152.8" cy="82.8" r="2.25"/>
<circle cx="253.5" cy="220.0" r="2.25"/>
<circle cx="173.5" cy="326.1" r="2.25"/>
<circle cx="214.7" cy="250.5" r="2.25"/>
<circle cx="154.4" cy="187.0" r="2.25"/>
<circle cx="70.8" cy="225.3" r="2.25"/>
<circle cx="151.4" cy="360.6" r="2.25"/>
<circle cx="156.2" cy="151.6" r="2.25"/>
</g>
<g fill="#1f55b5">
<circle cx="81.6" cy="248.6" r="2.25"/>
<circle cx="222.8" cy="182.9" r="2.25"/>
<circle cx="240.9" cy="162.8" r="2.25"/>
<circle cx="212.0" cy="221.0" r="2.25"/>
<circle cx="199.2" cy="170.7" r="2.25"/>
<circle cx="242.8" cy="189.5" r="2.25"/>
<circle cx="178.4" cy="193.7" r="2.25"/>
</g>
<g fill="#7b4a12">
<circle cx="158.9" cy="136.5" r="2.25"/>
<circle cx="243.1" cy="115.9" r="2.25"/>
<circle cx="247.7" cy="154.3" r="2.25"/>
</g>
<g fill="#1fd6a0">
<circle cx="224.1" cy="221.2" r="2.25"/>
<circle cx="77.0" cy="210.2" r="2.25"/>
<circle cx="236.8" cy="203.7" r="2.25"/>
<circle cx="149.4" cy="334.2" r="2.25"/>
<circle cx="119.4" cy="176.4" r="2.25"/>
<circle cx="186.5" cy="202.1" r="2.25"/>
<circle cx="191.1" cy="151.9" r="2.25"/>
<circle cx="171.1" cy="320.1" r="2.25"/>
<circle cx="199.6" cy="181.9" r="2.25"/>
<circle cx="156.5" cy="130.1" r="2.25"/>
<circle cx="246.4" cy="92.2" r="2.25"/>
<circle cx="249.6" cy="181.3" r="2.25"/>
<circle cx="204.6" cy="362.1" r="2.25"/>
<circle cx="234.1" cy="354.8" r="2.25"/>
<circle cx="273.1" cy="178.7" r="2.25"/>
<circle cx="168.7" cy="198.6" r="2.25"/>
<circle cx="231.3" cy="348.6" r="2.25"/>
<circle cx="89.5" cy="187.5" r="2.25"/>
</g>
<g fill="#969696">
<circle cx="128.3" cy="94.1" r="2.25"/>
<circle cx="112.2" cy="143.8" r="2.25"/>
<circle cx="109.3" cy="229.3" r="2.25"/>
<circle cx="98.9" cy="179.0" r="2.25"/>
<circle cx="165.8" cy="115.9" r="2.25"/>
<circle cx="140.8" cy="82.5" r="2.25"/>
</g>
<g fill="#a9cbff">
<circle cx="142.0" cy="138.7" r="2.25"/>
<circle cx="112.3" cy="226.2" r="2.25"/>
</g>
<g fill="#f57ef0">
<circle cx="165.3" cy="219.5" r="2.25"/>
<circle cx="167.6" cy="237.2" r="2.25"/>
<circle cx="153.1" cy="327.8" r="2.25"/>
<circle cx="64.5" cy="239.3" r="2.25"/>
</g>
<g fill="#e31a1c">
<circle cx="87.8" cy="249.5" r="2.25"/>
<circle cx="274.4" cy="214.1" r="2.25"/>
<circle cx="151.8" cy="274.8" r="2.25"/>
<circle cx="257.4" cy="116.2" r="2.25"/>
<circle cx="147.6" cy="316.0" r="2.25"/>
<circle cx="126.2" cy="241.5" r="2.25"/>
<circle cx="177.6" cy="276.0" r="2.25"/>
<circle cx="138.4" cy="309.7" r="2.25"/>
<circle cx="181.4" cy="347.3" r="2.25"/>
<circle cx="110.9" cy="353.5" r="2.25"/>
<circle cx="74.0" cy="290.4" r="2.25"/>
</g>
<g fill="#fb8072">
<circle cx="93.0" cy="169.5" r="2.25"/>
<circle cx="148.7" cy="201.1" r="2.25"/>
<circle cx="119.9" cy="342.0" r="2.25"/>
<circle cx="100.2" cy="228.6" r="2.25"/>
<circle cx="192.9" cy="191.0" r="2.25"/>
<circle cx="109.6" cy="214.3" r="2.25"/>
<circle cx="97.9" cy="204.8" r="2.25"/>
<circle cx="112.5" cy="217.5" r="2.25"/>
<circle cx="89.7" cy="264.4" r="2.25"/>
<circle cx="71.2" cy="210.0" r="2.25"/>
<circle cx="174.4" cy="293.3" r="2.25"/>
<circle cx="74.9" cy="272.2" r="2.25"/>
<circle cx="191.4" cy="306.1" r="2.25"/>
<circle cx="94.5" cy="211.0" r="2.25"/>
<circle cx="197.7" cy="303.4" r="2.25"/>
<circle cx="157.8" cy="352.4" r="2.25"/>
<circle cx="131.0" cy="265.4" r="2.25"/>
<circle cx="240.3" cy="113.0" r="2.25"/>
</g>
<g fill="#f2f2f2">
<circle cx="103.8" cy="122.6" r="2.25"/>
<circle cx="250.2" cy="313.5" r="2.25"/>
<circle cx="102.0" cy="173.3" r="2.25"/>
<circle cx="100.5" cy="202.4" r="2.25"/>
</g>
<g fill="#6ea8fb">
<circle cx="194.2" cy="140.4" r="2.25"/>
<circle cx="73.5" cy="222.2" r="2.25"/>
<circle cx="250.5" cy="234.1" r="2.25"/>
<circle cx="75.5" cy="242.7" r="2.25"/>
<circle cx="108.4" cy="323.4" r="2.25"/>
<circle cx="237.0" cy="106.9" r="2.25"/>
<circle cx="177.1" cy="293.5" r="2.25"/>
<circle cx="226.1" cy="325.2" r="2.25"/>
<circle cx="184.1" cy="362.1" r="2.25"/>
<circle cx="135.3" cy="245.1" r="2.25"/>
<circle cx="76.3" cy="237.0" r="2.25"/>
<circle cx="139.0" cy="132.8" r="2.25"/>
<circle cx="210.9" cy="106.1" r="2.25"/>
<circle cx="214.6" cy="156.6" r="2.25"/>
<circle cx="207.3" cy="286.1" r="2.25"/>
<circle cx="203.5" cy="306.8" r="2.25"/>
<circle cx="134.8" cy="253.5" r="2.25"/>
</g>
<g fill="#b58252">
<circle cx="129.4" cy="327.4" r="2.25"/>
<circle cx="150.6" cy="224.5" r="2.25"/>
<circle cx="245.2" cy="127.7" r="2.25"/>
<circle cx="125.9" cy="170.4" r="2.25"/>
<circle cx="209.7" cy="206.0" r="2.25"/>
<circle cx="240.2" cy="95.6" r="2.25"/>
<circle cx="153.3" cy="127.7" r="2.25"/>
<circle cx="168.9" cy="208.0" r="2.25"/>
<circle cx="200.0" cy="152.3" r="2.25"/>
<circle cx="222.0" cy="188.8" r="2.25"/>
<circle cx="253.6" cy="231.7" r="2.25"/>
<circle cx="220.9" cy="235.8" r="2.25"/>
<circle cx="197.2" cy="155.5" r="2.25"/>
<circle cx="208.0" cy="357.1" r="2.25"/>
<circle cx="195.1" cy="138.0" r="2.25"/>
<circle cx="146.9" cy="328.3" r="2.25"/>
<circle cx="188.9" cy="140.7" r="2.25"/>
<circle cx="76.2" cy="245.4" r="2.25"/>
<circle cx="211.9" cy="236.0" r="2.25"/>
<circle cx="208.1" cy="171.0" r="2.25"/>
<circle cx="153.0" cy="236.6" r="2.25"/>
<circle cx="188.2" cy="335.5" r="2.25"/>
<circle cx="211.1" cy="262.3" r="2.25"/>
<circle cx="235.3" cy="334.0" r="2.25"/>
<circle cx="176.9" cy="323.5" r="2.25"/>
<circle cx="211.9" cy="150.5" r="2.25"/>
<circle cx="61.5" cy="230.4" r="2.25"/>
<circle cx="198.9" cy="196.5" r="2.25"/>
<circle cx="211.5" cy="339.5" r="2.25"/>
<circle cx="228.2" cy="189.6" r="2.25"/>
<circle cx="217.3" cy="168.5" r="2.25"/>
<circle cx="172.7" cy="267.0" r="2.25"/>
<circle cx="198.8" cy="353.2" r="2.25"/>
<circle cx="91.4" cy="302.6" r="2.25"/>
<circle cx="172.9" cy="157.7" r="2.25"/>
<circle cx="156.6" cy="295.7" r="2.25"/>
<circle cx="96.0" cy="264.4" r="2.25"/>
<circle cx="147.4" cy="127.0" r="2.25"/>
<circle cx="200.9" cy="303.5" r="2.25"/>
<circle cx="235.8" cy="310.1" r="2.25"/>
<circle cx="206.8" cy="220.4" r="2.25"/>
<circle cx="228.7" cy="348.6" r="2.25"/>
<circle cx="222.1" cy="286.5" r="2.25"/>
<circle cx="181.2" cy="284.5" r="2.25"/>
</g>
<g fill="#fde3b5">
<circle cx="236.4" cy="133.8" r="2.25"/>
<circle cx="97.3" cy="237.9" r="2.25"/>
<circle cx="238.7" cy="224.9" r="2.25"/>
<circle cx="259.3" cy="234.7" r="2.25"/>
<circle cx="177.4" cy="205.2" r="2.25"/>
<circle cx="220.2" cy="254.1" r="2.25"/>
<circle cx="172.6" cy="104.8" r="2.25"/>
<circle cx="158.1" cy="101.5" r="2.25"/>
<circle cx="83.1" cy="210.5" r="2.25"/>
<circle cx="242.7" cy="207.6" r="2.25"/>
<circle cx="174.9" cy="107.7" r="2.25"/>
<circle cx="236.5" cy="224.6" r="2.25"/>
<circle cx="99.4" cy="235.2" r="2.25"/>
<circle cx="238.1" cy="334.0" r="2.25"/>
<circle cx="233.3" cy="221.5" r="2.25"/>
<circle cx="152.2" cy="74.8" r="2.25"/>
<circle cx="170.2" cy="322.6" r="2.25"/>
<circle cx="265.1" cy="157.8" r="2.25"/>
<circle cx="205.3" cy="327.6" r="2.25"/>
<circle cx="162.4" cy="313.4" r="2.25"/>
</g>
<g fill="#1f55b5">
<circle cx="249.9" cy="320.1" r="2.25"/>
<circle cx="241.9" cy="319.7" r="2.25"/>
<circle cx="285.9" cy="223.9" r="2.25"/>
<circle cx="155.9" cy="222.5" r="2.25"/>
<circle cx="225.6" cy="348.1" r="2.25"/>
<circle cx="143.3" cy="253.8" r="2.25"/>
<circle cx="201.7" cy="200.2" r="2.25"/>
</g>
<g fill="#7b4a12">
<circle cx="178.3" cy="178.5" r="2.25"/>
<circle cx="244.6" cy="151.2" r="2.25"/>
<circle cx="203.7" cy="214.6" r="2.25"/>
</g>
<g fill="#1fd6a0">
<circle cx="166.0" cy="296.0" r="2.25"/>
<circle cx="159.2" cy="145.6" r="2.25"/>
<circle cx="210.0" cy="135.5" r="2.25"/>
<circle cx="229.5" cy="251.0" r="2.25"/>
<circle cx="247.6" cy="227.9" r="2.25"/>
<circle cx="201.0" cy="117.7" r="2.25"/>
<circle cx="274.7" cy="217.4" r="2.25"/>
<circle cx="141.8" cy="218.3" r="2.25"/>
<circle cx="173.7" cy="222.6" r="2.25"/>
</g>
<g fill="#969696">
<circle cx="136.6" cy="123.8" r="2.25"/>
<circle cx="153.4" cy="295.6" r="2.25"/>
</g>
<g fill="#a9cbff">
<circle cx="177.0" cy="317.4" r="2.25"/>
<circle cx="104.3" cy="347.3" r="2.25"/>
</g>
<g fill="#f57ef0">
<circle cx="156.4" cy="319.8" r="2.25"/>
<circle cx="208.1" cy="173.7" r="2.25"/>
<circle cx="180.2" cy="119.5" r="2.25"/>
<circle cx="90.9" cy="163.8" r="2.25"/>
<circle cx="248.5" cy="121.6" r="2.25"/>
<circle cx="226.2" cy="339.7" r="2.25"/>
</g>
<g fill="#e31a1c">
<circle cx="168.3" cy="231.1" r="2.25"/>
<circle cx="209.0" cy="323.9" r="2.25"/>
<circle cx="165.2" cy="311.0" r="2.25"/>
<circle cx="206.6" cy="217.8" r="2.25"/>
<circle cx="147.9" cy="304.3" r="2.25"/>
<circle cx="157.3" cy="278.5" r="2.25"/>
<circle cx="92.4" cy="270.4" r="2.25"/>
<circle cx="165.2" cy="320.1" r="2.25"/>
<circle cx="198.0" cy="285.8" r="2.25"/>
<circle cx="151.2" cy="357.8" r="2.25"/>
</g>
<g fill="#fb8072">
<circle cx="221.3" cy="309.7" r="2.25"/>
<circle cx="152.0" cy="183.2" r="2.25"/>
<circle cx="107.7" cy="167.7" r="2.25"/>
<circle cx="72.5" cy="245.7" r="2.25"/>
<circle cx="83.8" cy="201.4" r="2.25"/>
<circle cx="124.7" cy="188.6" r="2.25"/>
<circle cx="110.4" cy="190.7" r="2.25"/>
<circle cx="240.5" cy="107.3" r="2.25"/>
<circle cx="147.9" cy="222.1" r="2.25"/>
<circle cx="108.3" cy="329.2" r="2.25"/>
<circle cx="93.9" cy="151.6" r="2.25"/>
<circle cx="116.4" cy="185.3" r="2.25"/>
<circle cx="184.9" cy="349.9" r="2.25"/>
<circle cx="74.4" cy="278.3" r="2.25"/>
<circle cx="83.3" cy="198.7" r="2.25"/>
<circle cx="174.7" cy="196.1" r="2.25"/>
<circle cx="85.3" cy="234.3" r="2.25"/>
<circle cx="65.0" cy="207.4" r="2.25"/>
<circle cx="111.3" cy="172.8" r="2.25"/>
<circle cx="148.8" cy="354.8" r="2.25"/>
<circle cx="91.8" cy="128.7" r="2.25"/>
<circle cx="126.2" cy="153.1" r="2.25"/>
<circle cx="115.9" cy="285.5" r="2.25"/>
<circle cx="117.1" cy="158.7" r="2.25"/>
</g>
<g fill="#f2f2f2">
<circle cx="78.2" cy="266.3" r="2.25"/>
<circle cx="125.7" cy="156.5" r="2.25"/>
<circle cx="101.9" cy="182.0" r="2.25"/>
<circle cx="88.8" cy="137.2" r="2.25"/>
<circle cx="121.3" cy="132.6" r="2.25"/>
<circle cx="121.8" cy="276.5" r="2.25"/>
</g>
<g fill="#6ea8fb">
<circle cx="101.6" cy="350.1" r="2.25"/>
<circle cx="120.7" cy="144.0" r="2.25"/>
<circle cx="180.9" cy="276.1" r="2.25"/>
<circle cx="211.8" cy="332.8" r="2.25"/>
<circle cx="135.0" cy="85.2" r="2.25"/>
<circle cx="250.0" cy="168.8" r="2.25"/>
<circle cx="165.0" cy="231.1" r="2.25"/>
<circle cx="177.6" cy="290.4" r="2.25"/>
<circle cx="135.1" cy="162.1" r="2.25"/>
<circle cx="193.8" cy="176.3" r="2.25"/>
<circle cx="128.1" cy="256.3" r="2.25"/>
<circle cx="171.7" cy="128.4" r="2.25"/>
<circle cx="218.5" cy="306.8" r="2.25"/>
<circle cx="199.9" cy="314.9" r="2.25"/>
<circle cx="253.6" cy="225.8" r="2.25"/>
<circle cx="245.2" cy="225.4" r="2.25"/>
<circle cx="141.5" cy="301.7" r="2.25"/>
<circle cx="223.7" cy="141.6" r="2.25"/>
<circle cx="235.3" cy="245.9" r="2.25"/>
</g>
<g fill="#b58252">
<circle cx="156.3" cy="136.0" r="2.25"/>
<circle cx="202.2" cy="333.1" r="2.25"/>
<circle cx="147.7" cy="227.8" r="2.25"/>
<circle cx="110.8" cy="252.9" r="2.25"/>
<circle cx="142.8" cy="274.8" r="2.25"/>
<circle cx="218.3" cy="301.1" r="2.25"/>
<circle cx="125.9" cy="253.2" r="2.25"/>
<circle cx="223.4" cy="233.3" r="2.25"/>
<circle cx="209.7" cy="214.9" r="2.25"/>
<circle cx="136.8" cy="274.4" r="2.25"/>
<circle cx="253.1" cy="234.5" r="2.25"/>
<circle cx="268.0" cy="225.9" r="2.25"/>
<circle cx="225.0" cy="118.0" r="2.25"/>
<circle cx="95.8" cy="270.0" r="2.25"/>
<circle cx="190.1" cy="279.1" r="2.25"/>
<circle cx="124.7" cy="283.2" r="2.25"/>
<circle cx="194.0" cy="246.5" r="2.25"/>
<circle cx="165.8" cy="201.7" r="2.25"/>
<circle cx="241.6" cy="234.2" r="2.25"/>
<circle cx="195.2" cy="126.2" r="2.25"/>
<circle cx="160.7" cy="345.8" r="2.25"/>
<circle cx="201.8" cy="108.1" r="2.25"/>
<circle cx="185.4" cy="320.3" r="2.25"/>
<circle cx="164.8" cy="222.4" r="2.25"/>
<circle cx="168.1" cy="219.4" r="2.25"/>
<circle cx="118.1" cy="299.9" r="2.25"/>
<circle cx="197.9" cy="220.6" r="2.25"/>
<circle cx="149.6" cy="82.7" r="2.25"/>
<circle cx="131.5" cy="256.9" r="2.25"/>
<circle cx="153.4" cy="145.3" r="2.25"/>
<circle cx="80.1" cy="213.3" r="2.25"/>
<circle cx="90.8" cy="228.6" r="2.25"/>
<circle cx="241.1" cy="168.8" r="2.25"/>
<circle cx="147.5" cy="298.8" r="2.25"/>
<circle cx="163.4" cy="352.3" r="2.25"/>
<circle cx="162.8" cy="198.6" r="2.25"/>
<circle cx="178.9" cy="172.8" r="2.25"/>
<circle cx="168.9" cy="204.9" r="2.25"/>
</g>
<g fill="#fde3b5">
<circle cx="243.2" cy="107.1" r="2.25"/>
<circle cx="142.5" cy="206.8" r="2.25"/>
<circle cx="189.6" cy="196.7" r="2.25"/>
<circle cx="250.0" cy="242.7" r="2.25"/>
<circle cx="182.7" cy="243.7" r="2.25"/>
<circle cx="70.5" cy="218.9" r="2.25"/>
<circle cx="190.1" cy="361.8" r="2.25"/>
<circle cx="211.5" cy="256.1" r="2.25"/>
<circle cx="215.4" cy="126.5" r="2.25"/>
<circle cx="197.0" cy="323.5" r="2.25"/>
<circle cx="153.6" cy="302.0" r="2.25"/>
<circle cx="79.3" cy="239.8" r="2.25"/>
<circle cx="226.7" cy="162.6" r="2.25"/>
<circle cx="191.6" cy="140.9" r="2.25"/>
<circle cx="215.8" cy="307.3" r="2.25"/>
<circle cx="280.9" cy="217.5" r="2.25"/>
</g>
<g fill="#1f55b5">
<circle cx="140.9" cy="245.6" r="2.25"/>
<circle cx="190.0" cy="176.2" r="2.25"/>
<circle cx="202.5" cy="156.2" r="2.25"/>
</g>
<g fill="#7b4a12">
<circle cx="139.5" cy="209.5" r="2.25"/>
</g>
<g fill="#1fd6a0">
<circle cx="169.0" cy="121.9" r="2.25"/>
<circle cx="170.0" cy="158.1" r="2.25"/>
<circle cx="129.2" cy="254.0" r="2.25"/>
<circle cx="74.7" cy="275.6" r="2.25"/>
<circle cx="182.2" cy="338.1" r="2.25"/>
<circle cx="261.7" cy="172.3" r="2.25"/>
<circle cx="219.5" cy="203.1" r="2.25"/>
<circle cx="218.9" cy="197.5" r="2.25"/>
<circle cx="91.6" cy="211.4" r="2.25"/>
<circle cx="191.5" cy="137.8" r="2.25"/>
<circle cx="175.4" cy="279.3" r="2.25"/>
<circle cx="86.7" cy="196.2" r="2.25"/>
<circle cx="133.9" cy="102.9" r="2.25"/>
<circle cx="243.9" cy="92.8" r="2.25"/>
</g>
<g fill="#969696">
<circle cx="228.9" cy="245.4" r="2.25"/>
<circle cx="203.3" cy="221.1" r="2.25"/>
<circle cx="103.2" cy="143.1" r="2.25"/>
<circle cx="133.5" cy="121.3" r="2.25"/>
</g>
<g fill="#a9cbff">
<circle cx="88.5" cy="225.4" r="2.25"/>
</g>
<g fill="#f57ef0">
<circle cx="163.0" cy="116.1" r="2.25"/>
<circle cx="139.2" cy="218.7" r="2.25"/>
<circle cx="118.6" cy="203.3" r="2.25"/>
</g>
<g fill="#e31a1c">
<circle cx="190.3" cy="261.4" r="2.25"/>
<circle cx="156.9" cy="204.5" r="2.25"/>
<circle cx="114.1" cy="344.7" r="2.25"/>
<circle cx="187.9" cy="246.6" r="2.25"/>
<circle cx="102.2" cy="338.5" r="2.25"/>
<circle cx="111.2" cy="344.3" r="2.25"/>
<circle cx="177.0" cy="314.5" r="2.25"/>
<circle cx="113.3" cy="262.0" r="2.25"/>
<circle cx="165.5" cy="207.2" r="2.25"/>
<circle cx="176.6" cy="329.0" r="2.25"/>
<circle cx="254.2" cy="213.9" r="2.25"/>
<circle cx="168.9" cy="272.6" r="2.25"/>
<circle cx="182.8" cy="223.0" r="2.25"/>
</g>
<g fill="#fb8072">
<circle cx="179.8" cy="323.3" r="2.25"/>
<circle cx="125.3" cy="339.4" r="2.25"/>
<circle cx="260.6" cy="110.2" r="2.25"/>
<circle cx="200.7" cy="300.6" r="2.25"/>
<circle cx="168.7" cy="201.6" r="2.25"/>
<circle cx="200.7" cy="291.3" r="2.25"/>
<circle cx="167.4" cy="157.2" r="2.25"/>
<circle cx="262.0" cy="149.1" r="2.25"/>
<circle cx="157.8" cy="355.3" r="2.25"/>
<circle cx="130.2" cy="138.9" r="2.25"/>
<circle cx="116.9" cy="178.9" r="2.25"/>
<circle cx="109.9" cy="208.5" r="2.25"/>
<circle cx="132.8" cy="224.4" r="2.25"/>
<circle cx="174.0" cy="302.8" r="2.25"/>
<circle cx="162.4" cy="221.8" r="2.25"/>
<circle cx="218.2" cy="236.5" r="2.25"/>
<circle cx="130.5" cy="129.5" r="2.25"/>
<circle cx="150.6" cy="218.6" r="2.25"/>
</g>
<g fill="#f2f2f2">
<circle cx="150.2" cy="136.1" r="2.25"/>
<circle cx="195.7" cy="114.0" r="2.25"/>
<circle cx="119.3" cy="191.3" r="2.25"/>
<circle cx="138.9" cy="130.1" r="2.25"/>
<circle cx="191.3" cy="149.0" r="2.25"/>
<circle cx="197.0" cy="330.1" r="2.25"/>
<circle cx="132.4" cy="149.9" r="2.25"/>
<circle cx="148.2" cy="118.2" r="2.25"/>
<circle cx="205.7" cy="244.5" r="2.25"/>
<circle cx="150.1" cy="139.6" r="2.25"/>
<circle cx="128.2" cy="103.2" r="2.25"/>
<circle cx="92.0" cy="216.6" r="2.25"/>
<circle cx="107.5" cy="175.8" r="2.25"/>
<circle cx="168.7" cy="284.9" r="2.25"/>
<circle cx="126.9" cy="132.1" r="2.25"/>
<circle cx="171.0" cy="222.4" r="2.25"/>
<circle cx="98.4" cy="184.9" r="2.25"/>
<circle cx="106.2" cy="146.5" r="2.25"/>
<circle cx="144.8" cy="224.4" r="2.25"/>
<circle cx="145.6" cy="109.6" r="2.25"/>
</g>
<g fill="#6ea8fb">
<circle cx="111.7" cy="238.5" r="2.25"/>
<circle cx="143.7" cy="159.8" r="2.25"/>
<circle cx="171.5" cy="122.6" r="2.25"/>
<circle cx="178.2" cy="175.4" r="2.25"/>
<circle cx="169.1" cy="113.5" r="2.25"/>
<circle cx="130.8" cy="356.7" r="2.25"/>
<circle cx="93.0" cy="175.9" r="2.25"/>
<circle cx="157.7" cy="180.4" r="2.25"/>
<circle cx="239.0" cy="212.8" r="2.25"/>
<circle cx="187.7" cy="157.9" r="2.25"/>
<circle cx="207.9" cy="253.3" r="2.25"/>
<circle cx="149.2" cy="80.4" r="2.25"/>
<circle cx="209.3" cy="138.1" r="2.25"/>
<circle cx="167.3" cy="240.6" r="2.25"/>
<circle cx="216.6" cy="353.6" r="2.25"/>
<circle cx="207.7" cy="347.5" r="2.25"/>
</g>
<g fill="#b58252">
<circle cx="222.8" cy="105.8" r="2.25"/>
<circle cx="177.1" cy="299.9" r="2.25"/>
<circle cx="183.8" cy="273.6" r="2.25"/>
<circle cx="173.7" cy="219.3" r="2.25"/>
<circle cx="91.8" cy="287.6" r="2.25"/>
<circle cx="179.9" cy="219.7" r="2.25"/>
<circle cx="153.2" cy="242.9" r="2.25"/>
<circle cx="148.0" cy="280.7" r="2.25"/>
<circle cx="266.2" cy="193.6" r="2.25"/>
<circle cx="188.3" cy="164.5" r="2.25"/>
<circle cx="97.0" cy="234.9" r="2.25"/>
<circle cx="160.9" cy="177.7" r="2.25"/>
<circle cx="115.7" cy="206.3" r="2.25"/>
<circle cx="259.7" cy="213.8" r="2.25"/>
<circle cx="100.6" cy="287.7" r="2.25"/>
<circle cx="159.9" cy="278.1" r="2.25"/>
<circle cx="214.8" cy="167.8" r="2.25"/>
<circle cx="183.3" cy="208.3" r="2.25"/>
<circle cx="144.5" cy="238.9" r="2.25"/>
<circle cx="234.5" cy="101.2" r="2.25"/>
<circle cx="107.2" cy="193.4" r="2.25"/>
<circle cx="126.7" cy="238.7" r="2.25"/>
<circle cx="159.0" cy="316.8" r="2.25"/>
<circle cx="253.1" cy="319.5" r="2.25"/>
<circle cx="143.9" cy="324.6" r="2.25"/>
<circle cx="132.3" cy="232.9" r="2.25"/>
<circle cx="152.5" cy="337.5" r="2.25"/>
</g>
<g fill="#fde3b5">
<circle cx="88.2" cy="240.6" r="2.25"/>
<circle cx="143.9" cy="156.9" r="2.25"/>
<circle cx="164.2" cy="322.4" r="2.25"/>
<circle cx="227.7" cy="112.1" r="2.25"/>
<circle cx="160.7" cy="361.0" r="2.25"/>
<circle cx="234.4" cy="109.3" r="2.25"/>
<circle cx="114.1" cy="247.5" r="2.25"/>
<circle cx="215.6" cy="295.0" r="2.25"/>
<circle cx="149.1" cy="339.4" r="2.25"/>
<circle cx="262.5" cy="137.2" r="2.25"/>
<circle cx="230.9" cy="110.0" r="2.25"/>
<circle cx="122.3" cy="359.3" r="2.25"/>
</g>
<g fill="#1f55b5">
<circle cx="217.9" cy="312.5" r="2.25"/>
<circle cx="160.6" cy="281.5" r="2.25"/>
<circle cx="200.1" cy="143.9" r="2.25"/>
</g>
<g fill="#7b4a12">
<circle cx="157.2" cy="104.1" r="2.25"/>
<circle cx="263.0" cy="113.8" r="2.25"/>
<circle cx="191.0" cy="317.8" r="2.25"/>
</g>
<g fill="#1fd6a0">
<circle cx="111.8" cy="329.5" r="2.25"/>
<circle cx="185.9" cy="134.1" r="2.25"/>
<circle cx="232.5" cy="328.3" r="2.25"/>
<circle cx="152.5" cy="346.3" r="2.25"/>
<circle cx="160.6" cy="343.2" r="2.25"/>
<circle cx="145.9" cy="171.1" r="2.25"/>
<circle cx="86.7" cy="193.2" r="2.25"/>
<circle cx="102.2" cy="155.6" r="2.25"/>
<circle cx="237.2" cy="104.3" r="2.25"/>
<circle cx="97.6" cy="294.0" r="2.25"/>
<circle cx="212.9" cy="300.8" r="2.25"/>
<circle cx="140.1" cy="260.2" r="2.25"/>
<circle cx="152.5" cy="165.4" r="2.25"/>
<circle cx="102.2" cy="344.0" r="2.25"/>
<circle cx="131.6" cy="176.5" r="2.25"/>
<circle cx="233.8" cy="106.7" r="2.25"/>
<circle cx="237.3" cy="98.1" r="2.25"/>
</g>
<g fill="#969696">
<circle cx="114.7" cy="158.4" r="2.25"/>
<circle cx="91.3" cy="154.4" r="2.25"/>
<circle cx="149.3" cy="174.1" r="2.25"/>
<circle cx="116.1" cy="188.3" r="2.25"/>
<circle cx="67.7" cy="224.6" r="2.25"/>
<circle cx="99.7" cy="143.8" r="2.25"/>
</g>
<g fill="#a9cbff">
<circle cx="205.4" cy="250.5" r="2.25"/>
<circle cx="219.7" cy="97.7" r="2.25"/>
</g>
<g fill="#f57ef0">
<circle cx="147.5" cy="142.5" r="2.25"/>
<circle cx="148.3" cy="115.9" r="2.25"/>
<circle cx="131.1" cy="262.2" r="2.25"/>
<circle cx="142.9" cy="339.4" r="2.25"/>
<circle cx="103.2" cy="294.1" r="2.25"/>
<circle cx="144.6" cy="135.6" r="2.25"/>
<circle cx="117.3" cy="143.5" r="2.25"/>
</g>
<g fill="#e31a1c">
<circle cx="179.8" cy="300.0" r="2.25"/>
<circle cx="150.1" cy="231.1" r="2.25"/>
<circle cx="176.1" cy="320.5" r="2.25"/>
<circle cx="198.4" cy="120.7" r="2.25"/>
<circle cx="123.9" cy="300.3" r="2.25"/>
<circle cx="167.7" cy="311.2" r="2.25"/>
<circle cx="163.2" cy="287.1" r="2.25"/>
<circle cx="83.7" cy="275.6" r="2.25"/>
<circle cx="149.7" cy="239.6" r="2.25"/>
<circle cx="279.9" cy="229.4" r="2.25"/>
<circle cx="93.2" cy="249.7" r="2.25"/>
<circle cx="198.8" cy="277.2" r="2.25"/>
<circle cx="103.3" cy="290.7" r="2.25"/>
<circle cx="164.8" cy="234.3" r="2.25"/>
<circle cx="143.4" cy="269.3" r="2.25"/>
<circle cx="118.0" cy="221.1" r="2.25"/>
<circle cx="110.9" cy="341.3" r="2.25"/>
<circle cx="188.4" cy="226.4" r="2.25"/>
<circle cx="85.3" cy="228.7" r="2.25"/>
<circle cx="135.1" cy="230.1" r="2.25"/>
<circle cx="70.0" cy="251.3" r="2.25"/>
</g>
<g fill="#fb8072">
<circle cx="153.4" cy="210.4" r="2.25"/>
<circle cx="141.3" cy="73.9" r="2.25"/>
<circle cx="149.4" cy="88.5" r="2.25"/>
<circle cx="220.6" cy="250.5" r="2.25"/>
<circle cx="242.3" cy="124.8" r="2.25"/>
<circle cx="179.2" cy="152.4" r="2.25"/>
<circle cx="163.3" cy="189.9" r="2.25"/>
<circle cx="144.4" cy="218.7" r="2.25"/>
<circle cx="103.1" cy="228.9" r="2.25"/>
<circle cx="217.5" cy="150.4" r="2.25"/>
<circle cx="220.6" cy="324.2" r="2.25"/>
<circle cx="114.1" cy="155.3" r="2.25"/>
<circle cx="125.4" cy="182.4" r="2.25"/>
<circle cx="98.1" cy="279.1" r="2.25"/>
<circle cx="207.2" cy="120.1" r="2.25"/>
<circle cx="119.4" cy="259.5" r="2.25"/>
<circle cx="177.1" cy="225.8" r="2.25"/>
<circle cx="136.9" cy="106.1" r="2.25"/>
<circle cx="174.9" cy="119.6" r="2.25"/>
<circle cx="115.4" cy="137.6" r="2.25"/>
<circle cx="175.0" cy="276.0" r="2.25"/>
<circle cx="93.4" cy="154.9" r="2.25"/>
<circle cx="191.5" cy="308.5" r="2.25"/>
<circle cx="203.2" cy="241.0" r="2.25"/>
<circle cx="113.2" cy="191.5" r="2.25"/>
<circle cx="125.2" cy="194.8" r="2.25"/>
</g>
<g fill="#f2f2f2">
<circle cx="93.0" cy="172.9" r="2.25"/>
<circle cx="170.1" cy="93.1" r="2.25"/>
<circle cx="160.2" cy="125.2" r="2.25"/>
<circle cx="81.5" cy="172.0" r="2.25"/>
<circle cx="138.9" cy="121.1" r="2.25"/>
<circle cx="109.5" cy="217.3" r="2.25"/>
<circle cx="117.6" cy="155.5" r="2.25"/>
<circle cx="174.8" cy="113.3" r="2.25"/>
<circle cx="145.9" cy="192.4" r="2.25"/>
<circle cx="144.5" cy="124.2" r="2.25"/>
</g>
<g fill="#6ea8fb">
<circle cx="211.9" cy="238.5" r="2.25"/>
<circle cx="112.1" cy="212.0" r="2.25"/>
<circle cx="162.3" cy="305.4" r="2.25"/>
<circle cx="183.4" cy="202.5" r="2.25"/>
<circle cx="160.2" cy="115.9" r="2.25"/>
<circle cx="172.9" cy="172.8" r="2.25"/>
<circle cx="162.8" cy="366.9" r="2.25"/>
<circle cx="131.9" cy="330.5" r="2.25"/>
<circle cx="140.0" cy="85.2" r="2.25"/>
<circle cx="143.8" cy="165.6" r="2.25"/>
<circle cx="128.1" cy="262.7" r="2.25"/>
<circle cx="203.2" cy="141.5" r="2.25"/>
<circle cx="258.9" cy="231.2" r="2.25"/>
<circle cx="216.6" cy="188.4" r="2.25"/>
<circle cx="254.3" cy="116.6" r="2.25"/>
<circle cx="151.4" cy="355.1" r="2.25"/>
<circle cx="192.9" cy="111.6" r="2.25"/>
<circle cx="187.3" cy="96.5" r="2.25"/>
<circle cx="210.8" cy="283.0" r="2.25"/>
</g>
<g fill="#b58252">
<circle cx="199.3" cy="264.9" r="2.25"/>
<circle cx="180.3" cy="143.0" r="2.25"/>
<circle cx="138.9" cy="230.6" r="2.25"/>
<circle cx="229.9" cy="310.5" r="2.25"/>
<circle cx="212.5" cy="217.9" r="2.25"/>
<circle cx="219.8" cy="259.9" r="2.25"/>
<circle cx="145.1" cy="301.3" r="2.25"/>
<circle cx="158.1" cy="175.2" r="2.25"/>
<circle cx="238.1" cy="242.2" r="2.25"/>
<circle cx="177.3" cy="287.7" r="2.25"/>
<circle cx="201.0" cy="134.7" r="2.25"/>
<circle cx="96.2" cy="267.0" r="2.25"/>
<circle cx="214.2" cy="177.1" r="2.25"/>
<circle cx="212.1" cy="312.3" r="2.25"/>
<circle cx="197.7" cy="150.2" r="2.25"/>
<circle cx="135.2" cy="250.6" r="2.25"/>
<circle cx="203.7" cy="126.2" r="2.25"/>
<circle cx="210.0" cy="212.2" r="2.25"/>
<circle cx="232.3" cy="169.0" r="2.25"/>
<circle cx="83.8" cy="266.5" r="2.25"/>
<circle cx="246.9" cy="159.9" r="2.25"/>
<circle cx="148.3" cy="289.4" r="2.25"/>
<circle cx="238.4" cy="331.4" r="2.25"/>
<circle cx="117.0" cy="332.9" r="2.25"/>
<circle cx="235.0" cy="337.1" r="2.25"/>
<circle cx="176.7" cy="305.0" r="2.25"/>
<circle cx="194.5" cy="309.2" r="2.25"/>
<circle cx="203.9" cy="200.2" r="2.25"/>
<circle cx="111.9" cy="235.6" r="2.25"/>
<circle cx="154.8" cy="195.7" r="2.25"/>
<circle cx="210.7" cy="280.4" r="2.25"/>
<circle cx="146.6" cy="253.8" r="2.25"/>
<circle cx="272.4" cy="193.4" r="2.25"/>
<circle cx="66.4" cy="248.7" r="2.25"/>
<circle cx="278.9" cy="190.6" r="2.25"/>
<circle cx="74.1" cy="210.6" r="2.25"/>
<circle cx="170.3" cy="317.4" r="2.25"/>
<circle cx="124.9" cy="206.6" r="2.25"/>
<circle cx="246.7" cy="169.4" r="2.25"/>
</g>
<g fill="#fde3b5">
<circle cx="189.2" cy="306.3" r="2.25"/>
<circle cx="146.1" cy="101.0" r="2.25"/>
<circle cx="223.5" cy="328.1" r="2.25"/>
<circle cx="171.9" cy="107.8" r="2.25"/>
<circle cx="227.7" cy="127.2" r="2.25"/>
<circle cx="168.9" cy="107.6" r="2.25"/>
<circle cx="179.4" cy="246.5" r="2.25"/>
<circle cx="105.5" cy="232.2" r="2.25"/>
<circle cx="160.9" cy="80.2" r="2.25"/>
<circle cx="179.0" cy="320.0" r="2.25"/>
<circle cx="76.4" cy="234.0" r="2.25"/>
<circle cx="136.8" cy="271.1" r="2.25"/>
<circle cx="218.1" cy="221.8" r="2.25"/>
<circle cx="155.0" cy="266.6" r="2.25"/>
<circle cx="181.8" cy="258.4" r="2.25"/>
<circle cx="196.2" cy="262.0" r="2.25"/>
<circle cx="191.9" cy="120.4" r="2.25"/>
<circle cx="209.2" cy="152.6" r="2.25"/>
<circle cx="92.5" cy="178.2" r="2.25"/>
<circle cx="266.5" cy="113.6" r="2.25"/>
<circle cx="247.9" cy="142.2" r="2.25"/>
<circle cx="198.9" cy="199.9" r="2.25"/>
<circle cx="195.4" cy="193.6" r="2.25"/>
<circle cx="230.6" cy="115.8" r="2.25"/>
<circle cx="228.4" cy="192.3" r="2.25"/>
</g>
<g fill="#7b4a12">
<circle cx="194.4" cy="152.6" r="2.25"/>
<circle cx="154.9" cy="183.6" r="2.25"/>
</g>
<g fill="#1fd6a0">
<circle cx="236.4" cy="228.3" r="2.25"/>
<circle cx="222.9" cy="180.0" r="2.25"/>
<circle cx="97.3" cy="300.2" r="2.25"/>
<circle cx="220.0" cy="188.6" r="2.25"/>
<circle cx="136.0" cy="285.9" r="2.25"/>
<circle cx="201.5" cy="274.2" r="2.25"/>
<circle cx="255.8" cy="240.7" r="2.25"/>
<circle cx="247.8" cy="213.7" r="2.25"/>
<circle cx="178.6" cy="190.5" r="2.25"/>
<circle cx="207.0" cy="294.9" r="2.25"/>
<circle cx="215.5" cy="141.0" r="2.25"/>
</g>
<g fill="#969696">
<circle cx="104.7" cy="173.3" r="2.25"/>
<circle cx="127.1" cy="141.2" r="2.25"/>
<circle cx="141.7" cy="147.9" r="2.25"/>
<circle cx="137.3" cy="171.0" r="2.25"/>
<circle cx="158.5" cy="328.8" r="2.25"/>
</g>
<g fill="#a9cbff">
<circle cx="241.0" cy="248.5" r="2.25"/>
<circle cx="139.7" cy="283.2" r="2.25"/>
</g>
<g fill="#f57ef0">
<circle cx="102.9" cy="158.0" r="2.25"/>
<circle cx="139.5" cy="124.1" r="2.25"/>
<circle cx="123.3" cy="329.8" r="2.25"/>
<circle cx="203.4" cy="315.6" r="2.25"/>
<circle cx="172.3" cy="113.6" r="2.25"/>
</g>
<g fill="#e31a1c">
<circle cx="210.9" cy="270.7" r="2.25"/>
<circle cx="137.9" cy="242.4" r="2.25"/>
<circle cx="183.5" cy="276.4" r="2.25"/>
<circle cx="194.6" cy="320.6" r="2.25"/>
<circle cx="192.7" cy="364.7" r="2.25"/>
<circle cx="81.5" cy="257.8" r="2.25"/>
<circle cx="157.8" cy="340.0" r="2.25"/>
<circle cx="111.4" cy="320.9" r="2.25"/>
<circle cx="249.8" cy="323.0" r="2.25"/>
<circle cx="130.8" cy="291.8" r="2.25"/>
<circle cx="128.5" cy="250.6" r="2.25"/>
<circle cx="111.4" cy="229.5" r="2.25"/>
<circle cx="148.3" cy="210.4" r="2.25"/>
</g>
<g fill="#fb8072">
<circle cx="144.5" cy="233.6" r="2.25"/>
<circle cx="101.5" cy="184.7" r="2.25"/>
<circle cx="180.3" cy="302.6" r="2.25"/>
<circle cx="150.3" cy="236.9" r="2.25"/>
<circle cx="100.7" cy="125.4" r="2.25"/>
<circle cx="101.5" cy="187.4" r="2.25"/>
<circle cx="137.7" cy="174.1" r="2.25"/>
<circle cx="138.0" cy="235.8" r="2.25"/>
<circle cx="225.9" cy="103.3" r="2.25"/>
<circle cx="146.4" cy="183.0" r="2.25"/>
<circle cx="178.6" cy="356.1" r="2.25"/>
<circle cx="160.8" cy="352.0" r="2.25"/>
<circle cx="106.9" cy="206.0" r="2.25"/>
<circle cx="140.2" cy="168.8" r="2.25"/>
<circle cx="96.0" cy="163.9" r="2.25"/>
<circle cx="187.0" cy="175.5" r="2.25"/>
<circle cx="131.5" cy="170.7" r="2.25"/>
<circle cx="163.9" cy="180.8" r="2.25"/>
<circle cx="96.6" cy="169.4" r="2.25"/>
<circle cx="171.3" cy="119.7" r="2.25"/>
</g>
<g fill="#f2f2f2">
<circle cx="116.5" cy="191.0" r="2.25"/>
<circle cx="121.2" cy="209.1" r="2.25"/>
<circle cx="202.9" cy="244.7" r="2.25"/>
<circle cx="86.3" cy="187.6" r="2.25"/>
<circle cx="99.1" cy="172.7" r="2.25"/>
<circle cx="137.1" cy="109.5" r="2.25"/>
<circle cx="86.2" cy="189.7" r="2.25"/>
<circle cx="123.0" cy="165.1" r="2.25"/>
<circle cx="125.4" cy="176.4" r="2.25"/>
</g>
<g fill="#6ea8fb">
<circle cx="201.9" cy="282.9" r="2.25"/>
<circle cx="238.9" cy="316.3" r="2.25"/>
<circle cx="128.7" cy="176.8" r="2.25"/>
<circle cx="245.1" cy="313.5" r="2.25"/>
<circle cx="196.1" cy="182.2" r="2.25"/>
<circle cx="124.9" cy="279.6" r="2.25"/>
<circle cx="212.1" cy="141.5" r="2.25"/>
<circle cx="259.7" cy="223.1" r="2.25"/>
<circle cx="235.1" cy="236.6" r="2.25"/>
<circle cx="112.0" cy="140.9" r="2.25"/>
<circle cx="236.3" cy="219.0" r="2.25"/>
<circle cx="200.7" cy="211.4" r="2.25"/>
<circle cx="139.9" cy="109.7" r="2.25"/>
<circle cx="184.5" cy="104.6" r="2.25"/>
<circle cx="209.1" cy="312.2" r="2.25"/>
<circle cx="201.8" cy="191.2" r="2.25"/>
</g>
<g fill="#b58252">
<circle cx="73.5" cy="228.4" r="2.25"/>
<circle cx="157.7" cy="272.3" r="2.25"/>
<circle cx="159.3" cy="225.1" r="2.25"/>
<circle cx="178.1" cy="267.1" r="2.25"/>
<circle cx="145.8" cy="115.4" r="2.25"/>
<circle cx="114.4" cy="252.6" r="2.25"/>
<circle cx="229.0" cy="254.4" r="2.25"/>
<circle cx="141.3" cy="312.8" r="2.25"/>
<circle cx="131.9" cy="235.6" r="2.25"/>
<circle cx="201.5" cy="267.8" r="2.25"/>
<circle cx="158.4" cy="153.9" r="2.25"/>
<circle cx="68.7" cy="201.8" r="2.25"/>
<circle cx="184.0" cy="367.2" r="2.25"/>
<circle cx="196.5" cy="258.5" r="2.25"/>
<circle cx="129.3" cy="321.9" r="2.25"/>
<circle cx="207.3" cy="188.6" r="2.25"/>
<circle cx="197.4" cy="235.3" r="2.25"/>
<circle cx="137.2" cy="94.2" r="2.25"/>
<circle cx="145.3" cy="200.7" r="2.25"/>
<circle cx="202.9" cy="247.2" r="2.25"/>
<circle cx="230.4" cy="215.7" r="2.25"/>
<circle cx="128.2" cy="273.8" r="2.25"/>
<circle cx="203.9" cy="202.6" r="2.25"/>
<circle cx="128.1" cy="276.9" r="2.25"/>
<circle cx="201.2" cy="123.1" r="2.25"/>
<circle cx="282.9" cy="223.8" r="2.25"/>
<circle cx="181.6" cy="175.3" r="2.25"/>
<circle cx="134.9" cy="242.2" r="2.25"/>
<circle cx="142.3" cy="121.7" r="2.25"/>
<circle cx="218.6" cy="286.5" r="2.25"/>
<circle cx="185.1" cy="326.0" r="2.25"/>
<circle cx="241.1" cy="328.4" r="2.25"/>
<circle cx="235.9" cy="301.3" r="2.25"/>
<circle cx="118.8" cy="277.3" r="2.25"/>
<circle cx="165.5" cy="210.2" r="2.25"/>
<circle cx="211.4" cy="253.5" r="2.25"/>
</g>
<g fill="#fde3b5">
<circle cx="217.0" cy="103.2" r="2.25"/>
<circle cx="230.4" cy="126.9" r="2.25"/>
<circle cx="96.7" cy="240.2" r="2.25"/>
<circle cx="118.8" cy="356.5" r="2.25"/>
<circle cx="172.2" cy="192.7" r="2.25"/>
<circle cx="263.7" cy="185.0" r="2.25"/>
<circle cx="224.9" cy="129.6" r="2.25"/>
<circle cx="214.1" cy="348.3" r="2.25"/>
<circle cx="256.8" cy="140.4" r="2.25"/>
<circle cx="247.5" cy="242.5" r="2.25"/>
<circle cx="215.8" cy="115.1" r="2.25"/>
<circle cx="265.7" cy="122.3" r="2.25"/>
<circle cx="237.5" cy="177.5" r="2.25"/>
<circle cx="171.0" cy="137.4" r="2.25"/>
<circle cx="202.2" cy="350.6" r="2.25"/>
<circle cx="132.2" cy="332.9" r="2.25"/>
<circle cx="176.1" cy="343.9" r="2.25"/>
<circle cx="210.6" cy="203.1" r="2.25"/>
</g>
<g fill="#1f55b5">
<circle cx="190.5" cy="252.6" r="2.25"/>
<circle cx="203.5" cy="232.9" r="2.25"/>
<circle cx="226.5" cy="156.8" r="2.25"/>
<circle cx="152.9" cy="245.4" r="2.25"/>
<circle cx="210.6" cy="273.9" r="2.25"/>
<circle cx="181.4" cy="184.5" r="2.25"/>
<circle cx="79.9" cy="296.3" r="2.25"/>
<circle cx="161.2" cy="175.0" r="2.25"/>
<circle cx="185.0" cy="332.7" r="2.25"/>
<circle cx="78.8" cy="246.2" r="2.25"/>
</g>
<g fill="#1fd6a0">
<circle cx="73.9" cy="204.4" r="2.25"/>
<circle cx="186.6" cy="358.4" r="2.25"/>
<circle cx="121.5" cy="297.2" r="2.25"/>
<circle cx="231.8" cy="171.7" r="2.25"/>
<circle cx="104.4" cy="190.9" r="2.25"/>
<circle cx="150.4" cy="151.1" r="2.25"/>
<circle cx="275.5" cy="199.3" r="2.25"/>
<circle cx="233.1" cy="210.4" r="2.25"/>
<circle cx="171.7" cy="134.4" r="2.25"/>
<circle cx="160.8" cy="107.0" r="2.25"/>
<circle cx="198.1" cy="208.6" r="2.25"/>
<circle cx="220.7" cy="233.4" r="2.25"/>
<circle cx="213.8" cy="108.8" r="2.25"/>
</g>
<g fill="#969696">
<circle cx="188.4" cy="229.5" r="2.25"/>
<circle cx="155.0" cy="352.0" r="2.25"/>
<circle cx="114.7" cy="146.8" r="2.25"/>
<circle cx="147.0" cy="145.5" r="2.25"/>
</g>
<g fill="#f57ef0">
<circle cx="199.1" cy="193.9" r="2.25"/>
<circle cx="261.0" cy="178.8" r="2.25"/>
<circle cx="228.5" cy="340.0" r="2.25"/>
</g>
<g fill="#e31a1c">
<circle cx="120.2" cy="250.4" r="2.25"/>
<circle cx="183.9" cy="290.6" r="2.25"/>
<circle cx="159.4" cy="219.2" r="2.25"/>
<circle cx="148.6" cy="266.1" r="2.25"/>
<circle cx="160.2" cy="269.4" r="2.25"/>
<circle cx="165.4" cy="225.1" r="2.25"/>
</g>
<g fill="#fb8072">
<circle cx="121.0" cy="146.9" r="2.25"/>
<circle cx="92.6" cy="278.6" r="2.25"/>
<circle cx="145.4" cy="354.8" r="2.25"/>
<circle cx="196.4" cy="265.2" r="2.25"/>
<circle cx="80.4" cy="275.3" r="2.25"/>
<circle cx="117.5" cy="147.3" r="2.25"/>
<circle cx="120.5" cy="138.4" r="2.25"/>
<circle cx="175.0" cy="284.6" r="2.25"/>
<circle cx="93.2" cy="267.2" r="2.25"/>
<circle cx="125.3" cy="353.3" r="2.25"/>
<circle cx="110.4" cy="358.8" r="2.25"/>
<circle cx="107.7" cy="190.4" r="2.25"/>
<circle cx="147.4" cy="218.4" r="2.25"/>
<circle cx="175.5" cy="258.5" r="2.25"/>
<circle cx="136.3" cy="121.0" r="2.25"/>
<circle cx="238.7" cy="230.6" r="2.25"/>
<circle cx="99.7" cy="151.8" r="2.25"/>
<circle cx="124.6" cy="215.3" r="2.25"/>
</g>
<g fill="#f2f2f2">
<circle cx="77.2" cy="213.5" r="2.25"/>
<circle cx="129.0" cy="79.9" r="2.25"/>
<circle cx="92.4" cy="273.3" r="2.25"/>
<circle cx="137.5" cy="177.2" r="2.25"/>
<circle cx="107.8" cy="164.1" r="2.25"/>
<circle cx="133.3" cy="285.8" r="2.25"/>
<circle cx="114.3" cy="152.2" r="2.25"/>
<circle cx="130.4" cy="120.6" r="2.25"/>
<circle cx="105.6" cy="164.4" r="2.25"/>
<circle cx="88.4" cy="133.7" r="2.25"/>
<circle cx="131.7" cy="94.0" r="2.25"/>
</g>
<circle cx="280.0" cy="236.3" r="2.25" fill="#6e6e6e"/>
</g>
<g font-family="'Liberation Sans',sans-serif">
<text x="25.2" y="160.1" font-size="5.6" letter-spacing="2.17" fill="#858585">NIEDERLANDE</text>
<text x="21.4" y="255.0" font-size="5.6" letter-spacing="1.22" fill="#858585">BELGIEN</text>
<text x="138.0" y="26.5" font-size="5.6" letter-spacing="2.61" fill="#858585">DÄNEMARK</text>
<text x="276.8" y="289.0" font-size="5.6" letter-spacing="2.18" fill="#858585">TSCHECHIEN</text>
<text x="239.0" y="375.8" font-size="5.6" letter-spacing="2.10" fill="#858585">ÖSTERREICH</text>
<text x="261.6" y="412.0" font-size="5.6" letter-spacing="0.56" fill="#858585">SLOWENIEN</text>
<text x="102.0" y="393.7" font-size="5.6" letter-spacing="1.30" fill="#858585">SCHWEIZ</text>
<text x="46.0" y="282.4" font-size="5.6" letter-spacing="0.82" fill="#858585">LUXEMBURG</text>
<text x="-54.0" y="394.6" font-size="5.6" letter-spacing="3.12" fill="#858585">FRANKREICH</text>
<text x="187.5" y="11.7" font-size="6.0" letter-spacing="0.66" fill="#8f9396">Kattegat</text>
<text x="276.8" y="89.2" font-size="6.0" letter-spacing="1.18" fill="#8f9396">Ostsee</text>
<text x="19.8" y="179.7" font-size="6.16" fill="#e4e4e4" stroke="#393a3a" stroke-width=".8" paint-order="stroke">Amsterdam</text>
<text x="7.5" y="191.8" font-size="6.11" fill="#dcdcdc" stroke="#393a3a" stroke-width=".8" paint-order="stroke">Den Haag</text>
<text x="11.2" y="198.2" font-size="6.08" fill="#dcdcdc" stroke="#393a3a" stroke-width=".8" paint-order="stroke">Rotterdam</text>
<text x="8.6" y="226.2" font-size="6.11" fill="#dcdcdc" stroke="#393a3a" stroke-width=".8" paint-order="stroke">Antwerpen</text>
<text x="12.0" y="241.0" font-size="6.00" fill="#dcdcdc" stroke="#393a3a" stroke-width=".8" paint-order="stroke">Brüssel</text>
<text x="209.0" y="40.2" font-size="6.14" fill="#ececec" stroke="#393a3a" stroke-width=".8" paint-order="stroke">Kopenhagen</text>
<text x="114.5" y="49.0" font-size="5.69" fill="#d0d0d0" stroke="#393a3a" stroke-width=".8" paint-order="stroke">Esbjerg</text>
<text x="267.5" y="136.5" font-size="6.17" fill="#c8c8c8" stroke="#393a3a" stroke-width=".8" paint-order="stroke">Stettin</text>
<text x="327.0" y="177.0" font-size="5.64" fill="#bdbdbd" stroke="#393a3a" stroke-width=".8" paint-order="stroke">Posen</text>
<text x="327.0" y="230.8" font-size="6.19" fill="#c4c4c4" stroke="#393a3a" stroke-width=".8" paint-order="stroke">Breslau</text>
<text x="265.9" y="271.5" font-size="6.82" fill="#dedede" stroke="#393a3a" stroke-width=".8" paint-order="stroke">Prag</text>
<text x="313.7" y="342.3" font-size="6.45" fill="#e8e8e8" stroke="#393a3a" stroke-width=".8" paint-order="stroke">Wien</text>
<text x="306.8" y="359.3" font-size="5.57" fill="#d0d0d0" stroke="#393a3a" stroke-width=".8" paint-order="stroke">Mattersburg</text>
<text x="292.0" y="383.9" font-size="5.31" fill="#d0d0d0" stroke="#393a3a" stroke-width=".8" paint-order="stroke">Graz</text>
<text x="262.4" y="421.0" font-size="6.02" fill="#e0e0e0" stroke="#393a3a" stroke-width=".8" paint-order="stroke">Ljubljana</text>
<text x="301.5" y="429.9" font-size="6.09" fill="#e0e0e0" stroke="#393a3a" stroke-width=".8" paint-order="stroke">Zagreb</text>
<text x="117.9" y="372.6" font-size="6.16" fill="#dcdcdc" stroke="#393a3a" stroke-width=".8" paint-order="stroke">Zürich</text>
<text x="142.5" y="381.6" font-size="5.98" fill="#d4d4d4" stroke="#393a3a" stroke-width=".8" paint-order="stroke">Vaduz</text>
<text x="93.0" y="388.4" font-size="5.97" fill="#dcdcdc" stroke="#393a3a" stroke-width=".8" paint-order="stroke">Bern</text>
<text x="27.0" y="431.4" font-size="6.57" fill="#d8d8d8" stroke="#393a3a" stroke-width=".8" paint-order="stroke">Lyon</text>
<text x="129.6" y="440.9" font-size="6.69" font-weight="bold" fill="#f0f0f0" stroke="#393a3a" stroke-width=".8" paint-order="stroke">Mailand</text>
<text x="51.0" y="288.9" font-size="6.20" fill="#d0d0d0" stroke="#393a3a" stroke-width=".8" paint-order="stroke">Luxemburg</text>
<text x="72.7" y="303.3" font-size="5.24" fill="#c0c0c0" stroke="#393a3a" stroke-width=".8" paint-order="stroke">Saarbrücken</text>
<g opacity=".68" text-anchor="middle" fill="#d0d0d0" stroke="#808080" stroke-width=".9" stroke-linejoin="round" paint-order="stroke" font-size="6.6" style="filter:blur(.3px)">
<text x="163.0" y="131.2">Hamburg</text>
<text x="133.5" y="150.2">Bremen</text>
<text x="156.0" y="180.2">Hannover</text>
<text x="247.0" y="173.2">Berlin</text>
<text x="88.0" y="217.8">Essen</text>
<text x="81.0" y="226.2">Düsseldorf</text>
<text x="86.0" y="237.2">Köln</text>
<text x="129.5" y="265.8">Frankfurt</text>
<text x="128.6" y="274.2">Wiesbaden</text>
<text x="125.0" y="293.8">Mannheim</text>
<text x="142.0" y="320.9">Stuttgart</text>
<text x="190.0" y="295.2">Nürnberg</text>
<text x="200.0" y="345.2">München</text>
<text x="221.7" y="221.5">Leipzig</text>
<text x="255.8" y="232.9">Dresden</text>
<text x="234.0" y="241.2">Chemnitz</text>
</g></g>
</svg>
<div class="btn" style="left:8px;top:8px;width:18px;height:18px"><svg width="18" height="18" viewBox="0 0 18 18"><path d="M8.6 5.2L5.2 9l3.4 3.8M12 5.2L8.6 9l3.4 3.8" fill="none" stroke="#777" stroke-width=".9"/></svg></div>
<div class="btn" style="left:29px;top:8px;width:131px;height:18px"><span class="ph">Nach Ort suchen ...</span><span class="sdiv"></span><svg style="position:absolute;left:117px;top:4px" width="10" height="10" viewBox="0 0 10 10"><circle cx="4" cy="4" r="2.9" fill="none" stroke="#666" stroke-width=".9"/><path d="M6.2 6.2L9.3 9.3" stroke="#666" stroke-width="1.1"/></svg></div>
<div class="tip"><span>Punkt 1690: Braunerde</span></div>
<svg style="position:absolute;left:165px;top:176px" width="16" height="16" viewBox="0 0 16 16"><circle cx="7.5" cy="7.6" r="2.2" fill="#b58252"/><circle cx="7.5" cy="7.6" r="3.1" fill="none" stroke="#2fd6e6" stroke-width="1.5"/><path d="M3.6 15.3L7.6 8.2 11.7 15.3z" fill="#fff"/></svg>

 <div id="attr">Esri, HERE, Garmin, FAO, NOAA, USGS | Bodenzustandserhebung Landwirtschaft, Thünen-Institut für Agrarklimaschutz</div>
</div>
</body>
</html>
